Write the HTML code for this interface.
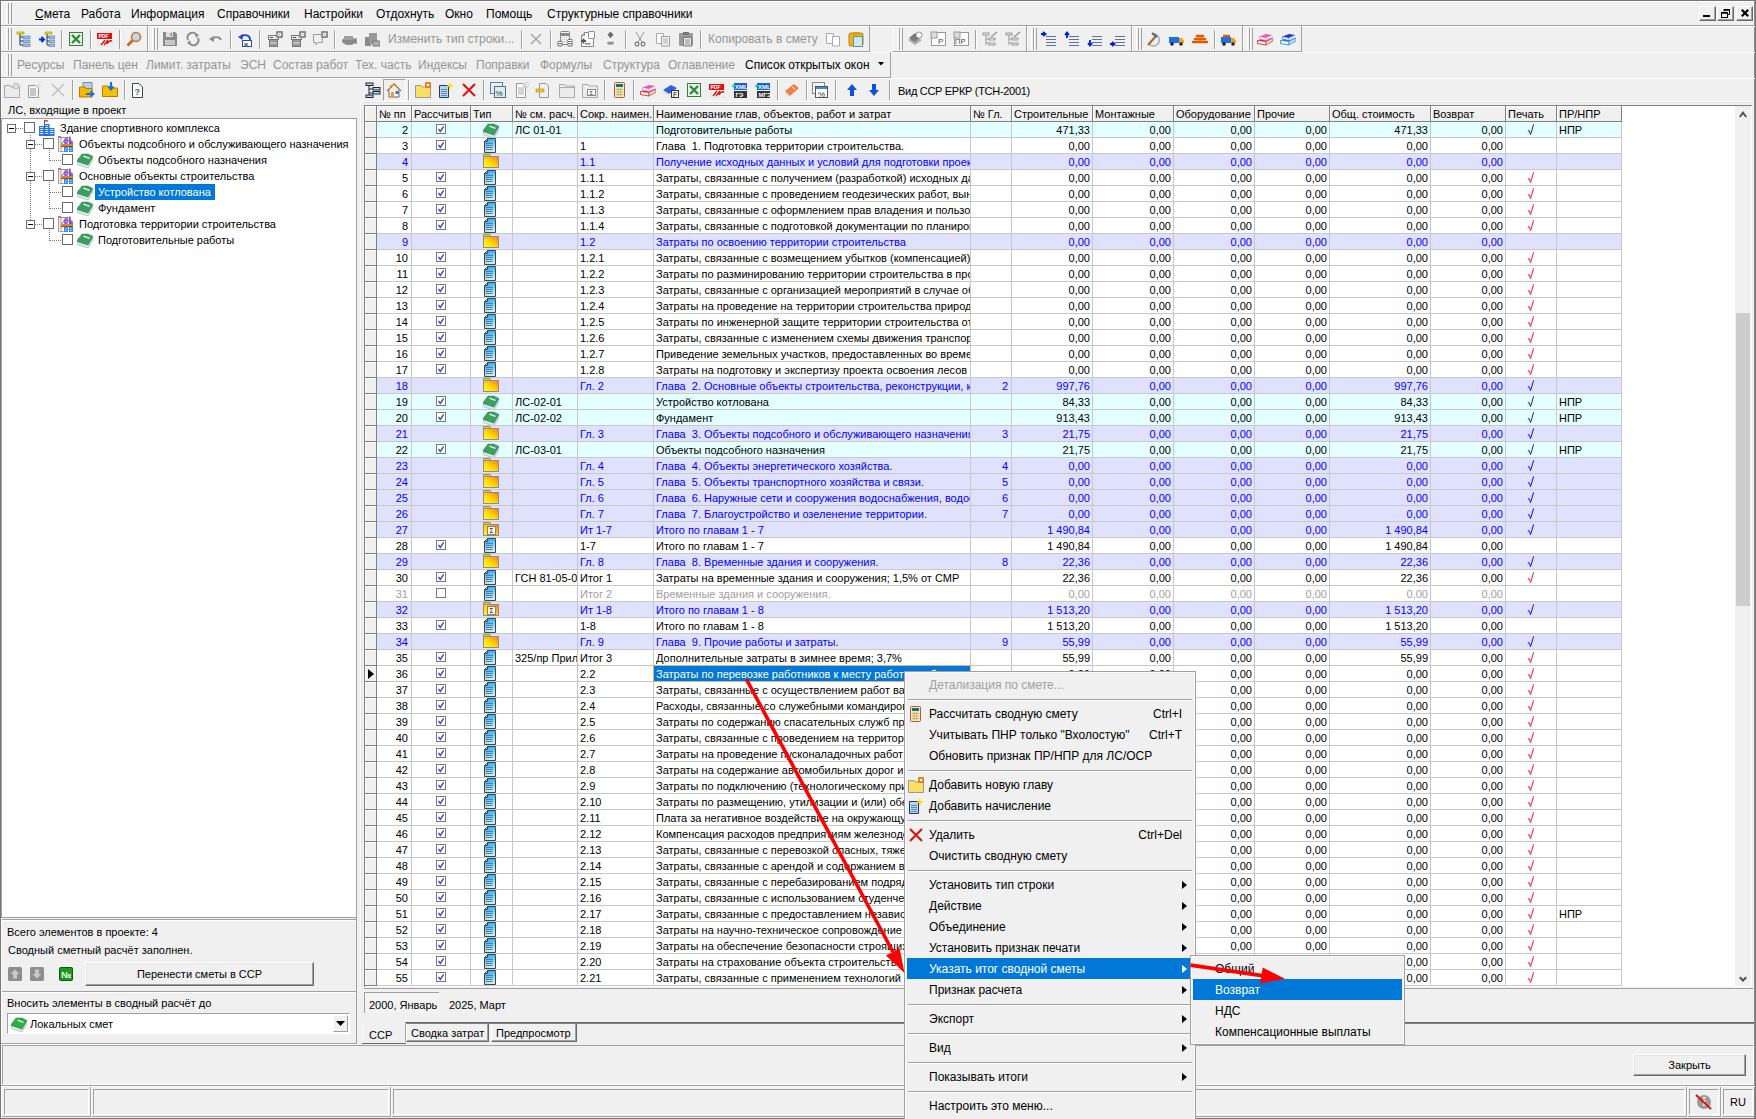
<!DOCTYPE html><html><head><meta charset="utf-8"><style>*{margin:0;padding:0}html,body{width:1756px;height:1119px;overflow:hidden;background:#f0f0f0}
body>div,body>svg{position:absolute}
.t11{font-family:"Liberation Sans",sans-serif;font-size:11px;line-height:11px;white-space:pre}
.t12{font-family:"Liberation Sans",sans-serif;font-size:12px;line-height:12px;white-space:pre}
.clip{overflow:hidden}.r{text-align:right}</style></head><body><div style="left:0px;top:0px;width:1756px;height:1119px;background:#f0f0f0"></div>
<div style="left:0px;top:0px;width:1756px;height:1px;background:#767676"></div>
<div style="left:0px;top:0px;width:1px;height:1119px;background:#767676"></div>
<div style="left:1px;top:1px;width:1754px;height:1px;background:#fff"></div>
<div style="left:1px;top:1px;width:1px;height:1117px;background:#fff"></div>
<div style="left:1755px;top:0px;width:1px;height:1119px;background:#767676"></div>
<div style="left:1754px;top:1px;width:1px;height:1117px;background:#8c8c8c"></div>
<div style="left:0px;top:1118px;width:1756px;height:1px;background:#767676"></div>
<div style="left:6px;top:3px;width:1px;height:21px;background:#fff"></div>
<div style="left:8px;top:3px;width:1px;height:21px;background:#a0a0a0"></div>
<div style="left:9px;top:3px;width:1px;height:21px;background:#fff"></div>
<div style="left:11px;top:3px;width:1px;height:21px;background:#a0a0a0"></div>
<div class="t12" style="left:35px;top:8px;color:#000;">Смета</div>
<div class="t12" style="left:81px;top:8px;color:#000;">Работа</div>
<div class="t12" style="left:131px;top:8px;color:#000;">Информация</div>
<div class="t12" style="left:217px;top:8px;color:#000;">Справочники</div>
<div class="t12" style="left:304px;top:8px;color:#000;">Настройки</div>
<div class="t12" style="left:376px;top:8px;color:#000;">Отдохнуть</div>
<div class="t12" style="left:445px;top:8px;color:#000;">Окно</div>
<div class="t12" style="left:486px;top:8px;color:#000;">Помощь</div>
<div class="t12" style="left:547px;top:8px;color:#000;">Структурные справочники</div>
<div style="left:35px;top:19px;width:8px;height:1px;background:#000"></div>
<div style="left:1699px;top:6px;width:17px;height:15px;background:#f0f0f0;border-top:1px solid #fff;border-left:1px solid #fff;border-right:1px solid #696969;border-bottom:1px solid #696969;box-sizing:border-box;box-shadow:inset -1px -1px 0 #a0a0a0"></div>
<div style="left:1703px;top:15px;width:7px;height:2px;background:#000"></div>
<div style="left:1717px;top:6px;width:17px;height:15px;background:#f0f0f0;border-top:1px solid #fff;border-left:1px solid #fff;border-right:1px solid #696969;border-bottom:1px solid #696969;box-sizing:border-box;box-shadow:inset -1px -1px 0 #a0a0a0"></div>
<svg style="left:1721px;top:9px" width="10" height="9" viewBox="0 0 10 9"><path d="M3 0.5H8.5V5.5H7M3 0.5V2.5" fill="none" stroke="#000"/><path d="M3 1H8.5" stroke="#000" stroke-width="1.6"/><rect x="0.5" y="3.5" width="6" height="5" fill="none" stroke="#000"/><path d="M0.5 4H6.5" stroke="#000" stroke-width="1.6"/></svg>
<div style="left:1736px;top:6px;width:17px;height:15px;background:#f0f0f0;border-top:1px solid #fff;border-left:1px solid #fff;border-right:1px solid #696969;border-bottom:1px solid #696969;box-sizing:border-box;box-shadow:inset -1px -1px 0 #a0a0a0"></div>
<svg style="left:1741px;top:9px" width="8" height="8" viewBox="0 0 8 8"><path d="M0.8 0.8L7.2 7.2M7.2 0.8L0.8 7.2" stroke="#000" stroke-width="2.2"/></svg>
<div style="left:1px;top:25px;width:1754px;height:1px;background:#a0a0a0"></div>
<div style="left:1px;top:26px;width:1754px;height:1px;background:#fff"></div>
<div style="left:1px;top:51px;width:147px;height:1px;background:#a0a0a0"></div>
<div style="left:147px;top:26px;width:1px;height:25px;background:#a0a0a0"></div>
<div style="left:6px;top:28px;width:1px;height:22px;background:#fff"></div>
<div style="left:8px;top:28px;width:1px;height:22px;background:#a0a0a0"></div>
<div style="left:9px;top:28px;width:1px;height:22px;background:#fff"></div>
<div style="left:11px;top:28px;width:1px;height:22px;background:#a0a0a0"></div>
<svg style="left:15px;top:31px" width="16" height="16" viewBox="0 0 16 16"><rect x="2" y="1" width="7" height="2" fill="#f0e000" stroke="#a09000" stroke-width="0.6"/><path d="M5 3V14M5 6H8M5 10H8M5 14H8" stroke="#203060"/><rect x="8" y="5" width="7" height="2.4" fill="#9ec0e8" stroke="#5070a0" stroke-width="0.6"/><rect x="8" y="9" width="7" height="2.4" fill="#9ec0e8" stroke="#5070a0" stroke-width="0.6"/><rect x="8" y="13" width="7" height="2.4" fill="#9ec0e8" stroke="#5070a0" stroke-width="0.6"/></svg>
<svg style="left:39px;top:31px" width="16" height="16" viewBox="0 0 16 16"><rect x="6" y="1" width="7" height="2" fill="#f0e000" stroke="#a09000" stroke-width="0.6"/><path d="M8 3V14M8 6H10M8 10H10M8 14H10" stroke="#203060"/><rect x="10" y="5" width="6" height="2.4" fill="#9ec0e8" stroke="#5070a0" stroke-width="0.6"/><rect x="10" y="9" width="6" height="2.4" fill="#9ec0e8" stroke="#5070a0" stroke-width="0.6"/><rect x="10" y="13" width="6" height="2.4" fill="#9ec0e8" stroke="#5070a0" stroke-width="0.6"/><path d="M0 8.5H4M2.5 6L5 8.5L2.5 11" stroke="#0030e0" stroke-width="2" fill="none"/></svg>
<svg style="left:68px;top:31px" width="16" height="16" viewBox="0 0 16 16"><rect x="1.5" y="1.5" width="13" height="13" fill="#e8f4e8" stroke="#3a7a3a"/><path d="M4 4L12 12M12 4L4 12" stroke="#2e8b3a" stroke-width="2.4"/></svg>
<svg style="left:97px;top:31px" width="16" height="16" viewBox="0 0 16 16"><rect x="2" y="1" width="13" height="14" fill="#fff" stroke="#ddd"/><rect x="0" y="2" width="15" height="6" fill="#e01010"/><text x="1.5" y="7" font-size="5" font-family="Liberation Sans" font-weight="bold" fill="#fff">PDF</text><path d="M4 14L8 9M7 14L11 9M10 13Q12 9 15 10" stroke="#e01010" stroke-width="1.5" fill="none"/></svg>
<svg style="left:126px;top:31px" width="16" height="16" viewBox="0 0 16 16"><circle cx="10" cy="6" r="4.5" fill="#b8d8f8" stroke="#d07020" stroke-width="1.5"/><path d="M6.5 9.5L1.5 14.5" stroke="#d06010" stroke-width="2.5"/></svg>
<div style="left:61px;top:30px;width:1px;height:19px;background:#a0a0a0"></div>
<div style="left:62px;top:30px;width:1px;height:19px;background:#fff"></div>
<div style="left:90px;top:30px;width:1px;height:19px;background:#a0a0a0"></div>
<div style="left:91px;top:30px;width:1px;height:19px;background:#fff"></div>
<div style="left:119px;top:30px;width:1px;height:19px;background:#a0a0a0"></div>
<div style="left:120px;top:30px;width:1px;height:19px;background:#fff"></div>
<div style="left:148px;top:51px;width:722px;height:1px;background:#a0a0a0"></div>
<div style="left:869px;top:26px;width:1px;height:25px;background:#a0a0a0"></div>
<div style="left:148px;top:26px;width:1px;height:25px;background:#fff"></div>
<div style="left:152px;top:28px;width:1px;height:22px;background:#fff"></div>
<div style="left:154px;top:28px;width:1px;height:22px;background:#a0a0a0"></div>
<div style="left:155px;top:28px;width:1px;height:22px;background:#fff"></div>
<div style="left:157px;top:28px;width:1px;height:22px;background:#a0a0a0"></div>
<svg style="left:162px;top:31px" width="16" height="16" viewBox="0 0 16 16"><path d="M1 1H13L15 3V15H1Z" fill="#8a8a8a"/><rect x="4" y="1" width="7" height="5" fill="#e0e0e0"/><rect x="8.5" y="2" width="1.5" height="3" fill="#8a8a8a"/><rect x="3" y="9" width="10" height="5" fill="#c8c8c8"/></svg>
<svg style="left:185px;top:31px" width="16" height="16" viewBox="0 0 16 16"><path d="M3 9A5 5 0 0 1 12 4.5M13 7A5 5 0 0 1 4 11.5" stroke="#8a8a8a" stroke-width="2" fill="none"/><path d="M10 2L14 4L11 7Z M6 14L2 12L5 9Z" fill="#8a8a8a"/></svg>
<svg style="left:208px;top:31px" width="16" height="16" viewBox="0 0 16 16"><path d="M4 8A5 4 0 0 1 13 9" stroke="#8a8a8a" stroke-width="1.8" fill="none"/><path d="M1 8L6 5L6 11Z" fill="#8a8a8a"/></svg>
<svg style="left:237px;top:31px" width="16" height="16" viewBox="0 0 16 16"><path d="M4 6A5 4.5 0 0 1 13 9" stroke="#2040e0" stroke-width="1.8" fill="none"/><path d="M1 6L6 3L5.5 9Z" fill="#2040e0"/><rect x="5.5" y="9.5" width="9" height="6" fill="#fff" stroke="#2050a0"/><text x="7" y="15" font-size="6" font-family="Liberation Sans" fill="#000">ж</text></svg>
<svg style="left:267px;top:31px" width="16" height="16" viewBox="0 0 16 16"><rect x="1.5" y="4.5" width="10" height="4" fill="#e8e8e8" stroke="#7a7a7a"/><path d="M3 6.5H6" stroke="#555"/><rect x="2.5" y="8.5" width="8" height="7" fill="#9a9a9a" stroke="#777"/><path d="M3 12H10" stroke="#ddd"/><rect x="9" y="0" width="7" height="7" rx="1.2" fill="#8a8a8a"/><circle cx="12.5" cy="3.5" r="1.8" fill="#fff"/><circle cx="12.5" cy="3.5" r="0.7" fill="#8a8a8a"/></svg>
<svg style="left:290px;top:31px" width="16" height="16" viewBox="0 0 16 16"><rect x="1.5" y="4.5" width="10" height="4" fill="#e8e8e8" stroke="#7a7a7a"/><path d="M3 6.5H6" stroke="#555"/><rect x="2.5" y="8.5" width="8" height="7" fill="#9a9a9a" stroke="#777"/><path d="M3 12H10" stroke="#ddd"/><rect x="9" y="0" width="7" height="7" rx="1.2" fill="#8a8a8a"/><circle cx="12.5" cy="3.5" r="1.8" fill="#fff"/><circle cx="12.5" cy="3.5" r="0.7" fill="#8a8a8a"/></svg>
<svg style="left:312px;top:31px" width="16" height="16" viewBox="0 0 16 16"><path d="M1.5 3.5H10.5V11.5H6L4 14V11.5H1.5Z" fill="none" stroke="#9a9a9a"/><rect x="9" y="0" width="7" height="7" rx="1.2" fill="#8a8a8a"/><circle cx="12.5" cy="3.5" r="1.8" fill="#fff"/><circle cx="12.5" cy="3.5" r="0.7" fill="#8a8a8a"/></svg>
<svg style="left:341px;top:31px" width="16" height="16" viewBox="0 0 16 16"><ellipse cx="8" cy="10" rx="7" ry="4" fill="#8a8a8a"/><rect x="3" y="5" width="9" height="4" fill="#a0a0a0"/><path d="M15 7V13" stroke="#555"/></svg>
<svg style="left:364px;top:31px" width="16" height="16" viewBox="0 0 16 16"><rect x="1" y="6" width="6" height="9" fill="#8a8a8a"/><rect x="5" y="2" width="8" height="11" fill="#9a9a9a"/><rect x="9" y="10" width="7" height="5" fill="#b0b0b0" stroke="#777"/></svg>
<svg style="left:528px;top:31px" width="16" height="16" viewBox="0 0 16 16"><path d="M3 3L13 13M13 3L3 13" stroke="#9a9a9a" stroke-width="1.2"/></svg>
<svg style="left:557px;top:31px" width="16" height="16" viewBox="0 0 16 16"><rect x="3.5" y="0.5" width="9" height="13" rx="1" fill="#f4f4f4" stroke="#888"/><rect x="4" y="2" width="8" height="3" fill="#8a8a8a"/><path d="M5 6.5H11M5 8.5H11M5 10.5H11" stroke="#ccc" stroke-dasharray="1 1"/><ellipse cx="3" cy="11.5" rx="2.6" ry="1.3" fill="#fff" stroke="#6a6a6a"/><ellipse cx="3" cy="13.8" rx="2.6" ry="1.3" fill="#fff" stroke="#6a6a6a"/><ellipse cx="13" cy="9.5" rx="2.6" ry="1.3" fill="#fff" stroke="#6a6a6a"/><ellipse cx="13" cy="11.7" rx="2.6" ry="1.3" fill="#fff" stroke="#6a6a6a"/><ellipse cx="13" cy="13.8" rx="2.6" ry="1.3" fill="#fff" stroke="#6a6a6a"/></svg>
<svg style="left:580px;top:31px" width="16" height="16" viewBox="0 0 16 16"><path d="M4.5 1.5H13.5V15.5H1.5V4.5Z" fill="#fff" stroke="#888"/><path d="M1.5 4.5H4.5V1.5" fill="none" stroke="#888"/><rect x="8.5" y="0.5" width="6" height="7" rx="0.8" fill="#fff" stroke="#888"/><path d="M1 10H6M3.5 7.5V12.5" stroke="#555" stroke-width="1.8"/><rect x="5" y="12" width="5.5" height="1.6" fill="#8a8a8a"/></svg>
<svg style="left:602px;top:31px" width="16" height="16" viewBox="0 0 16 16"><path d="M8.5 1L11 3.8L8.5 6.8L6 3.8Z" fill="#6a6a6a" stroke="#6a6a6a" stroke-width="0.8" stroke-linejoin="round"/><rect x="5.5" y="11" width="6" height="2.2" rx="1" fill="#9a9a9a" stroke="#777" stroke-width="0.5"/></svg>
<svg style="left:632px;top:31px" width="16" height="16" viewBox="0 0 16 16"><path d="M4 1L10 11M12 1L6 11" stroke="#999" stroke-width="1"/><circle cx="5" cy="13" r="2" fill="none" stroke="#555"/><circle cx="11" cy="13" r="2" fill="none" stroke="#555"/></svg>
<svg style="left:655px;top:31px" width="16" height="16" viewBox="0 0 16 16"><path d="M1.5 2.5H8.5V12.5H1.5Z" fill="#fff" stroke="#aaa"/><path d="M6.5 5.5H14.5V15H6.5Z" fill="#f5f5f5" stroke="#999"/><path d="M8 8H13M8 10H13M8 12H13" stroke="#aaa"/></svg>
<svg style="left:678px;top:31px" width="16" height="16" viewBox="0 0 16 16"><rect x="1" y="2" width="14" height="13" rx="1" fill="#9a9a9a"/><rect x="5" y="1" width="6" height="3" fill="#777"/><path d="M5.5 6.5H13.5V15H5.5Z" fill="#eee" stroke="#777"/><path d="M7 9H12M7 11H12M7 13H12" stroke="#888"/></svg>
<svg style="left:825px;top:31px" width="16" height="16" viewBox="0 0 16 16"><path d="M1.5 2.5H8.5V12.5H1.5Z" fill="#fff" stroke="#aaa"/><path d="M7.5 5.5H14.5V15H7.5Z" fill="#fff" stroke="#aaa"/></svg>
<svg style="left:848px;top:31px" width="16" height="16" viewBox="0 0 16 16"><rect x="1" y="2" width="14" height="13" rx="2" fill="#f0b020" stroke="#c08000"/><rect x="5" y="1" width="6" height="3" fill="#e0a000"/><path d="M5.5 5.5H14.5V15.5H5.5Z" fill="#cfe8f0" stroke="#6090a0"/></svg>
<div style="left:230px;top:30px;width:1px;height:19px;background:#a0a0a0"></div>
<div style="left:231px;top:30px;width:1px;height:19px;background:#fff"></div>
<div style="left:259px;top:30px;width:1px;height:19px;background:#a0a0a0"></div>
<div style="left:260px;top:30px;width:1px;height:19px;background:#fff"></div>
<div style="left:334px;top:30px;width:1px;height:19px;background:#a0a0a0"></div>
<div style="left:335px;top:30px;width:1px;height:19px;background:#fff"></div>
<div style="left:521px;top:30px;width:1px;height:19px;background:#a0a0a0"></div>
<div style="left:522px;top:30px;width:1px;height:19px;background:#fff"></div>
<div style="left:550px;top:30px;width:1px;height:19px;background:#a0a0a0"></div>
<div style="left:551px;top:30px;width:1px;height:19px;background:#fff"></div>
<div style="left:625px;top:30px;width:1px;height:19px;background:#a0a0a0"></div>
<div style="left:626px;top:30px;width:1px;height:19px;background:#fff"></div>
<div style="left:700px;top:30px;width:1px;height:19px;background:#a0a0a0"></div>
<div style="left:701px;top:30px;width:1px;height:19px;background:#fff"></div>
<div class="t12" style="left:388px;top:33px;color:#959595;">Изменить тип строки...</div>
<div class="t12" style="left:708px;top:33px;color:#959595;">Копировать в смету</div>
<div style="left:893px;top:51px;width:134px;height:1px;background:#a0a0a0"></div>
<div style="left:1026px;top:26px;width:1px;height:25px;background:#a0a0a0"></div>
<div style="left:893px;top:26px;width:1px;height:25px;background:#fff"></div>
<div style="left:897px;top:28px;width:1px;height:22px;background:#fff"></div>
<div style="left:899px;top:28px;width:1px;height:22px;background:#a0a0a0"></div>
<div style="left:900px;top:28px;width:1px;height:22px;background:#fff"></div>
<div style="left:902px;top:28px;width:1px;height:22px;background:#a0a0a0"></div>
<svg style="left:907px;top:31px" width="16" height="16" viewBox="0 0 16 16"><path d="M1 9L8 14L15 9L8 5Z" fill="#aaa"/><path d="M2 7L8 2L13 6L8 11Z" fill="#7a7a7a"/><circle cx="12" cy="4" r="3" fill="#fff" stroke="#999"/></svg>
<svg style="left:930px;top:31px" width="16" height="16" viewBox="0 0 16 16"><rect x="1.5" y="1.5" width="14" height="13" fill="#fff" stroke="#999"/><rect x="1" y="1" width="6" height="6" fill="#ddd" stroke="#999"/><text x="8" y="13" font-size="8" font-family="Liberation Sans" fill="#444">Р</text></svg>
<svg style="left:953px;top:31px" width="16" height="16" viewBox="0 0 16 16"><rect x="1.5" y="1.5" width="14" height="13" fill="#fff" stroke="#999"/><rect x="1" y="1" width="6" height="6" fill="#ddd" stroke="#999"/><text x="2" y="13" font-size="7.5" font-family="Liberation Sans" fill="#444">ПР</text></svg>
<svg style="left:982px;top:31px" width="16" height="16" viewBox="0 0 16 16"><rect x="1" y="2" width="6" height="2" fill="none" stroke="#999"/><path d="M4 4V14M4 8H7M4 12H7" stroke="#999"/><rect x="7" y="7" width="6" height="2" fill="none" stroke="#999"/><rect x="7" y="12" width="6" height="2" fill="none" stroke="#999"/><path d="M9 6L15 1" stroke="#999" stroke-width="1.5"/></svg>
<svg style="left:1005px;top:31px" width="16" height="16" viewBox="0 0 16 16"><rect x="1" y="2" width="6" height="2" fill="none" stroke="#999"/><path d="M4 4V14M4 8H7M4 12H7" stroke="#999"/><rect x="7" y="7" width="6" height="2" fill="none" stroke="#999"/><rect x="7" y="12" width="6" height="2" fill="none" stroke="#999"/><path d="M9 6L15 1" stroke="#999" stroke-width="1.5"/></svg>
<div style="left:975px;top:30px;width:1px;height:19px;background:#a0a0a0"></div>
<div style="left:976px;top:30px;width:1px;height:19px;background:#fff"></div>
<div style="left:1027px;top:51px;width:105px;height:1px;background:#a0a0a0"></div>
<div style="left:1131px;top:26px;width:1px;height:25px;background:#a0a0a0"></div>
<div style="left:1027px;top:26px;width:1px;height:25px;background:#fff"></div>
<div style="left:1031px;top:28px;width:1px;height:22px;background:#fff"></div>
<div style="left:1033px;top:28px;width:1px;height:22px;background:#a0a0a0"></div>
<div style="left:1034px;top:28px;width:1px;height:22px;background:#fff"></div>
<div style="left:1036px;top:28px;width:1px;height:22px;background:#a0a0a0"></div>
<svg style="left:1041px;top:31px" width="16" height="16" viewBox="0 0 16 16"><path d="M5 5.5H15M5 8.5H15M5 11.5H15M5 14.5H15" stroke="#6070a0" stroke-width="1.2"/><path d="M0 3H4M2 1L4.5 3L2 5" stroke="#0020d0" stroke-width="1.8" fill="none"/></svg>
<svg style="left:1064px;top:31px" width="16" height="16" viewBox="0 0 16 16"><path d="M5 5.5H15M5 8.5H15M5 11.5H15M5 14.5H15" stroke="#6070a0" stroke-width="1.2"/><path d="M3 7V2M1 4L3 1.5L5 4" stroke="#0020d0" stroke-width="1.8" fill="none"/></svg>
<svg style="left:1087px;top:31px" width="16" height="16" viewBox="0 0 16 16"><path d="M5 5.5H15M5 8.5H15M5 11.5H15M5 14.5H15" stroke="#6070a0" stroke-width="1.2"/><path d="M3 9V14M1 12L3 14.5L5 12" stroke="#0020d0" stroke-width="1.8" fill="none"/></svg>
<svg style="left:1110px;top:31px" width="16" height="16" viewBox="0 0 16 16"><path d="M5 5.5H15M5 8.5H15M5 11.5H15M5 14.5H15" stroke="#6070a0" stroke-width="1.2"/><path d="M0 13H4M2 11L4.5 13L2 15" stroke="#0020d0" stroke-width="1.8" fill="none"/></svg>
<div style="left:1132px;top:51px;width:111px;height:1px;background:#a0a0a0"></div>
<div style="left:1242px;top:26px;width:1px;height:25px;background:#a0a0a0"></div>
<div style="left:1132px;top:26px;width:1px;height:25px;background:#fff"></div>
<div style="left:1136px;top:28px;width:1px;height:22px;background:#fff"></div>
<div style="left:1138px;top:28px;width:1px;height:22px;background:#a0a0a0"></div>
<div style="left:1139px;top:28px;width:1px;height:22px;background:#fff"></div>
<div style="left:1141px;top:28px;width:1px;height:22px;background:#a0a0a0"></div>
<svg style="left:1146px;top:31px" width="16" height="16" viewBox="0 0 16 16"><path d="M3 13A6 6 0 1 0 6 3" stroke="#9ab0b8" stroke-width="1.5" fill="none"/><path d="M2 14L10 5" stroke="#b06020" stroke-width="2"/><path d="M6 2L11 6" stroke="#506070" stroke-width="2"/></svg>
<svg style="left:1169px;top:31px" width="16" height="16" viewBox="0 0 16 16"><rect x="0" y="6" width="10" height="6" fill="#1e70e0"/><path d="M10 7H13L15 10V12H10Z" fill="#f0a020"/><circle cx="3" cy="13" r="1.8" fill="#222"/><circle cx="12" cy="13" r="1.8" fill="#222"/></svg>
<svg style="left:1192px;top:31px" width="16" height="16" viewBox="0 0 16 16"><path d="M1 11H15M3 8H13M5 5H11" stroke="#e05a00" stroke-width="2.6" stroke-linecap="round"/></svg>
<svg style="left:1221px;top:31px" width="16" height="16" viewBox="0 0 16 16"><rect x="0" y="6" width="10" height="6" fill="#1e70e0"/><path d="M2 5H9" stroke="#e05a00" stroke-width="2.4"/><path d="M10 7H13L15 10V12H10Z" fill="#f0a020"/><circle cx="3" cy="13" r="1.8" fill="#222"/><circle cx="12" cy="13" r="1.8" fill="#222"/></svg>
<div style="left:1214px;top:30px;width:1px;height:19px;background:#a0a0a0"></div>
<div style="left:1215px;top:30px;width:1px;height:19px;background:#fff"></div>
<div style="left:1243px;top:51px;width:59px;height:1px;background:#a0a0a0"></div>
<div style="left:1301px;top:26px;width:1px;height:25px;background:#a0a0a0"></div>
<div style="left:1243px;top:26px;width:1px;height:25px;background:#fff"></div>
<div style="left:1247px;top:28px;width:1px;height:22px;background:#fff"></div>
<div style="left:1249px;top:28px;width:1px;height:22px;background:#a0a0a0"></div>
<div style="left:1250px;top:28px;width:1px;height:22px;background:#fff"></div>
<div style="left:1252px;top:28px;width:1px;height:22px;background:#a0a0a0"></div>
<svg style="left:1257px;top:31px" width="16" height="16" viewBox="0 0 16 16"><path d="M0.5 9.5 L7 7 L16 7 L9 10.5 Z" fill="#e02828"/><path d="M0.5 9.5 L9 10.5 L9 14 L0.5 12.5 Z" fill="#fff" stroke="#e02828" stroke-width="0.9"/><path d="M9 10.5 L16 7 L16 10 L9 14 Z" fill="#d4dbe8" stroke="#e02828" stroke-width="0.7"/><path d="M2.5 5.5 L9 3 L15.5 4 L9 7 Z" fill="#e060b0"/><path d="M2.5 5.5 L9 7 L9 9.5 L2.5 8 Z" fill="#fff" stroke="#e060b0" stroke-width="0.6"/><path d="M9 7 L15.5 4 L15.5 6.5 L9 9.5 Z" fill="#dde2ee"/></svg>
<svg style="left:1280px;top:31px" width="16" height="16" viewBox="0 0 16 16"><path d="M0.5 9.5 L7 7 L16 7 L9 10.5 Z" fill="#1890e0"/><path d="M0.5 9.5 L9 10.5 L9 14 L0.5 12.5 Z" fill="#fff" stroke="#1890e0" stroke-width="0.9"/><path d="M9 10.5 L16 7 L16 10 L9 14 Z" fill="#d4dbe8" stroke="#1890e0" stroke-width="0.7"/><path d="M2.5 5.5 L9 3 L15.5 4 L9 7 Z" fill="#1a3ad0"/><path d="M2.5 5.5 L9 7 L9 9.5 L2.5 8 Z" fill="#fff" stroke="#1a3ad0" stroke-width="0.6"/><path d="M9 7 L15.5 4 L15.5 6.5 L9 9.5 Z" fill="#dde2ee"/></svg>
<div style="left:1px;top:52px;width:1754px;height:1px;background:#fff"></div>
<div style="left:1px;top:77px;width:890px;height:1px;background:#a0a0a0"></div>
<div style="left:890px;top:52px;width:1px;height:25px;background:#a0a0a0"></div>
<div style="left:6px;top:54px;width:1px;height:22px;background:#fff"></div>
<div style="left:8px;top:54px;width:1px;height:22px;background:#a0a0a0"></div>
<div style="left:9px;top:54px;width:1px;height:22px;background:#fff"></div>
<div style="left:11px;top:54px;width:1px;height:22px;background:#a0a0a0"></div>
<div class="t12" style="left:17px;top:59px;color:#959595;">Ресурсы</div>
<div class="t12" style="left:73px;top:59px;color:#959595;">Панель цен</div>
<div class="t12" style="left:146px;top:59px;color:#959595;">Лимит. затраты</div>
<div class="t12" style="left:240px;top:59px;color:#959595;">ЭСН</div>
<div class="t12" style="left:273px;top:59px;color:#959595;">Состав работ</div>
<div class="t12" style="left:355px;top:59px;color:#959595;">Тех. часть</div>
<div class="t12" style="left:418px;top:59px;color:#959595;">Индексы</div>
<div class="t12" style="left:476px;top:59px;color:#959595;">Поправки</div>
<div class="t12" style="left:540px;top:59px;color:#959595;">Формулы</div>
<div class="t12" style="left:603px;top:59px;color:#959595;">Структура</div>
<div class="t12" style="left:668px;top:59px;color:#959595;">Оглавление</div>
<div class="t12" style="left:745px;top:59px;color:#000;">Список открытых окон</div>
<svg style="left:878px;top:62px" width="6" height="4" viewBox="0 0 6 4"><path d="M0 0H6L3 3.5Z" fill="#000"/></svg>
<div style="left:1px;top:78px;width:1754px;height:1px;background:#fff"></div>
<svg style="left:4px;top:82px" width="16" height="16" viewBox="0 0 16 16"><path d="M0.5 3.5H6L7 5H15.5V15.5H0.5Z" fill="#ececec" stroke="#aaa"/><circle cx="12" cy="4" r="3" fill="#ddd" stroke="#bbb"/></svg>
<svg style="left:27px;top:82px" width="16" height="16" viewBox="0 0 16 16"><path d="M1.5 3.5H9L11.5 6V15.5H1.5Z" fill="#f4f4f4" stroke="#999"/><path d="M3 7H9M3 9H9M3 11H9M3 13H9" stroke="#999"/><path d="M12 0L13 3L16 4L13 5L12 8L11 5L8 4L11 3Z" fill="#ddd"/></svg>
<svg style="left:50px;top:82px" width="16" height="16" viewBox="0 0 16 16"><path d="M2 2L14 14M14 2L2 14" stroke="#c0c0c0" stroke-width="1.5"/></svg>
<svg style="left:79px;top:82px" width="16" height="16" viewBox="0 0 16 16"><rect x="4" y="0.5" width="9" height="10" fill="#b8d0f0" stroke="#7090b0"/><path d="M0.5 5H6L7 6.5H13V15H0.5Z" fill="#f5b800" stroke="#b08000"/><path d="M7 12H14M11.5 9.5L14.5 12L11.5 14.5" stroke="#1e70e0" stroke-width="2" fill="none"/></svg>
<svg style="left:102px;top:82px" width="16" height="16" viewBox="0 0 16 16"><path d="M0.5 4H6L7 6H15.5V14.5H0.5Z" fill="#f5c000" stroke="#b08000"/><path d="M9 0V7M6.5 4.5L9 7.5L11.5 4.5" stroke="#1e70e0" stroke-width="2" fill="none"/></svg>
<svg style="left:130px;top:82px" width="16" height="16" viewBox="0 0 16 16"><path d="M2.5 1.5H9L12.5 5V15.5H2.5Z" fill="#fff" stroke="#444"/><text x="4.5" y="12.5" font-size="9" font-weight="bold" font-family="Liberation Sans" fill="#1a8a30">?</text></svg>
<div style="left:72px;top:80px;width:1px;height:20px;background:#a0a0a0"></div>
<div style="left:73px;top:80px;width:1px;height:20px;background:#fff"></div>
<div style="left:124px;top:80px;width:1px;height:20px;background:#a0a0a0"></div>
<div style="left:125px;top:80px;width:1px;height:20px;background:#fff"></div>
<div class="t11" style="left:8px;top:105px;color:#000;">ЛС, входящие в проект</div>
<div style="left:2px;top:119px;width:354px;height:798px;background:#fff"></div>
<div style="left:1px;top:118px;width:356px;height:1px;background:#a0a0a0"></div>
<div style="left:1px;top:118px;width:1px;height:800px;background:#a0a0a0"></div>
<div style="left:356px;top:118px;width:1px;height:800px;background:#a0a0a0"></div>
<div style="left:1px;top:917px;width:356px;height:1px;background:#a0a0a0"></div>
<div style="left:30px;top:135px;width:0;height:85px;border-left:1px dotted #7a7a7a"></div>
<div style="left:49px;top:148px;width:0;height:13px;border-left:1px dotted #7a7a7a"></div>
<div style="left:49px;top:180px;width:0;height:29px;border-left:1px dotted #7a7a7a"></div>
<div style="left:49px;top:228px;width:0;height:13px;border-left:1px dotted #7a7a7a"></div>
<div style="left:16px;top:128px;width:7px;height:0;border-top:1px dotted #7a7a7a"></div>
<svg style="left:7px;top:124px" width="9" height="9" viewBox="0 0 9 9"><rect x="0.5" y="0.5" width="8" height="8" fill="#fff" stroke="#6f6f6f"/><path d="M2 4.5H7" stroke="#000"/></svg>
<svg style="left:24px;top:122px" width="11" height="11" viewBox="0 0 11 11"><rect x="0.5" y="0.5" width="10" height="10" fill="#fff" stroke="#6a6a6a"/></svg>
<svg style="left:39px;top:120px" width="16" height="16" viewBox="0 0 16 16"><rect x="0" y="6" width="5.5" height="10" fill="#2f7ad8"/><rect x="5" y="4" width="5.5" height="12" fill="#1a6ad8"/><rect x="10" y="8" width="5.5" height="8" fill="#2f7ad8"/><path d="M1.2 7.5H4.3M1.2 9.5H4.3M1.2 11.5H4.3M1.2 13.5H4.3M6.2 5.5H9.3M6.2 7.5H9.3M6.2 9.5H9.3M6.2 11.5H9.3M6.2 13.5H9.3M11.2 9.5H14.3M11.2 11.5H14.3M11.2 13.5H14.3" stroke="#d8e8ff" stroke-width="1"/><path d="M5.5 0V4" stroke="#333" stroke-width="0.8"/><path d="M6 0.3H8.5L9.5 1.6H6Z" fill="#e80000"/></svg>
<div class="t11" style="left:60px;top:123px;color:#000;">Здание спортивного комплекса</div>
<div style="left:35px;top:144px;width:7px;height:0;border-top:1px dotted #7a7a7a"></div>
<svg style="left:26px;top:140px" width="9" height="9" viewBox="0 0 9 9"><rect x="0.5" y="0.5" width="8" height="8" fill="#fff" stroke="#6f6f6f"/><path d="M2 4.5H7" stroke="#000"/></svg>
<svg style="left:43px;top:138px" width="11" height="11" viewBox="0 0 11 11"><rect x="0.5" y="0.5" width="10" height="10" fill="#fff" stroke="#6a6a6a"/></svg>
<svg style="left:58px;top:136px" width="16" height="16" viewBox="0 0 16 16"><rect x="0.5" y="1" width="2.5" height="15" fill="#fff" stroke="#888" stroke-width="0.8"/><path d="M1.7 3V4M1.7 6V7M1.7 9V10M1.7 12V13" stroke="#888" stroke-width="0.6"/><path d="M0 1.5H11.5M3 15.5H5.5" stroke="#888" stroke-width="0.9"/><rect x="0" y="0" width="3" height="2" fill="#a070f0"/><path d="M6 8V3.5L8 2.5L10 3.5V8Z" fill="#9a70f0"/><path d="M11 8V0L13 1.5V4L15 5.5V16H11Z" fill="#9060f0"/><path d="M3.5 8L8.6 1.5L13 8" fill="none" stroke="#702020" stroke-width="0.7"/><rect x="3" y="8" width="11.5" height="2.6" fill="#f08010"/><path d="M3 10.6H14.5" stroke="#702818" stroke-width="0.8"/><rect x="6" y="11" width="4" height="5" fill="#2a8ff5"/><rect x="11" y="11" width="4" height="5" fill="#2a8ff5"/><path d="M7 12.5H9M7 14.5H9M12 12.5H14M12 14.5H14" stroke="#e8f4ff" stroke-width="0.8" stroke-dasharray="0.8 0.6"/></svg>
<div class="t11" style="left:79px;top:139px;color:#000;">Объекты подсобного и обслуживающего назначения</div>
<div style="left:49px;top:160px;width:12px;height:0;border-top:1px dotted #7a7a7a"></div>
<svg style="left:62px;top:154px" width="11" height="11" viewBox="0 0 11 11"><rect x="0.5" y="0.5" width="10" height="10" fill="#fff" stroke="#6a6a6a"/></svg>
<svg style="left:77px;top:152px" width="16" height="16" viewBox="0 0 16 16"><path d="M0 9 L11 13 L16 4.5 L16 7.5 L11 16 L0 12.5 Z" fill="#e2e6ee" stroke="#a8b0c0" stroke-width="0.7"/><path d="M0 8.5 L5 2 L11 2 L16 4.5 L11 13 L0 9.5 Z" fill="#3aa060" stroke="#2a8048" stroke-width="0.5"/><path d="M6.5 4.2 L12.5 6.3" stroke="#f4fff6" stroke-width="1.4"/></svg>
<div class="t11" style="left:98px;top:155px;color:#000;">Объекты подсобного назначения</div>
<div style="left:35px;top:176px;width:7px;height:0;border-top:1px dotted #7a7a7a"></div>
<svg style="left:26px;top:172px" width="9" height="9" viewBox="0 0 9 9"><rect x="0.5" y="0.5" width="8" height="8" fill="#fff" stroke="#6f6f6f"/><path d="M2 4.5H7" stroke="#000"/></svg>
<svg style="left:43px;top:170px" width="11" height="11" viewBox="0 0 11 11"><rect x="0.5" y="0.5" width="10" height="10" fill="#fff" stroke="#6a6a6a"/></svg>
<svg style="left:58px;top:168px" width="16" height="16" viewBox="0 0 16 16"><rect x="0.5" y="1" width="2.5" height="15" fill="#fff" stroke="#888" stroke-width="0.8"/><path d="M1.7 3V4M1.7 6V7M1.7 9V10M1.7 12V13" stroke="#888" stroke-width="0.6"/><path d="M0 1.5H11.5M3 15.5H5.5" stroke="#888" stroke-width="0.9"/><rect x="0" y="0" width="3" height="2" fill="#a070f0"/><path d="M6 8V3.5L8 2.5L10 3.5V8Z" fill="#9a70f0"/><path d="M11 8V0L13 1.5V4L15 5.5V16H11Z" fill="#9060f0"/><path d="M3.5 8L8.6 1.5L13 8" fill="none" stroke="#702020" stroke-width="0.7"/><rect x="3" y="8" width="11.5" height="2.6" fill="#f08010"/><path d="M3 10.6H14.5" stroke="#702818" stroke-width="0.8"/><rect x="6" y="11" width="4" height="5" fill="#2a8ff5"/><rect x="11" y="11" width="4" height="5" fill="#2a8ff5"/><path d="M7 12.5H9M7 14.5H9M12 12.5H14M12 14.5H14" stroke="#e8f4ff" stroke-width="0.8" stroke-dasharray="0.8 0.6"/></svg>
<div class="t11" style="left:79px;top:171px;color:#000;">Основные объекты строительства</div>
<div style="left:49px;top:192px;width:12px;height:0;border-top:1px dotted #7a7a7a"></div>
<svg style="left:62px;top:186px" width="11" height="11" viewBox="0 0 11 11"><rect x="0.5" y="0.5" width="10" height="10" fill="#fff" stroke="#6a6a6a"/></svg>
<svg style="left:77px;top:184px" width="16" height="16" viewBox="0 0 16 16"><path d="M0 9 L11 13 L16 4.5 L16 7.5 L11 16 L0 12.5 Z" fill="#e2e6ee" stroke="#a8b0c0" stroke-width="0.7"/><path d="M0 8.5 L5 2 L11 2 L16 4.5 L11 13 L0 9.5 Z" fill="#3aa060" stroke="#2a8048" stroke-width="0.5"/><path d="M6.5 4.2 L12.5 6.3" stroke="#f4fff6" stroke-width="1.4"/></svg>
<div style="left:95px;top:184px;width:120px;height:16px;background:#0078d7"></div>
<div class="t11" style="left:98px;top:187px;color:#fff;">Устройство котлована</div>
<div style="left:49px;top:208px;width:12px;height:0;border-top:1px dotted #7a7a7a"></div>
<svg style="left:62px;top:202px" width="11" height="11" viewBox="0 0 11 11"><rect x="0.5" y="0.5" width="10" height="10" fill="#fff" stroke="#6a6a6a"/></svg>
<svg style="left:77px;top:200px" width="16" height="16" viewBox="0 0 16 16"><path d="M0 9 L11 13 L16 4.5 L16 7.5 L11 16 L0 12.5 Z" fill="#e2e6ee" stroke="#a8b0c0" stroke-width="0.7"/><path d="M0 8.5 L5 2 L11 2 L16 4.5 L11 13 L0 9.5 Z" fill="#3aa060" stroke="#2a8048" stroke-width="0.5"/><path d="M6.5 4.2 L12.5 6.3" stroke="#f4fff6" stroke-width="1.4"/></svg>
<div class="t11" style="left:98px;top:203px;color:#000;">Фундамент</div>
<div style="left:35px;top:224px;width:7px;height:0;border-top:1px dotted #7a7a7a"></div>
<svg style="left:26px;top:220px" width="9" height="9" viewBox="0 0 9 9"><rect x="0.5" y="0.5" width="8" height="8" fill="#fff" stroke="#6f6f6f"/><path d="M2 4.5H7" stroke="#000"/></svg>
<svg style="left:43px;top:218px" width="11" height="11" viewBox="0 0 11 11"><rect x="0.5" y="0.5" width="10" height="10" fill="#fff" stroke="#6a6a6a"/></svg>
<svg style="left:58px;top:216px" width="16" height="16" viewBox="0 0 16 16"><rect x="0.5" y="1" width="2.5" height="15" fill="#fff" stroke="#888" stroke-width="0.8"/><path d="M1.7 3V4M1.7 6V7M1.7 9V10M1.7 12V13" stroke="#888" stroke-width="0.6"/><path d="M0 1.5H11.5M3 15.5H5.5" stroke="#888" stroke-width="0.9"/><rect x="0" y="0" width="3" height="2" fill="#a070f0"/><path d="M6 8V3.5L8 2.5L10 3.5V8Z" fill="#9a70f0"/><path d="M11 8V0L13 1.5V4L15 5.5V16H11Z" fill="#9060f0"/><path d="M3.5 8L8.6 1.5L13 8" fill="none" stroke="#702020" stroke-width="0.7"/><rect x="3" y="8" width="11.5" height="2.6" fill="#f08010"/><path d="M3 10.6H14.5" stroke="#702818" stroke-width="0.8"/><rect x="6" y="11" width="4" height="5" fill="#2a8ff5"/><rect x="11" y="11" width="4" height="5" fill="#2a8ff5"/><path d="M7 12.5H9M7 14.5H9M12 12.5H14M12 14.5H14" stroke="#e8f4ff" stroke-width="0.8" stroke-dasharray="0.8 0.6"/></svg>
<div class="t11" style="left:79px;top:219px;color:#000;">Подготовка территории строительства</div>
<div style="left:49px;top:240px;width:12px;height:0;border-top:1px dotted #7a7a7a"></div>
<svg style="left:62px;top:234px" width="11" height="11" viewBox="0 0 11 11"><rect x="0.5" y="0.5" width="10" height="10" fill="#fff" stroke="#6a6a6a"/></svg>
<svg style="left:77px;top:232px" width="16" height="16" viewBox="0 0 16 16"><path d="M0 9 L11 13 L16 4.5 L16 7.5 L11 16 L0 12.5 Z" fill="#e2e6ee" stroke="#a8b0c0" stroke-width="0.7"/><path d="M0 8.5 L5 2 L11 2 L16 4.5 L11 13 L0 9.5 Z" fill="#3aa060" stroke="#2a8048" stroke-width="0.5"/><path d="M6.5 4.2 L12.5 6.3" stroke="#f4fff6" stroke-width="1.4"/></svg>
<div class="t11" style="left:98px;top:235px;color:#000;">Подготовительные работы</div>
<div style="left:2px;top:919px;width:355px;height:1px;background:#a0a0a0"></div>
<div style="left:2px;top:920px;width:355px;height:1px;background:#fff"></div>
<div class="t11" style="left:7px;top:927px;color:#000;">Всего элементов в проекте: 4</div>
<div class="t11" style="left:8px;top:945px;color:#000;">Сводный сметный расчёт заполнен.</div>
<svg style="left:8px;top:967px" width="14" height="14" viewBox="0 0 14 14"><rect x="0" y="0" width="14" height="14" rx="1.5" fill="#8e8e8e"/><path d="M7 2.5L11.5 7H9V11.5H5V7H2.5Z" fill="#c8c8c8"/></svg>
<svg style="left:30px;top:967px" width="14" height="14" viewBox="0 0 14 14"><rect x="0" y="0" width="14" height="14" rx="1.5" fill="#8e8e8e"/><path d="M7 11.5L11.5 7H9V2.5H5V7H2.5Z" fill="#c8c8c8"/></svg>
<svg style="left:59px;top:967px" width="14" height="14" viewBox="0 0 14 14"><rect x="0.5" y="0.5" width="13" height="13" rx="1" fill="#1a9a1a" stroke="#0a5a0a"/><text x="2" y="11" font-size="9" font-weight="bold" font-family="Liberation Sans" fill="#fff">№</text></svg>
<div style="left:85px;top:962px;width:229px;height:24px;background:#f0f0f0;border-top:1px solid #fff;border-left:1px solid #fff;border-right:1px solid #6a6a6a;border-bottom:1px solid #6a6a6a;box-sizing:border-box;box-shadow:inset -1px -1px 0 #a0a0a0, inset 1px 1px 0 #e3e3e3"></div>
<div class="t11" style="left:85px;top:969px;width:229px;text-align:center">Перенести сметы в ССР</div>
<div style="left:2px;top:991px;width:355px;height:1px;background:#a0a0a0"></div>
<div style="left:2px;top:992px;width:355px;height:1px;background:#fff"></div>
<div class="t11" style="left:7px;top:998px;color:#000;">Вносить элементы в сводный расчёт до</div>
<div style="left:7px;top:1013px;width:343px;height:21px;background:#fff;border-top:1px solid #a0a0a0;border-left:1px solid #a0a0a0;border-right:1px solid #fff;border-bottom:1px solid #fff;box-sizing:border-box"></div>
<div style="left:333px;top:1015px;width:15px;height:17px;background:#f0f0f0;border-top:1px solid #fff;border-left:1px solid #fff;border-right:1px solid #a0a0a0;border-bottom:1px solid #a0a0a0;box-sizing:border-box"></div>
<svg style="left:336px;top:1021px" width="9" height="5" viewBox="0 0 9 5"><path d="M0 0H9L4.5 5Z" fill="#000"/></svg>
<svg style="left:11px;top:1016px" width="16" height="16" viewBox="0 0 16 16"><path d="M0 9 L11 13 L16 4.5 L16 7.5 L11 16 L0 12.5 Z" fill="#e2e6ee" stroke="#a8b0c0" stroke-width="0.7"/><path d="M0 8.5 L5 2 L11 2 L16 4.5 L11 13 L0 9.5 Z" fill="#28b040" stroke="#2a8048" stroke-width="0.5"/><path d="M6.5 4.2 L12.5 6.3" stroke="#f4fff6" stroke-width="1.4"/></svg>
<div class="t11" style="left:30px;top:1019px;color:#000;">Локальных смет</div>
<div style="left:356px;top:118px;width:1px;height:926px;background:#a0a0a0"></div>
<svg style="left:365px;top:82px" width="16" height="16" viewBox="0 0 16 16"><rect x="1" y="1" width="7" height="2.5" fill="#bcd6f0" stroke="#223"/><path d="M4 3.5V14M4 7H8M4 11H8" stroke="#222"/><rect x="8" y="5.5" width="7" height="2.5" fill="#bcd6f0" stroke="#223"/><rect x="8" y="9.5" width="7" height="2.5" fill="#bcd6f0" stroke="#223"/><rect x="1" y="13" width="7" height="2.5" fill="#bcd6f0" stroke="#223"/></svg>
<div style="left:383px;top:79px;width:23px;height:22px;background-color:#fafafa;background-image:linear-gradient(45deg,#e6e6e6 25%,transparent 25%,transparent 75%,#e6e6e6 75%),linear-gradient(45deg,#e6e6e6 25%,transparent 25%,transparent 75%,#e6e6e6 75%);background-size:2px 2px;background-position:0 0,1px 1px;border-top:1px solid #a0a0a0;border-left:1px solid #a0a0a0;border-right:1px solid #fff;border-bottom:1px solid #fff;box-sizing:border-box"></div>
<svg style="left:386px;top:82px" width="16" height="16" viewBox="0 0 16 16"><path d="M3 8V15H13V8" fill="#fff" stroke="#666"/><path d="M1 9L8 2L15 9" stroke="#c07020" stroke-width="1.3" fill="none"/><rect x="4" y="3" width="2" height="3" fill="#d09030"/><rect x="5" y="10" width="3" height="5" fill="#f0a030"/><rect x="9.5" y="9" width="3" height="3" fill="#3070e0"/></svg>
<svg style="left:415px;top:82px" width="16" height="16" viewBox="0 0 16 16"><path d="M0.5 3.5H6L7 5H15.5V15.5H0.5Z" fill="#f8e060" stroke="#999"/><rect x="10" y="0" width="6" height="6" rx="1" fill="#f07820"/><circle cx="13" cy="3" r="1.3" fill="#fff"/></svg>
<svg style="left:438px;top:82px" width="16" height="16" viewBox="0 0 16 16"><path d="M1.5 3.5H10.5V15.5H1.5Z" fill="#b0d8f8" stroke="#335"/><path d="M3 7.5H9M3 9.5H9M3 11.5H9M3 13.5H9" stroke="#5a7090" stroke-width="0.8"/><path d="M12 0L13 3L16 4L13 5L12 8L11 5L8 4L11 3Z" fill="#f8e000"/></svg>
<svg style="left:461px;top:82px" width="16" height="16" viewBox="0 0 16 16"><path d="M2 2L14 14M14 2L2 14" stroke="#e01010" stroke-width="2"/></svg>
<svg style="left:490px;top:82px" width="16" height="16" viewBox="0 0 16 16"><rect x="0.5" y="0.5" width="12" height="11" fill="#e8f0ff" stroke="#5080c0"/><rect x="4.5" y="4.5" width="11" height="11" fill="#d8f0f0" stroke="#667"/><text x="5.5" y="13.5" font-size="8" font-family="Liberation Sans" fill="#333">%</text></svg>
<svg style="left:513px;top:82px" width="16" height="16" viewBox="0 0 16 16"><path d="M3.5 1.5H10L12.5 4V15.5H3.5Z" fill="#fff" stroke="#999"/><path d="M5 6H11M5 8H11M5 10H11M5 12H11" stroke="#aaa"/><circle cx="13" cy="3" r="2.5" fill="none" stroke="#ccc"/></svg>
<svg style="left:535px;top:82px" width="16" height="16" viewBox="0 0 16 16"><path d="M4.5 1.5H11L13.5 4V15.5H4.5Z" fill="#f0f0f4" stroke="#999"/><rect x="1" y="7" width="8" height="3" fill="#f0c020" stroke="#c09000" stroke-width="0.6"/></svg>
<svg style="left:559px;top:82px" width="16" height="16" viewBox="0 0 16 16"><path d="M0.5 2.5H6L7 4H15.5V15.5H0.5Z" fill="#ececec" stroke="#aaa"/><path d="M0.5 5.5H15.5" stroke="#aaa"/></svg>
<svg style="left:582px;top:82px" width="16" height="16" viewBox="0 0 16 16"><path d="M0.5 2.5H6L7 4H15.5V15.5H0.5Z" fill="#ececec" stroke="#aaa"/><rect x="5.5" y="7.5" width="8" height="6" fill="#fff" stroke="#888"/><text x="7.5" y="13" font-size="6" font-family="Liberation Sans" fill="#333">Σ</text></svg>
<svg style="left:612px;top:82px" width="16" height="16" viewBox="0 0 16 16"><rect x="2.5" y="0.5" width="10" height="15" rx="1" fill="#f5e8b8" stroke="#a06050"/><rect x="4" y="2" width="7" height="3" fill="#207070"/><path d="M4 7.5H11M4 10H11M4 12.5H11M6 6V14M8.5 6V14" stroke="#c8a870" stroke-width="0.8"/></svg>
<svg style="left:640px;top:82px" width="16" height="16" viewBox="0 0 16 16"><path d="M0.5 9.5 L7 7 L16 7 L9 10.5 Z" fill="#e02828"/><path d="M0.5 9.5 L9 10.5 L9 14 L0.5 12.5 Z" fill="#fff" stroke="#e02828" stroke-width="0.9"/><path d="M9 10.5 L16 7 L16 10 L9 14 Z" fill="#d4dbe8" stroke="#e02828" stroke-width="0.7"/><path d="M2.5 5.5 L9 3 L15.5 4 L9 7 Z" fill="#e060b0"/><path d="M2.5 5.5 L9 7 L9 9.5 L2.5 8 Z" fill="#fff" stroke="#e060b0" stroke-width="0.6"/><path d="M9 7 L15.5 4 L15.5 6.5 L9 9.5 Z" fill="#dde2ee"/></svg>
<svg style="left:663px;top:82px" width="16" height="16" viewBox="0 0 16 16"><path d="M0 8L8 3L14 6L6 12Z" fill="#3060e0"/><path d="M0 8L6 12V14L0 10Z" fill="#ddd"/><rect x="8.5" y="8.5" width="7" height="7" fill="#fff" stroke="#333"/><text x="10" y="15" font-size="7" font-family="Liberation Sans" fill="#000">F</text></svg>
<svg style="left:686px;top:82px" width="16" height="16" viewBox="0 0 16 16"><rect x="1.5" y="1.5" width="13" height="13" fill="#e8f4e8" stroke="#3a7a3a"/><path d="M4 4L12 12M12 4L4 12" stroke="#2e8b3a" stroke-width="2.4"/></svg>
<svg style="left:709px;top:82px" width="16" height="16" viewBox="0 0 16 16"><rect x="2" y="1" width="13" height="14" fill="#fff" stroke="#ddd"/><rect x="0" y="2" width="15" height="6" fill="#e01010"/><text x="1.5" y="7" font-size="5" font-family="Liberation Sans" font-weight="bold" fill="#fff">PDF</text><path d="M4 14L8 9M7 14L11 9M10 13Q12 9 15 10" stroke="#e01010" stroke-width="1.5" fill="none"/></svg>
<svg style="left:732px;top:82px" width="16" height="16" viewBox="0 0 16 16"><rect x="2" y="1" width="13" height="7" fill="#1060e0"/><text x="3" y="7" font-size="6" font-family="Liberation Sans" font-weight="bold" fill="#fff">XML</text><circle cx="1.5" cy="4" r="1.5" fill="#20e080"/><rect x="2" y="9" width="13" height="7" fill="#333"/><text x="3.5" y="15" font-size="6" font-family="Liberation Sans" font-weight="bold" fill="#fff">ГЭ</text></svg>
<svg style="left:755px;top:82px" width="16" height="16" viewBox="0 0 16 16"><rect x="2" y="1" width="13" height="7" fill="#1060e0"/><text x="3" y="7" font-size="6" font-family="Liberation Sans" font-weight="bold" fill="#fff">XML</text><circle cx="1.5" cy="4" r="1.5" fill="#20e080"/><rect x="2" y="9" width="13" height="7" fill="#333"/><text x="3.5" y="15" font-size="6" font-family="Liberation Sans" font-weight="bold" fill="#fff">МГЭ</text></svg>
<svg style="left:784px;top:82px" width="16" height="16" viewBox="0 0 16 16"><path d="M1 9L10 2L15 6L6 14Z" fill="#f08040"/><path d="M1 9L6 14V15L1 11Z" fill="#ccc"/><path d="M8 5L11 7" stroke="#fff"/></svg>
<svg style="left:812px;top:82px" width="16" height="16" viewBox="0 0 16 16"><rect x="0.5" y="0.5" width="12" height="11" fill="#f4f4f4" stroke="#888"/><rect x="3.5" y="4.5" width="12" height="11" fill="#fff" stroke="#555"/><rect x="4" y="5" width="11" height="2" fill="#3090e0"/><text x="6" y="14.5" font-size="8" font-family="Liberation Sans" fill="#333">%</text></svg>
<svg style="left:844px;top:82px" width="16" height="16" viewBox="0 0 16 16"><path d="M8 2L13 8H10V14H6V8H3Z" fill="#1050e0"/></svg>
<svg style="left:866px;top:82px" width="16" height="16" viewBox="0 0 16 16"><path d="M8 14L13 8H10V2H6V8H3Z" fill="#1050e0"/></svg>
<div style="left:408px;top:80px;width:1px;height:20px;background:#a0a0a0"></div>
<div style="left:409px;top:80px;width:1px;height:20px;background:#fff"></div>
<div style="left:483px;top:80px;width:1px;height:20px;background:#a0a0a0"></div>
<div style="left:484px;top:80px;width:1px;height:20px;background:#fff"></div>
<div style="left:604px;top:80px;width:1px;height:20px;background:#a0a0a0"></div>
<div style="left:605px;top:80px;width:1px;height:20px;background:#fff"></div>
<div style="left:633px;top:80px;width:1px;height:20px;background:#a0a0a0"></div>
<div style="left:634px;top:80px;width:1px;height:20px;background:#fff"></div>
<div style="left:777px;top:80px;width:1px;height:20px;background:#a0a0a0"></div>
<div style="left:778px;top:80px;width:1px;height:20px;background:#fff"></div>
<div style="left:806px;top:80px;width:1px;height:20px;background:#a0a0a0"></div>
<div style="left:807px;top:80px;width:1px;height:20px;background:#fff"></div>
<div style="left:835px;top:80px;width:1px;height:20px;background:#a0a0a0"></div>
<div style="left:836px;top:80px;width:1px;height:20px;background:#fff"></div>
<div style="left:889px;top:80px;width:1px;height:20px;background:#a0a0a0"></div>
<div style="left:890px;top:80px;width:1px;height:20px;background:#fff"></div>
<div class="t11" style="left:898px;top:86px;color:#000;letter-spacing:-0.3px">Вид ССР ЕРКР (ТСН-2001)</div>
<div style="left:360px;top:101px;width:1393px;height:1px;background:#fff"></div>
<div style="left:360px;top:101px;width:1px;height:888px;background:#fff"></div>
<div style="left:361px;top:102px;width:1392px;height:1px;background:#e3e3e3"></div>
<div style="left:361px;top:102px;width:1px;height:886px;background:#e3e3e3"></div>
<div style="left:364px;top:105px;width:1388px;height:882px;background:#fff"></div>
<div style="left:364px;top:105px;width:1388px;height:1px;background:#808080"></div>
<div style="left:364px;top:105px;width:1px;height:882px;background:#808080"></div>
<div style="left:365px;top:106px;width:1256px;height:15px;background:#f0f0f0"></div>
<div style="left:365px;top:106px;width:11px;height:1px;background:#fff"></div>
<div style="left:365px;top:106px;width:1px;height:15px;background:#fff"></div>
<div style="left:376px;top:105px;width:1px;height:17px;background:#808080"></div>
<div style="left:377px;top:106px;width:34px;height:1px;background:#fff"></div>
<div style="left:377px;top:106px;width:1px;height:15px;background:#fff"></div>
<div style="left:411px;top:105px;width:1px;height:17px;background:#808080"></div>
<div class="t11 clip" style="left:379px;top:109px;width:32px">№ пп</div>
<div style="left:412px;top:106px;width:58px;height:1px;background:#fff"></div>
<div style="left:412px;top:106px;width:1px;height:15px;background:#fff"></div>
<div style="left:470px;top:105px;width:1px;height:17px;background:#808080"></div>
<div class="t11 clip" style="left:414px;top:109px;width:56px">Рассчитыв</div>
<div style="left:471px;top:106px;width:41px;height:1px;background:#fff"></div>
<div style="left:471px;top:106px;width:1px;height:15px;background:#fff"></div>
<div style="left:512px;top:105px;width:1px;height:17px;background:#808080"></div>
<div class="t11 clip" style="left:473px;top:109px;width:39px">Тип</div>
<div style="left:513px;top:106px;width:64px;height:1px;background:#fff"></div>
<div style="left:513px;top:106px;width:1px;height:15px;background:#fff"></div>
<div style="left:577px;top:105px;width:1px;height:17px;background:#808080"></div>
<div class="t11 clip" style="left:515px;top:109px;width:62px">№ см. расч.</div>
<div style="left:578px;top:106px;width:75px;height:1px;background:#fff"></div>
<div style="left:578px;top:106px;width:1px;height:15px;background:#fff"></div>
<div style="left:653px;top:105px;width:1px;height:17px;background:#808080"></div>
<div class="t11 clip" style="left:580px;top:109px;width:73px">Сокр. наимен.</div>
<div style="left:654px;top:106px;width:316px;height:1px;background:#fff"></div>
<div style="left:654px;top:106px;width:1px;height:15px;background:#fff"></div>
<div style="left:970px;top:105px;width:1px;height:17px;background:#808080"></div>
<div class="t11 clip" style="left:656px;top:109px;width:314px">Наименование глав, объектов, работ и затрат</div>
<div style="left:971px;top:106px;width:40px;height:1px;background:#fff"></div>
<div style="left:971px;top:106px;width:1px;height:15px;background:#fff"></div>
<div style="left:1011px;top:105px;width:1px;height:17px;background:#808080"></div>
<div class="t11 clip" style="left:973px;top:109px;width:38px">№ Гл.</div>
<div style="left:1012px;top:106px;width:80px;height:1px;background:#fff"></div>
<div style="left:1012px;top:106px;width:1px;height:15px;background:#fff"></div>
<div style="left:1092px;top:105px;width:1px;height:17px;background:#808080"></div>
<div class="t11 clip" style="left:1014px;top:109px;width:78px">Строительные</div>
<div style="left:1093px;top:106px;width:80px;height:1px;background:#fff"></div>
<div style="left:1093px;top:106px;width:1px;height:15px;background:#fff"></div>
<div style="left:1173px;top:105px;width:1px;height:17px;background:#808080"></div>
<div class="t11 clip" style="left:1095px;top:109px;width:78px">Монтажные</div>
<div style="left:1174px;top:106px;width:80px;height:1px;background:#fff"></div>
<div style="left:1174px;top:106px;width:1px;height:15px;background:#fff"></div>
<div style="left:1254px;top:105px;width:1px;height:17px;background:#808080"></div>
<div class="t11 clip" style="left:1176px;top:109px;width:78px">Оборудование</div>
<div style="left:1255px;top:106px;width:74px;height:1px;background:#fff"></div>
<div style="left:1255px;top:106px;width:1px;height:15px;background:#fff"></div>
<div style="left:1329px;top:105px;width:1px;height:17px;background:#808080"></div>
<div class="t11 clip" style="left:1257px;top:109px;width:72px">Прочие</div>
<div style="left:1330px;top:106px;width:100px;height:1px;background:#fff"></div>
<div style="left:1330px;top:106px;width:1px;height:15px;background:#fff"></div>
<div style="left:1430px;top:105px;width:1px;height:17px;background:#808080"></div>
<div class="t11 clip" style="left:1332px;top:109px;width:98px">Общ. стоимость</div>
<div style="left:1431px;top:106px;width:74px;height:1px;background:#fff"></div>
<div style="left:1431px;top:106px;width:1px;height:15px;background:#fff"></div>
<div style="left:1505px;top:105px;width:1px;height:17px;background:#808080"></div>
<div class="t11 clip" style="left:1433px;top:109px;width:72px">Возврат</div>
<div style="left:1506px;top:106px;width:50px;height:1px;background:#fff"></div>
<div style="left:1506px;top:106px;width:1px;height:15px;background:#fff"></div>
<div style="left:1556px;top:105px;width:1px;height:17px;background:#808080"></div>
<div class="t11 clip" style="left:1508px;top:109px;width:48px">Печать</div>
<div style="left:1557px;top:106px;width:64px;height:1px;background:#fff"></div>
<div style="left:1557px;top:106px;width:1px;height:15px;background:#fff"></div>
<div style="left:1621px;top:105px;width:1px;height:17px;background:#808080"></div>
<div class="t11 clip" style="left:1559px;top:109px;width:62px">ПР/НПР</div>
<div style="left:364px;top:121px;width:1258px;height:1px;background:#808080"></div>
<div style="left:377px;top:122px;width:1244px;height:15px;background:#e3ffff"></div>
<div style="left:365px;top:122px;width:11px;height:15px;background:#f0f0f0"></div>
<div style="left:365px;top:122px;width:11px;height:1px;background:#fff"></div>
<div style="left:365px;top:122px;width:1px;height:15px;background:#fff"></div>
<div style="left:364px;top:137px;width:13px;height:1px;background:#808080"></div>
<div class="t11 r" style="left:377px;top:125px;width:31px;color:#000">2</div>
<svg style="left:436px;top:124px" width="10" height="10" viewBox="0 0 10 10"><rect x="0.5" y="0.5" width="9" height="9" fill="#fff" stroke="#7a7a7a"/><path d="M2.5 5 L4.3 7.5 L7.6 2.5" fill="none" stroke="#3a55a8" stroke-width="1.4"/></svg>
<svg style="left:483px;top:122px" width="16" height="16" viewBox="0 0 16 16"><path d="M0 9 L11 13 L16 4.5 L16 7.5 L11 16 L0 12.5 Z" fill="#e2e6ee" stroke="#a8b0c0" stroke-width="0.7"/><path d="M0 8.5 L5 2 L11 2 L16 4.5 L11 13 L0 9.5 Z" fill="#3aa060" stroke="#2a8048" stroke-width="0.5"/><path d="M6.5 4.2 L12.5 6.3" stroke="#f4fff6" stroke-width="1.4"/></svg>
<div class="t11 clip" style="left:515px;top:125px;width:62px;color:#000">ЛС 01-01</div>
<div class="t11 clip" style="left:656px;top:125px;width:314px;color:#000">Подготовительные работы</div>
<div class="t11 r" style="left:1012px;top:125px;width:78px;color:#000">471,33</div>
<div class="t11 r" style="left:1093px;top:125px;width:78px;color:#000">0,00</div>
<div class="t11 r" style="left:1174px;top:125px;width:78px;color:#000">0,00</div>
<div class="t11 r" style="left:1255px;top:125px;width:72px;color:#000">0,00</div>
<div class="t11 r" style="left:1330px;top:125px;width:98px;color:#000">471,33</div>
<div class="t11 r" style="left:1431px;top:125px;width:72px;color:#000">0,00</div>
<svg style="left:1527px;top:124px" width="8" height="12" viewBox="0 0 8 12"><path d="M0.8 7.2L2 6.6L3.6 10.5L6.6 0.3" fill="none" stroke="#102060" stroke-width="0.95"/></svg>
<div class="t11" style="left:1559px;top:125px;color:#000">НПР</div>
<div style="left:377px;top:137px;width:1245px;height:1px;background:#c8c8c8"></div>
<div style="left:377px;top:138px;width:1244px;height:15px;background:#fff"></div>
<div style="left:365px;top:138px;width:11px;height:15px;background:#f0f0f0"></div>
<div style="left:365px;top:138px;width:11px;height:1px;background:#fff"></div>
<div style="left:365px;top:138px;width:1px;height:15px;background:#fff"></div>
<div style="left:364px;top:153px;width:13px;height:1px;background:#808080"></div>
<div class="t11 r" style="left:377px;top:141px;width:31px;color:#000">3</div>
<svg style="left:436px;top:140px" width="10" height="10" viewBox="0 0 10 10"><rect x="0.5" y="0.5" width="9" height="9" fill="#fff" stroke="#7a7a7a"/><path d="M2.5 5 L4.3 7.5 L7.6 2.5" fill="none" stroke="#3a55a8" stroke-width="1.4"/></svg>
<svg style="left:484px;top:138px" width="13" height="16" viewBox="0 0 13 16"><defs><linearGradient id="gd" x1="0" y1="0" x2="0.3" y2="1"><stop offset="0" stop-color="#10a8ff"/><stop offset="0.5" stop-color="#60ccff"/><stop offset="1" stop-color="#c8f4ff"/></linearGradient></defs><path d="M3.5 0.5 H11.5 V14.5 H0.5 V3.5 Z" fill="url(#gd)" stroke="#444"/><path d="M0.8 3.5 L3.5 0.8 L3.5 3.5 Z" fill="#c8faff" stroke="#333" stroke-width="0.8"/><path d="M2 5.5H8.8M2 7.5H8.8M2 9.5H8.8M2 11.5H8.8" stroke="#6a6a78" stroke-width="0.9"/></svg>
<div class="t11" style="left:580px;top:141px;color:#000">1</div>
<div class="t11 clip" style="left:656px;top:141px;width:314px;color:#000">Глава  1. Подготовка территории строительства.</div>
<div class="t11 r" style="left:1012px;top:141px;width:78px;color:#000">0,00</div>
<div class="t11 r" style="left:1093px;top:141px;width:78px;color:#000">0,00</div>
<div class="t11 r" style="left:1174px;top:141px;width:78px;color:#000">0,00</div>
<div class="t11 r" style="left:1255px;top:141px;width:72px;color:#000">0,00</div>
<div class="t11 r" style="left:1330px;top:141px;width:98px;color:#000">0,00</div>
<div class="t11 r" style="left:1431px;top:141px;width:72px;color:#000">0,00</div>
<div style="left:377px;top:153px;width:1245px;height:1px;background:#c8c8c8"></div>
<div style="left:377px;top:154px;width:1244px;height:15px;background:#e0e0ff"></div>
<div style="left:365px;top:154px;width:11px;height:15px;background:#f0f0f0"></div>
<div style="left:365px;top:154px;width:11px;height:1px;background:#fff"></div>
<div style="left:365px;top:154px;width:1px;height:15px;background:#fff"></div>
<div style="left:364px;top:169px;width:13px;height:1px;background:#808080"></div>
<div class="t11 r" style="left:377px;top:157px;width:31px;color:#0000ff">4</div>
<svg style="left:483px;top:153px" width="16" height="16" viewBox="0 0 16 16"><defs><linearGradient id="gf" x1="0" y1="1" x2="1" y2="0"><stop offset="0" stop-color="#ffff20"/><stop offset="0.45" stop-color="#ffd800"/><stop offset="1" stop-color="#ff8000"/></linearGradient></defs><path d="M0.5 3.5V1.5H7L8 3.5" fill="#ffc820" stroke="#8a8aa0"/><rect x="0.5" y="3.5" width="15" height="11" fill="url(#gf)" stroke="#8a8aa0"/></svg>
<div class="t11" style="left:580px;top:157px;color:#0000ff">1.1</div>
<div class="t11 clip" style="left:656px;top:157px;width:314px;color:#0000ff">Получение исходных данных и условий для подготовки проектной документации</div>
<div class="t11 r" style="left:1012px;top:157px;width:78px;color:#0000ff">0,00</div>
<div class="t11 r" style="left:1093px;top:157px;width:78px;color:#0000ff">0,00</div>
<div class="t11 r" style="left:1174px;top:157px;width:78px;color:#0000ff">0,00</div>
<div class="t11 r" style="left:1255px;top:157px;width:72px;color:#0000ff">0,00</div>
<div class="t11 r" style="left:1330px;top:157px;width:98px;color:#0000ff">0,00</div>
<div class="t11 r" style="left:1431px;top:157px;width:72px;color:#0000ff">0,00</div>
<div style="left:377px;top:169px;width:1245px;height:1px;background:#c8c8c8"></div>
<div style="left:377px;top:170px;width:1244px;height:15px;background:#fff"></div>
<div style="left:365px;top:170px;width:11px;height:15px;background:#f0f0f0"></div>
<div style="left:365px;top:170px;width:11px;height:1px;background:#fff"></div>
<div style="left:365px;top:170px;width:1px;height:15px;background:#fff"></div>
<div style="left:364px;top:185px;width:13px;height:1px;background:#808080"></div>
<div class="t11 r" style="left:377px;top:173px;width:31px;color:#000">5</div>
<svg style="left:436px;top:172px" width="10" height="10" viewBox="0 0 10 10"><rect x="0.5" y="0.5" width="9" height="9" fill="#fff" stroke="#7a7a7a"/><path d="M2.5 5 L4.3 7.5 L7.6 2.5" fill="none" stroke="#3a55a8" stroke-width="1.4"/></svg>
<svg style="left:484px;top:170px" width="13" height="16" viewBox="0 0 13 16"><defs><linearGradient id="gd" x1="0" y1="0" x2="0.3" y2="1"><stop offset="0" stop-color="#10a8ff"/><stop offset="0.5" stop-color="#60ccff"/><stop offset="1" stop-color="#c8f4ff"/></linearGradient></defs><path d="M3.5 0.5 H11.5 V14.5 H0.5 V3.5 Z" fill="url(#gd)" stroke="#444"/><path d="M0.8 3.5 L3.5 0.8 L3.5 3.5 Z" fill="#c8faff" stroke="#333" stroke-width="0.8"/><path d="M2 5.5H8.8M2 7.5H8.8M2 9.5H8.8M2 11.5H8.8" stroke="#6a6a78" stroke-width="0.9"/></svg>
<div class="t11" style="left:580px;top:173px;color:#000">1.1.1</div>
<div class="t11 clip" style="left:656px;top:173px;width:314px;color:#000">Затраты, связанные с получением (разработкой) исходных данных</div>
<div class="t11 r" style="left:1012px;top:173px;width:78px;color:#000">0,00</div>
<div class="t11 r" style="left:1093px;top:173px;width:78px;color:#000">0,00</div>
<div class="t11 r" style="left:1174px;top:173px;width:78px;color:#000">0,00</div>
<div class="t11 r" style="left:1255px;top:173px;width:72px;color:#000">0,00</div>
<div class="t11 r" style="left:1330px;top:173px;width:98px;color:#000">0,00</div>
<div class="t11 r" style="left:1431px;top:173px;width:72px;color:#000">0,00</div>
<svg style="left:1527px;top:172px" width="8" height="12" viewBox="0 0 8 12"><path d="M0.8 7.2L2 6.6L3.6 10.5L6.6 0.3" fill="none" stroke="#ff0030" stroke-width="0.95"/></svg>
<div style="left:377px;top:185px;width:1245px;height:1px;background:#c8c8c8"></div>
<div style="left:377px;top:186px;width:1244px;height:15px;background:#fff"></div>
<div style="left:365px;top:186px;width:11px;height:15px;background:#f0f0f0"></div>
<div style="left:365px;top:186px;width:11px;height:1px;background:#fff"></div>
<div style="left:365px;top:186px;width:1px;height:15px;background:#fff"></div>
<div style="left:364px;top:201px;width:13px;height:1px;background:#808080"></div>
<div class="t11 r" style="left:377px;top:189px;width:31px;color:#000">6</div>
<svg style="left:436px;top:188px" width="10" height="10" viewBox="0 0 10 10"><rect x="0.5" y="0.5" width="9" height="9" fill="#fff" stroke="#7a7a7a"/><path d="M2.5 5 L4.3 7.5 L7.6 2.5" fill="none" stroke="#3a55a8" stroke-width="1.4"/></svg>
<svg style="left:484px;top:186px" width="13" height="16" viewBox="0 0 13 16"><defs><linearGradient id="gd" x1="0" y1="0" x2="0.3" y2="1"><stop offset="0" stop-color="#10a8ff"/><stop offset="0.5" stop-color="#60ccff"/><stop offset="1" stop-color="#c8f4ff"/></linearGradient></defs><path d="M3.5 0.5 H11.5 V14.5 H0.5 V3.5 Z" fill="url(#gd)" stroke="#444"/><path d="M0.8 3.5 L3.5 0.8 L3.5 3.5 Z" fill="#c8faff" stroke="#333" stroke-width="0.8"/><path d="M2 5.5H8.8M2 7.5H8.8M2 9.5H8.8M2 11.5H8.8" stroke="#6a6a78" stroke-width="0.9"/></svg>
<div class="t11" style="left:580px;top:189px;color:#000">1.1.2</div>
<div class="t11 clip" style="left:656px;top:189px;width:314px;color:#000">Затраты, связанные с проведением геодезических работ, выноса</div>
<div class="t11 r" style="left:1012px;top:189px;width:78px;color:#000">0,00</div>
<div class="t11 r" style="left:1093px;top:189px;width:78px;color:#000">0,00</div>
<div class="t11 r" style="left:1174px;top:189px;width:78px;color:#000">0,00</div>
<div class="t11 r" style="left:1255px;top:189px;width:72px;color:#000">0,00</div>
<div class="t11 r" style="left:1330px;top:189px;width:98px;color:#000">0,00</div>
<div class="t11 r" style="left:1431px;top:189px;width:72px;color:#000">0,00</div>
<svg style="left:1527px;top:188px" width="8" height="12" viewBox="0 0 8 12"><path d="M0.8 7.2L2 6.6L3.6 10.5L6.6 0.3" fill="none" stroke="#ff0030" stroke-width="0.95"/></svg>
<div style="left:377px;top:201px;width:1245px;height:1px;background:#c8c8c8"></div>
<div style="left:377px;top:202px;width:1244px;height:15px;background:#fff"></div>
<div style="left:365px;top:202px;width:11px;height:15px;background:#f0f0f0"></div>
<div style="left:365px;top:202px;width:11px;height:1px;background:#fff"></div>
<div style="left:365px;top:202px;width:1px;height:15px;background:#fff"></div>
<div style="left:364px;top:217px;width:13px;height:1px;background:#808080"></div>
<div class="t11 r" style="left:377px;top:205px;width:31px;color:#000">7</div>
<svg style="left:436px;top:204px" width="10" height="10" viewBox="0 0 10 10"><rect x="0.5" y="0.5" width="9" height="9" fill="#fff" stroke="#7a7a7a"/><path d="M2.5 5 L4.3 7.5 L7.6 2.5" fill="none" stroke="#3a55a8" stroke-width="1.4"/></svg>
<svg style="left:484px;top:202px" width="13" height="16" viewBox="0 0 13 16"><defs><linearGradient id="gd" x1="0" y1="0" x2="0.3" y2="1"><stop offset="0" stop-color="#10a8ff"/><stop offset="0.5" stop-color="#60ccff"/><stop offset="1" stop-color="#c8f4ff"/></linearGradient></defs><path d="M3.5 0.5 H11.5 V14.5 H0.5 V3.5 Z" fill="url(#gd)" stroke="#444"/><path d="M0.8 3.5 L3.5 0.8 L3.5 3.5 Z" fill="#c8faff" stroke="#333" stroke-width="0.8"/><path d="M2 5.5H8.8M2 7.5H8.8M2 9.5H8.8M2 11.5H8.8" stroke="#6a6a78" stroke-width="0.9"/></svg>
<div class="t11" style="left:580px;top:205px;color:#000">1.1.3</div>
<div class="t11 clip" style="left:656px;top:205px;width:314px;color:#000">Затраты, связанные с оформлением прав владения и пользования</div>
<div class="t11 r" style="left:1012px;top:205px;width:78px;color:#000">0,00</div>
<div class="t11 r" style="left:1093px;top:205px;width:78px;color:#000">0,00</div>
<div class="t11 r" style="left:1174px;top:205px;width:78px;color:#000">0,00</div>
<div class="t11 r" style="left:1255px;top:205px;width:72px;color:#000">0,00</div>
<div class="t11 r" style="left:1330px;top:205px;width:98px;color:#000">0,00</div>
<div class="t11 r" style="left:1431px;top:205px;width:72px;color:#000">0,00</div>
<svg style="left:1527px;top:204px" width="8" height="12" viewBox="0 0 8 12"><path d="M0.8 7.2L2 6.6L3.6 10.5L6.6 0.3" fill="none" stroke="#ff0030" stroke-width="0.95"/></svg>
<div style="left:377px;top:217px;width:1245px;height:1px;background:#c8c8c8"></div>
<div style="left:377px;top:218px;width:1244px;height:15px;background:#fff"></div>
<div style="left:365px;top:218px;width:11px;height:15px;background:#f0f0f0"></div>
<div style="left:365px;top:218px;width:11px;height:1px;background:#fff"></div>
<div style="left:365px;top:218px;width:1px;height:15px;background:#fff"></div>
<div style="left:364px;top:233px;width:13px;height:1px;background:#808080"></div>
<div class="t11 r" style="left:377px;top:221px;width:31px;color:#000">8</div>
<svg style="left:436px;top:220px" width="10" height="10" viewBox="0 0 10 10"><rect x="0.5" y="0.5" width="9" height="9" fill="#fff" stroke="#7a7a7a"/><path d="M2.5 5 L4.3 7.5 L7.6 2.5" fill="none" stroke="#3a55a8" stroke-width="1.4"/></svg>
<svg style="left:484px;top:218px" width="13" height="16" viewBox="0 0 13 16"><defs><linearGradient id="gd" x1="0" y1="0" x2="0.3" y2="1"><stop offset="0" stop-color="#10a8ff"/><stop offset="0.5" stop-color="#60ccff"/><stop offset="1" stop-color="#c8f4ff"/></linearGradient></defs><path d="M3.5 0.5 H11.5 V14.5 H0.5 V3.5 Z" fill="url(#gd)" stroke="#444"/><path d="M0.8 3.5 L3.5 0.8 L3.5 3.5 Z" fill="#c8faff" stroke="#333" stroke-width="0.8"/><path d="M2 5.5H8.8M2 7.5H8.8M2 9.5H8.8M2 11.5H8.8" stroke="#6a6a78" stroke-width="0.9"/></svg>
<div class="t11" style="left:580px;top:221px;color:#000">1.1.4</div>
<div class="t11 clip" style="left:656px;top:221px;width:314px;color:#000">Затраты, связанные с подготовкой документации по планировке</div>
<div class="t11 r" style="left:1012px;top:221px;width:78px;color:#000">0,00</div>
<div class="t11 r" style="left:1093px;top:221px;width:78px;color:#000">0,00</div>
<div class="t11 r" style="left:1174px;top:221px;width:78px;color:#000">0,00</div>
<div class="t11 r" style="left:1255px;top:221px;width:72px;color:#000">0,00</div>
<div class="t11 r" style="left:1330px;top:221px;width:98px;color:#000">0,00</div>
<div class="t11 r" style="left:1431px;top:221px;width:72px;color:#000">0,00</div>
<svg style="left:1527px;top:220px" width="8" height="12" viewBox="0 0 8 12"><path d="M0.8 7.2L2 6.6L3.6 10.5L6.6 0.3" fill="none" stroke="#ff0030" stroke-width="0.95"/></svg>
<div style="left:377px;top:233px;width:1245px;height:1px;background:#c8c8c8"></div>
<div style="left:377px;top:234px;width:1244px;height:15px;background:#e0e0ff"></div>
<div style="left:365px;top:234px;width:11px;height:15px;background:#f0f0f0"></div>
<div style="left:365px;top:234px;width:11px;height:1px;background:#fff"></div>
<div style="left:365px;top:234px;width:1px;height:15px;background:#fff"></div>
<div style="left:364px;top:249px;width:13px;height:1px;background:#808080"></div>
<div class="t11 r" style="left:377px;top:237px;width:31px;color:#0000ff">9</div>
<svg style="left:483px;top:233px" width="16" height="16" viewBox="0 0 16 16"><defs><linearGradient id="gf" x1="0" y1="1" x2="1" y2="0"><stop offset="0" stop-color="#ffff20"/><stop offset="0.45" stop-color="#ffd800"/><stop offset="1" stop-color="#ff8000"/></linearGradient></defs><path d="M0.5 3.5V1.5H7L8 3.5" fill="#ffc820" stroke="#8a8aa0"/><rect x="0.5" y="3.5" width="15" height="11" fill="url(#gf)" stroke="#8a8aa0"/></svg>
<div class="t11" style="left:580px;top:237px;color:#0000ff">1.2</div>
<div class="t11 clip" style="left:656px;top:237px;width:314px;color:#0000ff">Затраты по освоению территории строительства</div>
<div class="t11 r" style="left:1012px;top:237px;width:78px;color:#0000ff">0,00</div>
<div class="t11 r" style="left:1093px;top:237px;width:78px;color:#0000ff">0,00</div>
<div class="t11 r" style="left:1174px;top:237px;width:78px;color:#0000ff">0,00</div>
<div class="t11 r" style="left:1255px;top:237px;width:72px;color:#0000ff">0,00</div>
<div class="t11 r" style="left:1330px;top:237px;width:98px;color:#0000ff">0,00</div>
<div class="t11 r" style="left:1431px;top:237px;width:72px;color:#0000ff">0,00</div>
<div style="left:377px;top:249px;width:1245px;height:1px;background:#c8c8c8"></div>
<div style="left:377px;top:250px;width:1244px;height:15px;background:#fff"></div>
<div style="left:365px;top:250px;width:11px;height:15px;background:#f0f0f0"></div>
<div style="left:365px;top:250px;width:11px;height:1px;background:#fff"></div>
<div style="left:365px;top:250px;width:1px;height:15px;background:#fff"></div>
<div style="left:364px;top:265px;width:13px;height:1px;background:#808080"></div>
<div class="t11 r" style="left:377px;top:253px;width:31px;color:#000">10</div>
<svg style="left:436px;top:252px" width="10" height="10" viewBox="0 0 10 10"><rect x="0.5" y="0.5" width="9" height="9" fill="#fff" stroke="#7a7a7a"/><path d="M2.5 5 L4.3 7.5 L7.6 2.5" fill="none" stroke="#3a55a8" stroke-width="1.4"/></svg>
<svg style="left:484px;top:250px" width="13" height="16" viewBox="0 0 13 16"><defs><linearGradient id="gd" x1="0" y1="0" x2="0.3" y2="1"><stop offset="0" stop-color="#10a8ff"/><stop offset="0.5" stop-color="#60ccff"/><stop offset="1" stop-color="#c8f4ff"/></linearGradient></defs><path d="M3.5 0.5 H11.5 V14.5 H0.5 V3.5 Z" fill="url(#gd)" stroke="#444"/><path d="M0.8 3.5 L3.5 0.8 L3.5 3.5 Z" fill="#c8faff" stroke="#333" stroke-width="0.8"/><path d="M2 5.5H8.8M2 7.5H8.8M2 9.5H8.8M2 11.5H8.8" stroke="#6a6a78" stroke-width="0.9"/></svg>
<div class="t11" style="left:580px;top:253px;color:#000">1.2.1</div>
<div class="t11 clip" style="left:656px;top:253px;width:314px;color:#000">Затраты, связанные с возмещением убытков (компенсацией) правообладателям</div>
<div class="t11 r" style="left:1012px;top:253px;width:78px;color:#000">0,00</div>
<div class="t11 r" style="left:1093px;top:253px;width:78px;color:#000">0,00</div>
<div class="t11 r" style="left:1174px;top:253px;width:78px;color:#000">0,00</div>
<div class="t11 r" style="left:1255px;top:253px;width:72px;color:#000">0,00</div>
<div class="t11 r" style="left:1330px;top:253px;width:98px;color:#000">0,00</div>
<div class="t11 r" style="left:1431px;top:253px;width:72px;color:#000">0,00</div>
<svg style="left:1527px;top:252px" width="8" height="12" viewBox="0 0 8 12"><path d="M0.8 7.2L2 6.6L3.6 10.5L6.6 0.3" fill="none" stroke="#ff0030" stroke-width="0.95"/></svg>
<div style="left:377px;top:265px;width:1245px;height:1px;background:#c8c8c8"></div>
<div style="left:377px;top:266px;width:1244px;height:15px;background:#fff"></div>
<div style="left:365px;top:266px;width:11px;height:15px;background:#f0f0f0"></div>
<div style="left:365px;top:266px;width:11px;height:1px;background:#fff"></div>
<div style="left:365px;top:266px;width:1px;height:15px;background:#fff"></div>
<div style="left:364px;top:281px;width:13px;height:1px;background:#808080"></div>
<div class="t11 r" style="left:377px;top:269px;width:31px;color:#000">11</div>
<svg style="left:436px;top:268px" width="10" height="10" viewBox="0 0 10 10"><rect x="0.5" y="0.5" width="9" height="9" fill="#fff" stroke="#7a7a7a"/><path d="M2.5 5 L4.3 7.5 L7.6 2.5" fill="none" stroke="#3a55a8" stroke-width="1.4"/></svg>
<svg style="left:484px;top:266px" width="13" height="16" viewBox="0 0 13 16"><defs><linearGradient id="gd" x1="0" y1="0" x2="0.3" y2="1"><stop offset="0" stop-color="#10a8ff"/><stop offset="0.5" stop-color="#60ccff"/><stop offset="1" stop-color="#c8f4ff"/></linearGradient></defs><path d="M3.5 0.5 H11.5 V14.5 H0.5 V3.5 Z" fill="url(#gd)" stroke="#444"/><path d="M0.8 3.5 L3.5 0.8 L3.5 3.5 Z" fill="#c8faff" stroke="#333" stroke-width="0.8"/><path d="M2 5.5H8.8M2 7.5H8.8M2 9.5H8.8M2 11.5H8.8" stroke="#6a6a78" stroke-width="0.9"/></svg>
<div class="t11" style="left:580px;top:269px;color:#000">1.2.2</div>
<div class="t11 clip" style="left:656px;top:269px;width:314px;color:#000">Затраты по разминированию территории строительства в процессе</div>
<div class="t11 r" style="left:1012px;top:269px;width:78px;color:#000">0,00</div>
<div class="t11 r" style="left:1093px;top:269px;width:78px;color:#000">0,00</div>
<div class="t11 r" style="left:1174px;top:269px;width:78px;color:#000">0,00</div>
<div class="t11 r" style="left:1255px;top:269px;width:72px;color:#000">0,00</div>
<div class="t11 r" style="left:1330px;top:269px;width:98px;color:#000">0,00</div>
<div class="t11 r" style="left:1431px;top:269px;width:72px;color:#000">0,00</div>
<svg style="left:1527px;top:268px" width="8" height="12" viewBox="0 0 8 12"><path d="M0.8 7.2L2 6.6L3.6 10.5L6.6 0.3" fill="none" stroke="#ff0030" stroke-width="0.95"/></svg>
<div style="left:377px;top:281px;width:1245px;height:1px;background:#c8c8c8"></div>
<div style="left:377px;top:282px;width:1244px;height:15px;background:#fff"></div>
<div style="left:365px;top:282px;width:11px;height:15px;background:#f0f0f0"></div>
<div style="left:365px;top:282px;width:11px;height:1px;background:#fff"></div>
<div style="left:365px;top:282px;width:1px;height:15px;background:#fff"></div>
<div style="left:364px;top:297px;width:13px;height:1px;background:#808080"></div>
<div class="t11 r" style="left:377px;top:285px;width:31px;color:#000">12</div>
<svg style="left:436px;top:284px" width="10" height="10" viewBox="0 0 10 10"><rect x="0.5" y="0.5" width="9" height="9" fill="#fff" stroke="#7a7a7a"/><path d="M2.5 5 L4.3 7.5 L7.6 2.5" fill="none" stroke="#3a55a8" stroke-width="1.4"/></svg>
<svg style="left:484px;top:282px" width="13" height="16" viewBox="0 0 13 16"><defs><linearGradient id="gd" x1="0" y1="0" x2="0.3" y2="1"><stop offset="0" stop-color="#10a8ff"/><stop offset="0.5" stop-color="#60ccff"/><stop offset="1" stop-color="#c8f4ff"/></linearGradient></defs><path d="M3.5 0.5 H11.5 V14.5 H0.5 V3.5 Z" fill="url(#gd)" stroke="#444"/><path d="M0.8 3.5 L3.5 0.8 L3.5 3.5 Z" fill="#c8faff" stroke="#333" stroke-width="0.8"/><path d="M2 5.5H8.8M2 7.5H8.8M2 9.5H8.8M2 11.5H8.8" stroke="#6a6a78" stroke-width="0.9"/></svg>
<div class="t11" style="left:580px;top:285px;color:#000">1.2.3</div>
<div class="t11 clip" style="left:656px;top:285px;width:314px;color:#000">Затраты, связанные с организацией мероприятий в случае обнаружения</div>
<div class="t11 r" style="left:1012px;top:285px;width:78px;color:#000">0,00</div>
<div class="t11 r" style="left:1093px;top:285px;width:78px;color:#000">0,00</div>
<div class="t11 r" style="left:1174px;top:285px;width:78px;color:#000">0,00</div>
<div class="t11 r" style="left:1255px;top:285px;width:72px;color:#000">0,00</div>
<div class="t11 r" style="left:1330px;top:285px;width:98px;color:#000">0,00</div>
<div class="t11 r" style="left:1431px;top:285px;width:72px;color:#000">0,00</div>
<svg style="left:1527px;top:284px" width="8" height="12" viewBox="0 0 8 12"><path d="M0.8 7.2L2 6.6L3.6 10.5L6.6 0.3" fill="none" stroke="#ff0030" stroke-width="0.95"/></svg>
<div style="left:377px;top:297px;width:1245px;height:1px;background:#c8c8c8"></div>
<div style="left:377px;top:298px;width:1244px;height:15px;background:#fff"></div>
<div style="left:365px;top:298px;width:11px;height:15px;background:#f0f0f0"></div>
<div style="left:365px;top:298px;width:11px;height:1px;background:#fff"></div>
<div style="left:365px;top:298px;width:1px;height:15px;background:#fff"></div>
<div style="left:364px;top:313px;width:13px;height:1px;background:#808080"></div>
<div class="t11 r" style="left:377px;top:301px;width:31px;color:#000">13</div>
<svg style="left:436px;top:300px" width="10" height="10" viewBox="0 0 10 10"><rect x="0.5" y="0.5" width="9" height="9" fill="#fff" stroke="#7a7a7a"/><path d="M2.5 5 L4.3 7.5 L7.6 2.5" fill="none" stroke="#3a55a8" stroke-width="1.4"/></svg>
<svg style="left:484px;top:298px" width="13" height="16" viewBox="0 0 13 16"><defs><linearGradient id="gd" x1="0" y1="0" x2="0.3" y2="1"><stop offset="0" stop-color="#10a8ff"/><stop offset="0.5" stop-color="#60ccff"/><stop offset="1" stop-color="#c8f4ff"/></linearGradient></defs><path d="M3.5 0.5 H11.5 V14.5 H0.5 V3.5 Z" fill="url(#gd)" stroke="#444"/><path d="M0.8 3.5 L3.5 0.8 L3.5 3.5 Z" fill="#c8faff" stroke="#333" stroke-width="0.8"/><path d="M2 5.5H8.8M2 7.5H8.8M2 9.5H8.8M2 11.5H8.8" stroke="#6a6a78" stroke-width="0.9"/></svg>
<div class="t11" style="left:580px;top:301px;color:#000">1.2.4</div>
<div class="t11 clip" style="left:656px;top:301px;width:314px;color:#000">Затраты на проведение на территории строительства природоохранных</div>
<div class="t11 r" style="left:1012px;top:301px;width:78px;color:#000">0,00</div>
<div class="t11 r" style="left:1093px;top:301px;width:78px;color:#000">0,00</div>
<div class="t11 r" style="left:1174px;top:301px;width:78px;color:#000">0,00</div>
<div class="t11 r" style="left:1255px;top:301px;width:72px;color:#000">0,00</div>
<div class="t11 r" style="left:1330px;top:301px;width:98px;color:#000">0,00</div>
<div class="t11 r" style="left:1431px;top:301px;width:72px;color:#000">0,00</div>
<svg style="left:1527px;top:300px" width="8" height="12" viewBox="0 0 8 12"><path d="M0.8 7.2L2 6.6L3.6 10.5L6.6 0.3" fill="none" stroke="#ff0030" stroke-width="0.95"/></svg>
<div style="left:377px;top:313px;width:1245px;height:1px;background:#c8c8c8"></div>
<div style="left:377px;top:314px;width:1244px;height:15px;background:#fff"></div>
<div style="left:365px;top:314px;width:11px;height:15px;background:#f0f0f0"></div>
<div style="left:365px;top:314px;width:11px;height:1px;background:#fff"></div>
<div style="left:365px;top:314px;width:1px;height:15px;background:#fff"></div>
<div style="left:364px;top:329px;width:13px;height:1px;background:#808080"></div>
<div class="t11 r" style="left:377px;top:317px;width:31px;color:#000">14</div>
<svg style="left:436px;top:316px" width="10" height="10" viewBox="0 0 10 10"><rect x="0.5" y="0.5" width="9" height="9" fill="#fff" stroke="#7a7a7a"/><path d="M2.5 5 L4.3 7.5 L7.6 2.5" fill="none" stroke="#3a55a8" stroke-width="1.4"/></svg>
<svg style="left:484px;top:314px" width="13" height="16" viewBox="0 0 13 16"><defs><linearGradient id="gd" x1="0" y1="0" x2="0.3" y2="1"><stop offset="0" stop-color="#10a8ff"/><stop offset="0.5" stop-color="#60ccff"/><stop offset="1" stop-color="#c8f4ff"/></linearGradient></defs><path d="M3.5 0.5 H11.5 V14.5 H0.5 V3.5 Z" fill="url(#gd)" stroke="#444"/><path d="M0.8 3.5 L3.5 0.8 L3.5 3.5 Z" fill="#c8faff" stroke="#333" stroke-width="0.8"/><path d="M2 5.5H8.8M2 7.5H8.8M2 9.5H8.8M2 11.5H8.8" stroke="#6a6a78" stroke-width="0.9"/></svg>
<div class="t11" style="left:580px;top:317px;color:#000">1.2.5</div>
<div class="t11 clip" style="left:656px;top:317px;width:314px;color:#000">Затраты по инженерной защите территории строительства от опасных</div>
<div class="t11 r" style="left:1012px;top:317px;width:78px;color:#000">0,00</div>
<div class="t11 r" style="left:1093px;top:317px;width:78px;color:#000">0,00</div>
<div class="t11 r" style="left:1174px;top:317px;width:78px;color:#000">0,00</div>
<div class="t11 r" style="left:1255px;top:317px;width:72px;color:#000">0,00</div>
<div class="t11 r" style="left:1330px;top:317px;width:98px;color:#000">0,00</div>
<div class="t11 r" style="left:1431px;top:317px;width:72px;color:#000">0,00</div>
<svg style="left:1527px;top:316px" width="8" height="12" viewBox="0 0 8 12"><path d="M0.8 7.2L2 6.6L3.6 10.5L6.6 0.3" fill="none" stroke="#ff0030" stroke-width="0.95"/></svg>
<div style="left:377px;top:329px;width:1245px;height:1px;background:#c8c8c8"></div>
<div style="left:377px;top:330px;width:1244px;height:15px;background:#fff"></div>
<div style="left:365px;top:330px;width:11px;height:15px;background:#f0f0f0"></div>
<div style="left:365px;top:330px;width:11px;height:1px;background:#fff"></div>
<div style="left:365px;top:330px;width:1px;height:15px;background:#fff"></div>
<div style="left:364px;top:345px;width:13px;height:1px;background:#808080"></div>
<div class="t11 r" style="left:377px;top:333px;width:31px;color:#000">15</div>
<svg style="left:436px;top:332px" width="10" height="10" viewBox="0 0 10 10"><rect x="0.5" y="0.5" width="9" height="9" fill="#fff" stroke="#7a7a7a"/><path d="M2.5 5 L4.3 7.5 L7.6 2.5" fill="none" stroke="#3a55a8" stroke-width="1.4"/></svg>
<svg style="left:484px;top:330px" width="13" height="16" viewBox="0 0 13 16"><defs><linearGradient id="gd" x1="0" y1="0" x2="0.3" y2="1"><stop offset="0" stop-color="#10a8ff"/><stop offset="0.5" stop-color="#60ccff"/><stop offset="1" stop-color="#c8f4ff"/></linearGradient></defs><path d="M3.5 0.5 H11.5 V14.5 H0.5 V3.5 Z" fill="url(#gd)" stroke="#444"/><path d="M0.8 3.5 L3.5 0.8 L3.5 3.5 Z" fill="#c8faff" stroke="#333" stroke-width="0.8"/><path d="M2 5.5H8.8M2 7.5H8.8M2 9.5H8.8M2 11.5H8.8" stroke="#6a6a78" stroke-width="0.9"/></svg>
<div class="t11" style="left:580px;top:333px;color:#000">1.2.6</div>
<div class="t11 clip" style="left:656px;top:333px;width:314px;color:#000">Затраты, связанные с изменением схемы движения транспорта</div>
<div class="t11 r" style="left:1012px;top:333px;width:78px;color:#000">0,00</div>
<div class="t11 r" style="left:1093px;top:333px;width:78px;color:#000">0,00</div>
<div class="t11 r" style="left:1174px;top:333px;width:78px;color:#000">0,00</div>
<div class="t11 r" style="left:1255px;top:333px;width:72px;color:#000">0,00</div>
<div class="t11 r" style="left:1330px;top:333px;width:98px;color:#000">0,00</div>
<div class="t11 r" style="left:1431px;top:333px;width:72px;color:#000">0,00</div>
<svg style="left:1527px;top:332px" width="8" height="12" viewBox="0 0 8 12"><path d="M0.8 7.2L2 6.6L3.6 10.5L6.6 0.3" fill="none" stroke="#ff0030" stroke-width="0.95"/></svg>
<div style="left:377px;top:345px;width:1245px;height:1px;background:#c8c8c8"></div>
<div style="left:377px;top:346px;width:1244px;height:15px;background:#fff"></div>
<div style="left:365px;top:346px;width:11px;height:15px;background:#f0f0f0"></div>
<div style="left:365px;top:346px;width:11px;height:1px;background:#fff"></div>
<div style="left:365px;top:346px;width:1px;height:15px;background:#fff"></div>
<div style="left:364px;top:361px;width:13px;height:1px;background:#808080"></div>
<div class="t11 r" style="left:377px;top:349px;width:31px;color:#000">16</div>
<svg style="left:436px;top:348px" width="10" height="10" viewBox="0 0 10 10"><rect x="0.5" y="0.5" width="9" height="9" fill="#fff" stroke="#7a7a7a"/><path d="M2.5 5 L4.3 7.5 L7.6 2.5" fill="none" stroke="#3a55a8" stroke-width="1.4"/></svg>
<svg style="left:484px;top:346px" width="13" height="16" viewBox="0 0 13 16"><defs><linearGradient id="gd" x1="0" y1="0" x2="0.3" y2="1"><stop offset="0" stop-color="#10a8ff"/><stop offset="0.5" stop-color="#60ccff"/><stop offset="1" stop-color="#c8f4ff"/></linearGradient></defs><path d="M3.5 0.5 H11.5 V14.5 H0.5 V3.5 Z" fill="url(#gd)" stroke="#444"/><path d="M0.8 3.5 L3.5 0.8 L3.5 3.5 Z" fill="#c8faff" stroke="#333" stroke-width="0.8"/><path d="M2 5.5H8.8M2 7.5H8.8M2 9.5H8.8M2 11.5H8.8" stroke="#6a6a78" stroke-width="0.9"/></svg>
<div class="t11" style="left:580px;top:349px;color:#000">1.2.7</div>
<div class="t11 clip" style="left:656px;top:349px;width:314px;color:#000">Приведение земельных участков, предоставленных во временное пользование</div>
<div class="t11 r" style="left:1012px;top:349px;width:78px;color:#000">0,00</div>
<div class="t11 r" style="left:1093px;top:349px;width:78px;color:#000">0,00</div>
<div class="t11 r" style="left:1174px;top:349px;width:78px;color:#000">0,00</div>
<div class="t11 r" style="left:1255px;top:349px;width:72px;color:#000">0,00</div>
<div class="t11 r" style="left:1330px;top:349px;width:98px;color:#000">0,00</div>
<div class="t11 r" style="left:1431px;top:349px;width:72px;color:#000">0,00</div>
<svg style="left:1527px;top:348px" width="8" height="12" viewBox="0 0 8 12"><path d="M0.8 7.2L2 6.6L3.6 10.5L6.6 0.3" fill="none" stroke="#ff0030" stroke-width="0.95"/></svg>
<div style="left:377px;top:361px;width:1245px;height:1px;background:#c8c8c8"></div>
<div style="left:377px;top:362px;width:1244px;height:15px;background:#fff"></div>
<div style="left:365px;top:362px;width:11px;height:15px;background:#f0f0f0"></div>
<div style="left:365px;top:362px;width:11px;height:1px;background:#fff"></div>
<div style="left:365px;top:362px;width:1px;height:15px;background:#fff"></div>
<div style="left:364px;top:377px;width:13px;height:1px;background:#808080"></div>
<div class="t11 r" style="left:377px;top:365px;width:31px;color:#000">17</div>
<svg style="left:436px;top:364px" width="10" height="10" viewBox="0 0 10 10"><rect x="0.5" y="0.5" width="9" height="9" fill="#fff" stroke="#7a7a7a"/><path d="M2.5 5 L4.3 7.5 L7.6 2.5" fill="none" stroke="#3a55a8" stroke-width="1.4"/></svg>
<svg style="left:484px;top:362px" width="13" height="16" viewBox="0 0 13 16"><defs><linearGradient id="gd" x1="0" y1="0" x2="0.3" y2="1"><stop offset="0" stop-color="#10a8ff"/><stop offset="0.5" stop-color="#60ccff"/><stop offset="1" stop-color="#c8f4ff"/></linearGradient></defs><path d="M3.5 0.5 H11.5 V14.5 H0.5 V3.5 Z" fill="url(#gd)" stroke="#444"/><path d="M0.8 3.5 L3.5 0.8 L3.5 3.5 Z" fill="#c8faff" stroke="#333" stroke-width="0.8"/><path d="M2 5.5H8.8M2 7.5H8.8M2 9.5H8.8M2 11.5H8.8" stroke="#6a6a78" stroke-width="0.9"/></svg>
<div class="t11" style="left:580px;top:365px;color:#000">1.2.8</div>
<div class="t11 clip" style="left:656px;top:365px;width:314px;color:#000">Затраты на подготовку и экспертизу проекта освоения лесов</div>
<div class="t11 r" style="left:1012px;top:365px;width:78px;color:#000">0,00</div>
<div class="t11 r" style="left:1093px;top:365px;width:78px;color:#000">0,00</div>
<div class="t11 r" style="left:1174px;top:365px;width:78px;color:#000">0,00</div>
<div class="t11 r" style="left:1255px;top:365px;width:72px;color:#000">0,00</div>
<div class="t11 r" style="left:1330px;top:365px;width:98px;color:#000">0,00</div>
<div class="t11 r" style="left:1431px;top:365px;width:72px;color:#000">0,00</div>
<svg style="left:1527px;top:364px" width="8" height="12" viewBox="0 0 8 12"><path d="M0.8 7.2L2 6.6L3.6 10.5L6.6 0.3" fill="none" stroke="#ff0030" stroke-width="0.95"/></svg>
<div style="left:377px;top:377px;width:1245px;height:1px;background:#c8c8c8"></div>
<div style="left:377px;top:378px;width:1244px;height:15px;background:#e0e0ff"></div>
<div style="left:365px;top:378px;width:11px;height:15px;background:#f0f0f0"></div>
<div style="left:365px;top:378px;width:11px;height:1px;background:#fff"></div>
<div style="left:365px;top:378px;width:1px;height:15px;background:#fff"></div>
<div style="left:364px;top:393px;width:13px;height:1px;background:#808080"></div>
<div class="t11 r" style="left:377px;top:381px;width:31px;color:#0000ff">18</div>
<svg style="left:483px;top:377px" width="16" height="16" viewBox="0 0 16 16"><defs><linearGradient id="gf" x1="0" y1="1" x2="1" y2="0"><stop offset="0" stop-color="#ffff20"/><stop offset="0.45" stop-color="#ffd800"/><stop offset="1" stop-color="#ff8000"/></linearGradient></defs><path d="M0.5 3.5V1.5H7L8 3.5" fill="#ffc820" stroke="#8a8aa0"/><rect x="0.5" y="3.5" width="15" height="11" fill="url(#gf)" stroke="#8a8aa0"/></svg>
<div class="t11" style="left:580px;top:381px;color:#0000ff">Гл. 2</div>
<div class="t11 clip" style="left:656px;top:381px;width:314px;color:#0000ff">Глава  2. Основные объекты строительства, реконструкции, капитального ремонта</div>
<div class="t11 r" style="left:971px;top:381px;width:37px;color:#0000ff">2</div>
<div class="t11 r" style="left:1012px;top:381px;width:78px;color:#0000ff">997,76</div>
<div class="t11 r" style="left:1093px;top:381px;width:78px;color:#0000ff">0,00</div>
<div class="t11 r" style="left:1174px;top:381px;width:78px;color:#0000ff">0,00</div>
<div class="t11 r" style="left:1255px;top:381px;width:72px;color:#0000ff">0,00</div>
<div class="t11 r" style="left:1330px;top:381px;width:98px;color:#0000ff">997,76</div>
<div class="t11 r" style="left:1431px;top:381px;width:72px;color:#0000ff">0,00</div>
<svg style="left:1527px;top:380px" width="8" height="12" viewBox="0 0 8 12"><path d="M0.8 7.2L2 6.6L3.6 10.5L6.6 0.3" fill="none" stroke="#0000ff" stroke-width="0.95"/></svg>
<div style="left:377px;top:393px;width:1245px;height:1px;background:#c8c8c8"></div>
<div style="left:377px;top:394px;width:1244px;height:15px;background:#e3ffff"></div>
<div style="left:365px;top:394px;width:11px;height:15px;background:#f0f0f0"></div>
<div style="left:365px;top:394px;width:11px;height:1px;background:#fff"></div>
<div style="left:365px;top:394px;width:1px;height:15px;background:#fff"></div>
<div style="left:364px;top:409px;width:13px;height:1px;background:#808080"></div>
<div class="t11 r" style="left:377px;top:397px;width:31px;color:#000">19</div>
<svg style="left:436px;top:396px" width="10" height="10" viewBox="0 0 10 10"><rect x="0.5" y="0.5" width="9" height="9" fill="#fff" stroke="#7a7a7a"/><path d="M2.5 5 L4.3 7.5 L7.6 2.5" fill="none" stroke="#3a55a8" stroke-width="1.4"/></svg>
<svg style="left:483px;top:394px" width="16" height="16" viewBox="0 0 16 16"><path d="M0 9 L11 13 L16 4.5 L16 7.5 L11 16 L0 12.5 Z" fill="#e2e6ee" stroke="#a8b0c0" stroke-width="0.7"/><path d="M0 8.5 L5 2 L11 2 L16 4.5 L11 13 L0 9.5 Z" fill="#3aa060" stroke="#2a8048" stroke-width="0.5"/><path d="M6.5 4.2 L12.5 6.3" stroke="#f4fff6" stroke-width="1.4"/></svg>
<div class="t11 clip" style="left:515px;top:397px;width:62px;color:#000">ЛС-02-01</div>
<div class="t11 clip" style="left:656px;top:397px;width:314px;color:#000">Устройство котлована</div>
<div class="t11 r" style="left:1012px;top:397px;width:78px;color:#000">84,33</div>
<div class="t11 r" style="left:1093px;top:397px;width:78px;color:#000">0,00</div>
<div class="t11 r" style="left:1174px;top:397px;width:78px;color:#000">0,00</div>
<div class="t11 r" style="left:1255px;top:397px;width:72px;color:#000">0,00</div>
<div class="t11 r" style="left:1330px;top:397px;width:98px;color:#000">84,33</div>
<div class="t11 r" style="left:1431px;top:397px;width:72px;color:#000">0,00</div>
<svg style="left:1527px;top:396px" width="8" height="12" viewBox="0 0 8 12"><path d="M0.8 7.2L2 6.6L3.6 10.5L6.6 0.3" fill="none" stroke="#102060" stroke-width="0.95"/></svg>
<div class="t11" style="left:1559px;top:397px;color:#000">НПР</div>
<div style="left:377px;top:409px;width:1245px;height:1px;background:#c8c8c8"></div>
<div style="left:377px;top:410px;width:1244px;height:15px;background:#e3ffff"></div>
<div style="left:365px;top:410px;width:11px;height:15px;background:#f0f0f0"></div>
<div style="left:365px;top:410px;width:11px;height:1px;background:#fff"></div>
<div style="left:365px;top:410px;width:1px;height:15px;background:#fff"></div>
<div style="left:364px;top:425px;width:13px;height:1px;background:#808080"></div>
<div class="t11 r" style="left:377px;top:413px;width:31px;color:#000">20</div>
<svg style="left:436px;top:412px" width="10" height="10" viewBox="0 0 10 10"><rect x="0.5" y="0.5" width="9" height="9" fill="#fff" stroke="#7a7a7a"/><path d="M2.5 5 L4.3 7.5 L7.6 2.5" fill="none" stroke="#3a55a8" stroke-width="1.4"/></svg>
<svg style="left:483px;top:410px" width="16" height="16" viewBox="0 0 16 16"><path d="M0 9 L11 13 L16 4.5 L16 7.5 L11 16 L0 12.5 Z" fill="#e2e6ee" stroke="#a8b0c0" stroke-width="0.7"/><path d="M0 8.5 L5 2 L11 2 L16 4.5 L11 13 L0 9.5 Z" fill="#3aa060" stroke="#2a8048" stroke-width="0.5"/><path d="M6.5 4.2 L12.5 6.3" stroke="#f4fff6" stroke-width="1.4"/></svg>
<div class="t11 clip" style="left:515px;top:413px;width:62px;color:#000">ЛС-02-02</div>
<div class="t11 clip" style="left:656px;top:413px;width:314px;color:#000">Фундамент</div>
<div class="t11 r" style="left:1012px;top:413px;width:78px;color:#000">913,43</div>
<div class="t11 r" style="left:1093px;top:413px;width:78px;color:#000">0,00</div>
<div class="t11 r" style="left:1174px;top:413px;width:78px;color:#000">0,00</div>
<div class="t11 r" style="left:1255px;top:413px;width:72px;color:#000">0,00</div>
<div class="t11 r" style="left:1330px;top:413px;width:98px;color:#000">913,43</div>
<div class="t11 r" style="left:1431px;top:413px;width:72px;color:#000">0,00</div>
<svg style="left:1527px;top:412px" width="8" height="12" viewBox="0 0 8 12"><path d="M0.8 7.2L2 6.6L3.6 10.5L6.6 0.3" fill="none" stroke="#102060" stroke-width="0.95"/></svg>
<div class="t11" style="left:1559px;top:413px;color:#000">НПР</div>
<div style="left:377px;top:425px;width:1245px;height:1px;background:#c8c8c8"></div>
<div style="left:377px;top:426px;width:1244px;height:15px;background:#e0e0ff"></div>
<div style="left:365px;top:426px;width:11px;height:15px;background:#f0f0f0"></div>
<div style="left:365px;top:426px;width:11px;height:1px;background:#fff"></div>
<div style="left:365px;top:426px;width:1px;height:15px;background:#fff"></div>
<div style="left:364px;top:441px;width:13px;height:1px;background:#808080"></div>
<div class="t11 r" style="left:377px;top:429px;width:31px;color:#0000ff">21</div>
<svg style="left:483px;top:425px" width="16" height="16" viewBox="0 0 16 16"><defs><linearGradient id="gf" x1="0" y1="1" x2="1" y2="0"><stop offset="0" stop-color="#ffff20"/><stop offset="0.45" stop-color="#ffd800"/><stop offset="1" stop-color="#ff8000"/></linearGradient></defs><path d="M0.5 3.5V1.5H7L8 3.5" fill="#ffc820" stroke="#8a8aa0"/><rect x="0.5" y="3.5" width="15" height="11" fill="url(#gf)" stroke="#8a8aa0"/></svg>
<div class="t11" style="left:580px;top:429px;color:#0000ff">Гл. 3</div>
<div class="t11 clip" style="left:656px;top:429px;width:314px;color:#0000ff">Глава  3. Объекты подсобного и обслуживающего назначения.</div>
<div class="t11 r" style="left:971px;top:429px;width:37px;color:#0000ff">3</div>
<div class="t11 r" style="left:1012px;top:429px;width:78px;color:#0000ff">21,75</div>
<div class="t11 r" style="left:1093px;top:429px;width:78px;color:#0000ff">0,00</div>
<div class="t11 r" style="left:1174px;top:429px;width:78px;color:#0000ff">0,00</div>
<div class="t11 r" style="left:1255px;top:429px;width:72px;color:#0000ff">0,00</div>
<div class="t11 r" style="left:1330px;top:429px;width:98px;color:#0000ff">21,75</div>
<div class="t11 r" style="left:1431px;top:429px;width:72px;color:#0000ff">0,00</div>
<svg style="left:1527px;top:428px" width="8" height="12" viewBox="0 0 8 12"><path d="M0.8 7.2L2 6.6L3.6 10.5L6.6 0.3" fill="none" stroke="#0000ff" stroke-width="0.95"/></svg>
<div style="left:377px;top:441px;width:1245px;height:1px;background:#c8c8c8"></div>
<div style="left:377px;top:442px;width:1244px;height:15px;background:#e3ffff"></div>
<div style="left:365px;top:442px;width:11px;height:15px;background:#f0f0f0"></div>
<div style="left:365px;top:442px;width:11px;height:1px;background:#fff"></div>
<div style="left:365px;top:442px;width:1px;height:15px;background:#fff"></div>
<div style="left:364px;top:457px;width:13px;height:1px;background:#808080"></div>
<div class="t11 r" style="left:377px;top:445px;width:31px;color:#000">22</div>
<svg style="left:436px;top:444px" width="10" height="10" viewBox="0 0 10 10"><rect x="0.5" y="0.5" width="9" height="9" fill="#fff" stroke="#7a7a7a"/><path d="M2.5 5 L4.3 7.5 L7.6 2.5" fill="none" stroke="#3a55a8" stroke-width="1.4"/></svg>
<svg style="left:483px;top:442px" width="16" height="16" viewBox="0 0 16 16"><path d="M0 9 L11 13 L16 4.5 L16 7.5 L11 16 L0 12.5 Z" fill="#e2e6ee" stroke="#a8b0c0" stroke-width="0.7"/><path d="M0 8.5 L5 2 L11 2 L16 4.5 L11 13 L0 9.5 Z" fill="#3aa060" stroke="#2a8048" stroke-width="0.5"/><path d="M6.5 4.2 L12.5 6.3" stroke="#f4fff6" stroke-width="1.4"/></svg>
<div class="t11 clip" style="left:515px;top:445px;width:62px;color:#000">ЛС-03-01</div>
<div class="t11 clip" style="left:656px;top:445px;width:314px;color:#000">Объекты подсобного назначения</div>
<div class="t11 r" style="left:1012px;top:445px;width:78px;color:#000">21,75</div>
<div class="t11 r" style="left:1093px;top:445px;width:78px;color:#000">0,00</div>
<div class="t11 r" style="left:1174px;top:445px;width:78px;color:#000">0,00</div>
<div class="t11 r" style="left:1255px;top:445px;width:72px;color:#000">0,00</div>
<div class="t11 r" style="left:1330px;top:445px;width:98px;color:#000">21,75</div>
<div class="t11 r" style="left:1431px;top:445px;width:72px;color:#000">0,00</div>
<svg style="left:1527px;top:444px" width="8" height="12" viewBox="0 0 8 12"><path d="M0.8 7.2L2 6.6L3.6 10.5L6.6 0.3" fill="none" stroke="#102060" stroke-width="0.95"/></svg>
<div class="t11" style="left:1559px;top:445px;color:#000">НПР</div>
<div style="left:377px;top:457px;width:1245px;height:1px;background:#c8c8c8"></div>
<div style="left:377px;top:458px;width:1244px;height:15px;background:#e0e0ff"></div>
<div style="left:365px;top:458px;width:11px;height:15px;background:#f0f0f0"></div>
<div style="left:365px;top:458px;width:11px;height:1px;background:#fff"></div>
<div style="left:365px;top:458px;width:1px;height:15px;background:#fff"></div>
<div style="left:364px;top:473px;width:13px;height:1px;background:#808080"></div>
<div class="t11 r" style="left:377px;top:461px;width:31px;color:#0000ff">23</div>
<svg style="left:483px;top:457px" width="16" height="16" viewBox="0 0 16 16"><defs><linearGradient id="gf" x1="0" y1="1" x2="1" y2="0"><stop offset="0" stop-color="#ffff20"/><stop offset="0.45" stop-color="#ffd800"/><stop offset="1" stop-color="#ff8000"/></linearGradient></defs><path d="M0.5 3.5V1.5H7L8 3.5" fill="#ffc820" stroke="#8a8aa0"/><rect x="0.5" y="3.5" width="15" height="11" fill="url(#gf)" stroke="#8a8aa0"/></svg>
<div class="t11" style="left:580px;top:461px;color:#0000ff">Гл. 4</div>
<div class="t11 clip" style="left:656px;top:461px;width:314px;color:#0000ff">Глава  4. Объекты энергетического хозяйства.</div>
<div class="t11 r" style="left:971px;top:461px;width:37px;color:#0000ff">4</div>
<div class="t11 r" style="left:1012px;top:461px;width:78px;color:#0000ff">0,00</div>
<div class="t11 r" style="left:1093px;top:461px;width:78px;color:#0000ff">0,00</div>
<div class="t11 r" style="left:1174px;top:461px;width:78px;color:#0000ff">0,00</div>
<div class="t11 r" style="left:1255px;top:461px;width:72px;color:#0000ff">0,00</div>
<div class="t11 r" style="left:1330px;top:461px;width:98px;color:#0000ff">0,00</div>
<div class="t11 r" style="left:1431px;top:461px;width:72px;color:#0000ff">0,00</div>
<svg style="left:1527px;top:460px" width="8" height="12" viewBox="0 0 8 12"><path d="M0.8 7.2L2 6.6L3.6 10.5L6.6 0.3" fill="none" stroke="#0000ff" stroke-width="0.95"/></svg>
<div style="left:377px;top:473px;width:1245px;height:1px;background:#c8c8c8"></div>
<div style="left:377px;top:474px;width:1244px;height:15px;background:#e0e0ff"></div>
<div style="left:365px;top:474px;width:11px;height:15px;background:#f0f0f0"></div>
<div style="left:365px;top:474px;width:11px;height:1px;background:#fff"></div>
<div style="left:365px;top:474px;width:1px;height:15px;background:#fff"></div>
<div style="left:364px;top:489px;width:13px;height:1px;background:#808080"></div>
<div class="t11 r" style="left:377px;top:477px;width:31px;color:#0000ff">24</div>
<svg style="left:483px;top:473px" width="16" height="16" viewBox="0 0 16 16"><defs><linearGradient id="gf" x1="0" y1="1" x2="1" y2="0"><stop offset="0" stop-color="#ffff20"/><stop offset="0.45" stop-color="#ffd800"/><stop offset="1" stop-color="#ff8000"/></linearGradient></defs><path d="M0.5 3.5V1.5H7L8 3.5" fill="#ffc820" stroke="#8a8aa0"/><rect x="0.5" y="3.5" width="15" height="11" fill="url(#gf)" stroke="#8a8aa0"/></svg>
<div class="t11" style="left:580px;top:477px;color:#0000ff">Гл. 5</div>
<div class="t11 clip" style="left:656px;top:477px;width:314px;color:#0000ff">Глава  5. Объекты транспортного хозяйства и связи.</div>
<div class="t11 r" style="left:971px;top:477px;width:37px;color:#0000ff">5</div>
<div class="t11 r" style="left:1012px;top:477px;width:78px;color:#0000ff">0,00</div>
<div class="t11 r" style="left:1093px;top:477px;width:78px;color:#0000ff">0,00</div>
<div class="t11 r" style="left:1174px;top:477px;width:78px;color:#0000ff">0,00</div>
<div class="t11 r" style="left:1255px;top:477px;width:72px;color:#0000ff">0,00</div>
<div class="t11 r" style="left:1330px;top:477px;width:98px;color:#0000ff">0,00</div>
<div class="t11 r" style="left:1431px;top:477px;width:72px;color:#0000ff">0,00</div>
<svg style="left:1527px;top:476px" width="8" height="12" viewBox="0 0 8 12"><path d="M0.8 7.2L2 6.6L3.6 10.5L6.6 0.3" fill="none" stroke="#0000ff" stroke-width="0.95"/></svg>
<div style="left:377px;top:489px;width:1245px;height:1px;background:#c8c8c8"></div>
<div style="left:377px;top:490px;width:1244px;height:15px;background:#e0e0ff"></div>
<div style="left:365px;top:490px;width:11px;height:15px;background:#f0f0f0"></div>
<div style="left:365px;top:490px;width:11px;height:1px;background:#fff"></div>
<div style="left:365px;top:490px;width:1px;height:15px;background:#fff"></div>
<div style="left:364px;top:505px;width:13px;height:1px;background:#808080"></div>
<div class="t11 r" style="left:377px;top:493px;width:31px;color:#0000ff">25</div>
<svg style="left:483px;top:489px" width="16" height="16" viewBox="0 0 16 16"><defs><linearGradient id="gf" x1="0" y1="1" x2="1" y2="0"><stop offset="0" stop-color="#ffff20"/><stop offset="0.45" stop-color="#ffd800"/><stop offset="1" stop-color="#ff8000"/></linearGradient></defs><path d="M0.5 3.5V1.5H7L8 3.5" fill="#ffc820" stroke="#8a8aa0"/><rect x="0.5" y="3.5" width="15" height="11" fill="url(#gf)" stroke="#8a8aa0"/></svg>
<div class="t11" style="left:580px;top:493px;color:#0000ff">Гл. 6</div>
<div class="t11 clip" style="left:656px;top:493px;width:314px;color:#0000ff">Глава  6. Наружные сети и сооружения водоснабжения, водоотведения</div>
<div class="t11 r" style="left:971px;top:493px;width:37px;color:#0000ff">6</div>
<div class="t11 r" style="left:1012px;top:493px;width:78px;color:#0000ff">0,00</div>
<div class="t11 r" style="left:1093px;top:493px;width:78px;color:#0000ff">0,00</div>
<div class="t11 r" style="left:1174px;top:493px;width:78px;color:#0000ff">0,00</div>
<div class="t11 r" style="left:1255px;top:493px;width:72px;color:#0000ff">0,00</div>
<div class="t11 r" style="left:1330px;top:493px;width:98px;color:#0000ff">0,00</div>
<div class="t11 r" style="left:1431px;top:493px;width:72px;color:#0000ff">0,00</div>
<svg style="left:1527px;top:492px" width="8" height="12" viewBox="0 0 8 12"><path d="M0.8 7.2L2 6.6L3.6 10.5L6.6 0.3" fill="none" stroke="#0000ff" stroke-width="0.95"/></svg>
<div style="left:377px;top:505px;width:1245px;height:1px;background:#c8c8c8"></div>
<div style="left:377px;top:506px;width:1244px;height:15px;background:#e0e0ff"></div>
<div style="left:365px;top:506px;width:11px;height:15px;background:#f0f0f0"></div>
<div style="left:365px;top:506px;width:11px;height:1px;background:#fff"></div>
<div style="left:365px;top:506px;width:1px;height:15px;background:#fff"></div>
<div style="left:364px;top:521px;width:13px;height:1px;background:#808080"></div>
<div class="t11 r" style="left:377px;top:509px;width:31px;color:#0000ff">26</div>
<svg style="left:483px;top:505px" width="16" height="16" viewBox="0 0 16 16"><defs><linearGradient id="gf" x1="0" y1="1" x2="1" y2="0"><stop offset="0" stop-color="#ffff20"/><stop offset="0.45" stop-color="#ffd800"/><stop offset="1" stop-color="#ff8000"/></linearGradient></defs><path d="M0.5 3.5V1.5H7L8 3.5" fill="#ffc820" stroke="#8a8aa0"/><rect x="0.5" y="3.5" width="15" height="11" fill="url(#gf)" stroke="#8a8aa0"/></svg>
<div class="t11" style="left:580px;top:509px;color:#0000ff">Гл. 7</div>
<div class="t11 clip" style="left:656px;top:509px;width:314px;color:#0000ff">Глава  7. Благоустройство и озеленение территории.</div>
<div class="t11 r" style="left:971px;top:509px;width:37px;color:#0000ff">7</div>
<div class="t11 r" style="left:1012px;top:509px;width:78px;color:#0000ff">0,00</div>
<div class="t11 r" style="left:1093px;top:509px;width:78px;color:#0000ff">0,00</div>
<div class="t11 r" style="left:1174px;top:509px;width:78px;color:#0000ff">0,00</div>
<div class="t11 r" style="left:1255px;top:509px;width:72px;color:#0000ff">0,00</div>
<div class="t11 r" style="left:1330px;top:509px;width:98px;color:#0000ff">0,00</div>
<div class="t11 r" style="left:1431px;top:509px;width:72px;color:#0000ff">0,00</div>
<svg style="left:1527px;top:508px" width="8" height="12" viewBox="0 0 8 12"><path d="M0.8 7.2L2 6.6L3.6 10.5L6.6 0.3" fill="none" stroke="#0000ff" stroke-width="0.95"/></svg>
<div style="left:377px;top:521px;width:1245px;height:1px;background:#c8c8c8"></div>
<div style="left:377px;top:522px;width:1244px;height:15px;background:#e0e0ff"></div>
<div style="left:365px;top:522px;width:11px;height:15px;background:#f0f0f0"></div>
<div style="left:365px;top:522px;width:11px;height:1px;background:#fff"></div>
<div style="left:365px;top:522px;width:1px;height:15px;background:#fff"></div>
<div style="left:364px;top:537px;width:13px;height:1px;background:#808080"></div>
<div class="t11 r" style="left:377px;top:525px;width:31px;color:#0000ff">27</div>
<svg style="left:483px;top:521px" width="16" height="16" viewBox="0 0 16 16"><defs><linearGradient id="gf" x1="0" y1="1" x2="1" y2="0"><stop offset="0" stop-color="#ffff20"/><stop offset="0.45" stop-color="#ffd800"/><stop offset="1" stop-color="#ff8000"/></linearGradient></defs><path d="M0.5 3.5V1.5H7L8 3.5" fill="#ffc820" stroke="#8a8aa0"/><rect x="0.5" y="3.5" width="15" height="11" fill="url(#gf)" stroke="#8a8aa0"/><rect x="4.5" y="5.5" width="8" height="8" fill="#fff" stroke="#b07830"/><path d="M10 7.5H7L8.8 9.5L7 11.5H10" fill="none" stroke="#555" stroke-width="1"/></svg>
<div class="t11" style="left:580px;top:525px;color:#0000ff">Ит 1-7</div>
<div class="t11 clip" style="left:656px;top:525px;width:314px;color:#0000ff">Итого по главам 1 - 7</div>
<div class="t11 r" style="left:1012px;top:525px;width:78px;color:#0000ff">1 490,84</div>
<div class="t11 r" style="left:1093px;top:525px;width:78px;color:#0000ff">0,00</div>
<div class="t11 r" style="left:1174px;top:525px;width:78px;color:#0000ff">0,00</div>
<div class="t11 r" style="left:1255px;top:525px;width:72px;color:#0000ff">0,00</div>
<div class="t11 r" style="left:1330px;top:525px;width:98px;color:#0000ff">1 490,84</div>
<div class="t11 r" style="left:1431px;top:525px;width:72px;color:#0000ff">0,00</div>
<svg style="left:1527px;top:524px" width="8" height="12" viewBox="0 0 8 12"><path d="M0.8 7.2L2 6.6L3.6 10.5L6.6 0.3" fill="none" stroke="#0000ff" stroke-width="0.95"/></svg>
<div style="left:377px;top:537px;width:1245px;height:1px;background:#c8c8c8"></div>
<div style="left:377px;top:538px;width:1244px;height:15px;background:#fff"></div>
<div style="left:365px;top:538px;width:11px;height:15px;background:#f0f0f0"></div>
<div style="left:365px;top:538px;width:11px;height:1px;background:#fff"></div>
<div style="left:365px;top:538px;width:1px;height:15px;background:#fff"></div>
<div style="left:364px;top:553px;width:13px;height:1px;background:#808080"></div>
<div class="t11 r" style="left:377px;top:541px;width:31px;color:#000">28</div>
<svg style="left:436px;top:540px" width="10" height="10" viewBox="0 0 10 10"><rect x="0.5" y="0.5" width="9" height="9" fill="#fff" stroke="#7a7a7a"/><path d="M2.5 5 L4.3 7.5 L7.6 2.5" fill="none" stroke="#3a55a8" stroke-width="1.4"/></svg>
<svg style="left:484px;top:538px" width="13" height="16" viewBox="0 0 13 16"><defs><linearGradient id="gd" x1="0" y1="0" x2="0.3" y2="1"><stop offset="0" stop-color="#10a8ff"/><stop offset="0.5" stop-color="#60ccff"/><stop offset="1" stop-color="#c8f4ff"/></linearGradient></defs><path d="M3.5 0.5 H11.5 V14.5 H0.5 V3.5 Z" fill="url(#gd)" stroke="#444"/><path d="M0.8 3.5 L3.5 0.8 L3.5 3.5 Z" fill="#c8faff" stroke="#333" stroke-width="0.8"/><path d="M2 5.5H8.8M2 7.5H8.8M2 9.5H8.8M2 11.5H8.8" stroke="#6a6a78" stroke-width="0.9"/></svg>
<div class="t11" style="left:580px;top:541px;color:#000">1-7</div>
<div class="t11 clip" style="left:656px;top:541px;width:314px;color:#000">Итого по главам 1 - 7</div>
<div class="t11 r" style="left:1012px;top:541px;width:78px;color:#000">1 490,84</div>
<div class="t11 r" style="left:1093px;top:541px;width:78px;color:#000">0,00</div>
<div class="t11 r" style="left:1174px;top:541px;width:78px;color:#000">0,00</div>
<div class="t11 r" style="left:1255px;top:541px;width:72px;color:#000">0,00</div>
<div class="t11 r" style="left:1330px;top:541px;width:98px;color:#000">1 490,84</div>
<div class="t11 r" style="left:1431px;top:541px;width:72px;color:#000">0,00</div>
<div style="left:377px;top:553px;width:1245px;height:1px;background:#c8c8c8"></div>
<div style="left:377px;top:554px;width:1244px;height:15px;background:#e0e0ff"></div>
<div style="left:365px;top:554px;width:11px;height:15px;background:#f0f0f0"></div>
<div style="left:365px;top:554px;width:11px;height:1px;background:#fff"></div>
<div style="left:365px;top:554px;width:1px;height:15px;background:#fff"></div>
<div style="left:364px;top:569px;width:13px;height:1px;background:#808080"></div>
<div class="t11 r" style="left:377px;top:557px;width:31px;color:#0000ff">29</div>
<svg style="left:483px;top:553px" width="16" height="16" viewBox="0 0 16 16"><defs><linearGradient id="gf" x1="0" y1="1" x2="1" y2="0"><stop offset="0" stop-color="#ffff20"/><stop offset="0.45" stop-color="#ffd800"/><stop offset="1" stop-color="#ff8000"/></linearGradient></defs><path d="M0.5 3.5V1.5H7L8 3.5" fill="#ffc820" stroke="#8a8aa0"/><rect x="0.5" y="3.5" width="15" height="11" fill="url(#gf)" stroke="#8a8aa0"/></svg>
<div class="t11" style="left:580px;top:557px;color:#0000ff">Гл. 8</div>
<div class="t11 clip" style="left:656px;top:557px;width:314px;color:#0000ff">Глава  8. Временные здания и сооружения.</div>
<div class="t11 r" style="left:971px;top:557px;width:37px;color:#0000ff">8</div>
<div class="t11 r" style="left:1012px;top:557px;width:78px;color:#0000ff">22,36</div>
<div class="t11 r" style="left:1093px;top:557px;width:78px;color:#0000ff">0,00</div>
<div class="t11 r" style="left:1174px;top:557px;width:78px;color:#0000ff">0,00</div>
<div class="t11 r" style="left:1255px;top:557px;width:72px;color:#0000ff">0,00</div>
<div class="t11 r" style="left:1330px;top:557px;width:98px;color:#0000ff">22,36</div>
<div class="t11 r" style="left:1431px;top:557px;width:72px;color:#0000ff">0,00</div>
<svg style="left:1527px;top:556px" width="8" height="12" viewBox="0 0 8 12"><path d="M0.8 7.2L2 6.6L3.6 10.5L6.6 0.3" fill="none" stroke="#0000ff" stroke-width="0.95"/></svg>
<div style="left:377px;top:569px;width:1245px;height:1px;background:#c8c8c8"></div>
<div style="left:377px;top:570px;width:1244px;height:15px;background:#fff"></div>
<div style="left:365px;top:570px;width:11px;height:15px;background:#f0f0f0"></div>
<div style="left:365px;top:570px;width:11px;height:1px;background:#fff"></div>
<div style="left:365px;top:570px;width:1px;height:15px;background:#fff"></div>
<div style="left:364px;top:585px;width:13px;height:1px;background:#808080"></div>
<div class="t11 r" style="left:377px;top:573px;width:31px;color:#000">30</div>
<svg style="left:436px;top:572px" width="10" height="10" viewBox="0 0 10 10"><rect x="0.5" y="0.5" width="9" height="9" fill="#fff" stroke="#7a7a7a"/><path d="M2.5 5 L4.3 7.5 L7.6 2.5" fill="none" stroke="#3a55a8" stroke-width="1.4"/></svg>
<svg style="left:484px;top:570px" width="13" height="16" viewBox="0 0 13 16"><defs><linearGradient id="gd" x1="0" y1="0" x2="0.3" y2="1"><stop offset="0" stop-color="#10a8ff"/><stop offset="0.5" stop-color="#60ccff"/><stop offset="1" stop-color="#c8f4ff"/></linearGradient></defs><path d="M3.5 0.5 H11.5 V14.5 H0.5 V3.5 Z" fill="url(#gd)" stroke="#444"/><path d="M0.8 3.5 L3.5 0.8 L3.5 3.5 Z" fill="#c8faff" stroke="#333" stroke-width="0.8"/><path d="M2 5.5H8.8M2 7.5H8.8M2 9.5H8.8M2 11.5H8.8" stroke="#6a6a78" stroke-width="0.9"/></svg>
<div class="t11 clip" style="left:515px;top:573px;width:62px;color:#000">ГСН 81-05-01</div>
<div class="t11" style="left:580px;top:573px;color:#000">Итог 1</div>
<div class="t11 clip" style="left:656px;top:573px;width:314px;color:#000">Затраты на временные здания и сооружения; 1,5% от СМР</div>
<div class="t11 r" style="left:1012px;top:573px;width:78px;color:#000">22,36</div>
<div class="t11 r" style="left:1093px;top:573px;width:78px;color:#000">0,00</div>
<div class="t11 r" style="left:1174px;top:573px;width:78px;color:#000">0,00</div>
<div class="t11 r" style="left:1255px;top:573px;width:72px;color:#000">0,00</div>
<div class="t11 r" style="left:1330px;top:573px;width:98px;color:#000">22,36</div>
<div class="t11 r" style="left:1431px;top:573px;width:72px;color:#000">0,00</div>
<svg style="left:1527px;top:572px" width="8" height="12" viewBox="0 0 8 12"><path d="M0.8 7.2L2 6.6L3.6 10.5L6.6 0.3" fill="none" stroke="#ff0030" stroke-width="0.95"/></svg>
<div style="left:377px;top:585px;width:1245px;height:1px;background:#c8c8c8"></div>
<div style="left:377px;top:586px;width:1244px;height:15px;background:#fff"></div>
<div style="left:365px;top:586px;width:11px;height:15px;background:#f0f0f0"></div>
<div style="left:365px;top:586px;width:11px;height:1px;background:#fff"></div>
<div style="left:365px;top:586px;width:1px;height:15px;background:#fff"></div>
<div style="left:364px;top:601px;width:13px;height:1px;background:#808080"></div>
<div class="t11 r" style="left:377px;top:589px;width:31px;color:#a0a0a0">31</div>
<svg style="left:436px;top:588px" width="10" height="10" viewBox="0 0 10 10"><rect x="0.5" y="0.5" width="9" height="9" fill="#fff" stroke="#7a7a7a"/></svg>
<svg style="left:484px;top:586px" width="13" height="16" viewBox="0 0 13 16"><defs><linearGradient id="gd" x1="0" y1="0" x2="0.3" y2="1"><stop offset="0" stop-color="#10a8ff"/><stop offset="0.5" stop-color="#60ccff"/><stop offset="1" stop-color="#c8f4ff"/></linearGradient></defs><path d="M3.5 0.5 H11.5 V14.5 H0.5 V3.5 Z" fill="url(#gd)" stroke="#444"/><path d="M0.8 3.5 L3.5 0.8 L3.5 3.5 Z" fill="#c8faff" stroke="#333" stroke-width="0.8"/><path d="M2 5.5H8.8M2 7.5H8.8M2 9.5H8.8M2 11.5H8.8" stroke="#6a6a78" stroke-width="0.9"/></svg>
<div class="t11" style="left:580px;top:589px;color:#a0a0a0">Итог 2</div>
<div class="t11 clip" style="left:656px;top:589px;width:314px;color:#a0a0a0">Временные здания и сооружения.</div>
<div class="t11 r" style="left:1012px;top:589px;width:78px;color:#a0a0a0">0,00</div>
<div class="t11 r" style="left:1093px;top:589px;width:78px;color:#a0a0a0">0,00</div>
<div class="t11 r" style="left:1174px;top:589px;width:78px;color:#a0a0a0">0,00</div>
<div class="t11 r" style="left:1255px;top:589px;width:72px;color:#a0a0a0">0,00</div>
<div class="t11 r" style="left:1330px;top:589px;width:98px;color:#a0a0a0">0,00</div>
<div class="t11 r" style="left:1431px;top:589px;width:72px;color:#a0a0a0">0,00</div>
<div style="left:377px;top:601px;width:1245px;height:1px;background:#c8c8c8"></div>
<div style="left:377px;top:602px;width:1244px;height:15px;background:#e0e0ff"></div>
<div style="left:365px;top:602px;width:11px;height:15px;background:#f0f0f0"></div>
<div style="left:365px;top:602px;width:11px;height:1px;background:#fff"></div>
<div style="left:365px;top:602px;width:1px;height:15px;background:#fff"></div>
<div style="left:364px;top:617px;width:13px;height:1px;background:#808080"></div>
<div class="t11 r" style="left:377px;top:605px;width:31px;color:#0000ff">32</div>
<svg style="left:483px;top:601px" width="16" height="16" viewBox="0 0 16 16"><defs><linearGradient id="gf" x1="0" y1="1" x2="1" y2="0"><stop offset="0" stop-color="#ffff20"/><stop offset="0.45" stop-color="#ffd800"/><stop offset="1" stop-color="#ff8000"/></linearGradient></defs><path d="M0.5 3.5V1.5H7L8 3.5" fill="#ffc820" stroke="#8a8aa0"/><rect x="0.5" y="3.5" width="15" height="11" fill="url(#gf)" stroke="#8a8aa0"/><rect x="4.5" y="5.5" width="8" height="8" fill="#fff" stroke="#b07830"/><path d="M10 7.5H7L8.8 9.5L7 11.5H10" fill="none" stroke="#555" stroke-width="1"/></svg>
<div class="t11" style="left:580px;top:605px;color:#0000ff">Ит 1-8</div>
<div class="t11 clip" style="left:656px;top:605px;width:314px;color:#0000ff">Итого по главам 1 - 8</div>
<div class="t11 r" style="left:1012px;top:605px;width:78px;color:#0000ff">1 513,20</div>
<div class="t11 r" style="left:1093px;top:605px;width:78px;color:#0000ff">0,00</div>
<div class="t11 r" style="left:1174px;top:605px;width:78px;color:#0000ff">0,00</div>
<div class="t11 r" style="left:1255px;top:605px;width:72px;color:#0000ff">0,00</div>
<div class="t11 r" style="left:1330px;top:605px;width:98px;color:#0000ff">1 513,20</div>
<div class="t11 r" style="left:1431px;top:605px;width:72px;color:#0000ff">0,00</div>
<svg style="left:1527px;top:604px" width="8" height="12" viewBox="0 0 8 12"><path d="M0.8 7.2L2 6.6L3.6 10.5L6.6 0.3" fill="none" stroke="#0000ff" stroke-width="0.95"/></svg>
<div style="left:377px;top:617px;width:1245px;height:1px;background:#c8c8c8"></div>
<div style="left:377px;top:618px;width:1244px;height:15px;background:#fff"></div>
<div style="left:365px;top:618px;width:11px;height:15px;background:#f0f0f0"></div>
<div style="left:365px;top:618px;width:11px;height:1px;background:#fff"></div>
<div style="left:365px;top:618px;width:1px;height:15px;background:#fff"></div>
<div style="left:364px;top:633px;width:13px;height:1px;background:#808080"></div>
<div class="t11 r" style="left:377px;top:621px;width:31px;color:#000">33</div>
<svg style="left:436px;top:620px" width="10" height="10" viewBox="0 0 10 10"><rect x="0.5" y="0.5" width="9" height="9" fill="#fff" stroke="#7a7a7a"/><path d="M2.5 5 L4.3 7.5 L7.6 2.5" fill="none" stroke="#3a55a8" stroke-width="1.4"/></svg>
<svg style="left:484px;top:618px" width="13" height="16" viewBox="0 0 13 16"><defs><linearGradient id="gd" x1="0" y1="0" x2="0.3" y2="1"><stop offset="0" stop-color="#10a8ff"/><stop offset="0.5" stop-color="#60ccff"/><stop offset="1" stop-color="#c8f4ff"/></linearGradient></defs><path d="M3.5 0.5 H11.5 V14.5 H0.5 V3.5 Z" fill="url(#gd)" stroke="#444"/><path d="M0.8 3.5 L3.5 0.8 L3.5 3.5 Z" fill="#c8faff" stroke="#333" stroke-width="0.8"/><path d="M2 5.5H8.8M2 7.5H8.8M2 9.5H8.8M2 11.5H8.8" stroke="#6a6a78" stroke-width="0.9"/></svg>
<div class="t11" style="left:580px;top:621px;color:#000">1-8</div>
<div class="t11 clip" style="left:656px;top:621px;width:314px;color:#000">Итого по главам 1 - 8</div>
<div class="t11 r" style="left:1012px;top:621px;width:78px;color:#000">1 513,20</div>
<div class="t11 r" style="left:1093px;top:621px;width:78px;color:#000">0,00</div>
<div class="t11 r" style="left:1174px;top:621px;width:78px;color:#000">0,00</div>
<div class="t11 r" style="left:1255px;top:621px;width:72px;color:#000">0,00</div>
<div class="t11 r" style="left:1330px;top:621px;width:98px;color:#000">1 513,20</div>
<div class="t11 r" style="left:1431px;top:621px;width:72px;color:#000">0,00</div>
<div style="left:377px;top:633px;width:1245px;height:1px;background:#c8c8c8"></div>
<div style="left:377px;top:634px;width:1244px;height:15px;background:#e0e0ff"></div>
<div style="left:365px;top:634px;width:11px;height:15px;background:#f0f0f0"></div>
<div style="left:365px;top:634px;width:11px;height:1px;background:#fff"></div>
<div style="left:365px;top:634px;width:1px;height:15px;background:#fff"></div>
<div style="left:364px;top:649px;width:13px;height:1px;background:#808080"></div>
<div class="t11 r" style="left:377px;top:637px;width:31px;color:#0000ff">34</div>
<svg style="left:483px;top:633px" width="16" height="16" viewBox="0 0 16 16"><defs><linearGradient id="gf" x1="0" y1="1" x2="1" y2="0"><stop offset="0" stop-color="#ffff20"/><stop offset="0.45" stop-color="#ffd800"/><stop offset="1" stop-color="#ff8000"/></linearGradient></defs><path d="M0.5 3.5V1.5H7L8 3.5" fill="#ffc820" stroke="#8a8aa0"/><rect x="0.5" y="3.5" width="15" height="11" fill="url(#gf)" stroke="#8a8aa0"/></svg>
<div class="t11" style="left:580px;top:637px;color:#0000ff">Гл. 9</div>
<div class="t11 clip" style="left:656px;top:637px;width:314px;color:#0000ff">Глава  9. Прочие работы и затраты.</div>
<div class="t11 r" style="left:971px;top:637px;width:37px;color:#0000ff">9</div>
<div class="t11 r" style="left:1012px;top:637px;width:78px;color:#0000ff">55,99</div>
<div class="t11 r" style="left:1093px;top:637px;width:78px;color:#0000ff">0,00</div>
<div class="t11 r" style="left:1174px;top:637px;width:78px;color:#0000ff">0,00</div>
<div class="t11 r" style="left:1255px;top:637px;width:72px;color:#0000ff">0,00</div>
<div class="t11 r" style="left:1330px;top:637px;width:98px;color:#0000ff">55,99</div>
<div class="t11 r" style="left:1431px;top:637px;width:72px;color:#0000ff">0,00</div>
<svg style="left:1527px;top:636px" width="8" height="12" viewBox="0 0 8 12"><path d="M0.8 7.2L2 6.6L3.6 10.5L6.6 0.3" fill="none" stroke="#0000ff" stroke-width="0.95"/></svg>
<div style="left:377px;top:649px;width:1245px;height:1px;background:#c8c8c8"></div>
<div style="left:377px;top:650px;width:1244px;height:15px;background:#fff"></div>
<div style="left:365px;top:650px;width:11px;height:15px;background:#f0f0f0"></div>
<div style="left:365px;top:650px;width:11px;height:1px;background:#fff"></div>
<div style="left:365px;top:650px;width:1px;height:15px;background:#fff"></div>
<div style="left:364px;top:665px;width:13px;height:1px;background:#808080"></div>
<div class="t11 r" style="left:377px;top:653px;width:31px;color:#000">35</div>
<svg style="left:436px;top:652px" width="10" height="10" viewBox="0 0 10 10"><rect x="0.5" y="0.5" width="9" height="9" fill="#fff" stroke="#7a7a7a"/><path d="M2.5 5 L4.3 7.5 L7.6 2.5" fill="none" stroke="#3a55a8" stroke-width="1.4"/></svg>
<svg style="left:484px;top:650px" width="13" height="16" viewBox="0 0 13 16"><defs><linearGradient id="gd" x1="0" y1="0" x2="0.3" y2="1"><stop offset="0" stop-color="#10a8ff"/><stop offset="0.5" stop-color="#60ccff"/><stop offset="1" stop-color="#c8f4ff"/></linearGradient></defs><path d="M3.5 0.5 H11.5 V14.5 H0.5 V3.5 Z" fill="url(#gd)" stroke="#444"/><path d="M0.8 3.5 L3.5 0.8 L3.5 3.5 Z" fill="#c8faff" stroke="#333" stroke-width="0.8"/><path d="M2 5.5H8.8M2 7.5H8.8M2 9.5H8.8M2 11.5H8.8" stroke="#6a6a78" stroke-width="0.9"/></svg>
<div class="t11 clip" style="left:515px;top:653px;width:62px;color:#000">325/пр Прил.</div>
<div class="t11" style="left:580px;top:653px;color:#000">Итог 3</div>
<div class="t11 clip" style="left:656px;top:653px;width:314px;color:#000">Дополнительные затраты в зимнее время; 3,7%</div>
<div class="t11 r" style="left:1012px;top:653px;width:78px;color:#000">55,99</div>
<div class="t11 r" style="left:1093px;top:653px;width:78px;color:#000">0,00</div>
<div class="t11 r" style="left:1174px;top:653px;width:78px;color:#000">0,00</div>
<div class="t11 r" style="left:1255px;top:653px;width:72px;color:#000">0,00</div>
<div class="t11 r" style="left:1330px;top:653px;width:98px;color:#000">55,99</div>
<div class="t11 r" style="left:1431px;top:653px;width:72px;color:#000">0,00</div>
<svg style="left:1527px;top:652px" width="8" height="12" viewBox="0 0 8 12"><path d="M0.8 7.2L2 6.6L3.6 10.5L6.6 0.3" fill="none" stroke="#ff0030" stroke-width="0.95"/></svg>
<div style="left:377px;top:665px;width:1245px;height:1px;background:#c8c8c8"></div>
<div style="left:377px;top:666px;width:1244px;height:15px;background:#fff"></div>
<div style="left:365px;top:666px;width:11px;height:15px;background:#f0f0f0"></div>
<div style="left:365px;top:666px;width:11px;height:1px;background:#fff"></div>
<div style="left:365px;top:666px;width:1px;height:15px;background:#fff"></div>
<div style="left:364px;top:681px;width:13px;height:1px;background:#808080"></div>
<svg style="left:368px;top:669px" width="6" height="10" viewBox="0 0 6 10"><path d="M0 0L6 5L0 10Z" fill="#000"/></svg>
<div class="t11 r" style="left:377px;top:669px;width:31px;color:#000">36</div>
<svg style="left:436px;top:668px" width="10" height="10" viewBox="0 0 10 10"><rect x="0.5" y="0.5" width="9" height="9" fill="#fff" stroke="#7a7a7a"/><path d="M2.5 5 L4.3 7.5 L7.6 2.5" fill="none" stroke="#3a55a8" stroke-width="1.4"/></svg>
<svg style="left:484px;top:666px" width="13" height="16" viewBox="0 0 13 16"><defs><linearGradient id="gd" x1="0" y1="0" x2="0.3" y2="1"><stop offset="0" stop-color="#10a8ff"/><stop offset="0.5" stop-color="#60ccff"/><stop offset="1" stop-color="#c8f4ff"/></linearGradient></defs><path d="M3.5 0.5 H11.5 V14.5 H0.5 V3.5 Z" fill="url(#gd)" stroke="#444"/><path d="M0.8 3.5 L3.5 0.8 L3.5 3.5 Z" fill="#c8faff" stroke="#333" stroke-width="0.8"/><path d="M2 5.5H8.8M2 7.5H8.8M2 9.5H8.8M2 11.5H8.8" stroke="#6a6a78" stroke-width="0.9"/></svg>
<div class="t11" style="left:580px;top:669px;color:#000">2.2</div>
<div style="left:653px;top:666px;width:318px;height:15px;background:#0078d7"></div>
<div class="t11 clip" style="left:656px;top:669px;width:313px;color:#fff">Затраты по перевозке работников к месту работы и обратно</div>
<div class="t11 r" style="left:1012px;top:669px;width:78px;color:#000">0,00</div>
<div class="t11 r" style="left:1093px;top:669px;width:78px;color:#000">0,00</div>
<div class="t11 r" style="left:1174px;top:669px;width:78px;color:#000">0,00</div>
<div class="t11 r" style="left:1255px;top:669px;width:72px;color:#000">0,00</div>
<div class="t11 r" style="left:1330px;top:669px;width:98px;color:#000">0,00</div>
<div class="t11 r" style="left:1431px;top:669px;width:72px;color:#000">0,00</div>
<svg style="left:1527px;top:668px" width="8" height="12" viewBox="0 0 8 12"><path d="M0.8 7.2L2 6.6L3.6 10.5L6.6 0.3" fill="none" stroke="#ff0030" stroke-width="0.95"/></svg>
<div style="left:377px;top:681px;width:1245px;height:1px;background:#c8c8c8"></div>
<div style="left:377px;top:682px;width:1244px;height:15px;background:#fff"></div>
<div style="left:365px;top:682px;width:11px;height:15px;background:#f0f0f0"></div>
<div style="left:365px;top:682px;width:11px;height:1px;background:#fff"></div>
<div style="left:365px;top:682px;width:1px;height:15px;background:#fff"></div>
<div style="left:364px;top:697px;width:13px;height:1px;background:#808080"></div>
<div class="t11 r" style="left:377px;top:685px;width:31px;color:#000">37</div>
<svg style="left:436px;top:684px" width="10" height="10" viewBox="0 0 10 10"><rect x="0.5" y="0.5" width="9" height="9" fill="#fff" stroke="#7a7a7a"/><path d="M2.5 5 L4.3 7.5 L7.6 2.5" fill="none" stroke="#3a55a8" stroke-width="1.4"/></svg>
<svg style="left:484px;top:682px" width="13" height="16" viewBox="0 0 13 16"><defs><linearGradient id="gd" x1="0" y1="0" x2="0.3" y2="1"><stop offset="0" stop-color="#10a8ff"/><stop offset="0.5" stop-color="#60ccff"/><stop offset="1" stop-color="#c8f4ff"/></linearGradient></defs><path d="M3.5 0.5 H11.5 V14.5 H0.5 V3.5 Z" fill="url(#gd)" stroke="#444"/><path d="M0.8 3.5 L3.5 0.8 L3.5 3.5 Z" fill="#c8faff" stroke="#333" stroke-width="0.8"/><path d="M2 5.5H8.8M2 7.5H8.8M2 9.5H8.8M2 11.5H8.8" stroke="#6a6a78" stroke-width="0.9"/></svg>
<div class="t11" style="left:580px;top:685px;color:#000">2.3</div>
<div class="t11 clip" style="left:656px;top:685px;width:314px;color:#000">Затраты, связанные с осуществлением работ вахтовым методом</div>
<div class="t11 r" style="left:1012px;top:685px;width:78px;color:#000">0,00</div>
<div class="t11 r" style="left:1093px;top:685px;width:78px;color:#000">0,00</div>
<div class="t11 r" style="left:1174px;top:685px;width:78px;color:#000">0,00</div>
<div class="t11 r" style="left:1255px;top:685px;width:72px;color:#000">0,00</div>
<div class="t11 r" style="left:1330px;top:685px;width:98px;color:#000">0,00</div>
<div class="t11 r" style="left:1431px;top:685px;width:72px;color:#000">0,00</div>
<svg style="left:1527px;top:684px" width="8" height="12" viewBox="0 0 8 12"><path d="M0.8 7.2L2 6.6L3.6 10.5L6.6 0.3" fill="none" stroke="#ff0030" stroke-width="0.95"/></svg>
<div style="left:377px;top:697px;width:1245px;height:1px;background:#c8c8c8"></div>
<div style="left:377px;top:698px;width:1244px;height:15px;background:#fff"></div>
<div style="left:365px;top:698px;width:11px;height:15px;background:#f0f0f0"></div>
<div style="left:365px;top:698px;width:11px;height:1px;background:#fff"></div>
<div style="left:365px;top:698px;width:1px;height:15px;background:#fff"></div>
<div style="left:364px;top:713px;width:13px;height:1px;background:#808080"></div>
<div class="t11 r" style="left:377px;top:701px;width:31px;color:#000">38</div>
<svg style="left:436px;top:700px" width="10" height="10" viewBox="0 0 10 10"><rect x="0.5" y="0.5" width="9" height="9" fill="#fff" stroke="#7a7a7a"/><path d="M2.5 5 L4.3 7.5 L7.6 2.5" fill="none" stroke="#3a55a8" stroke-width="1.4"/></svg>
<svg style="left:484px;top:698px" width="13" height="16" viewBox="0 0 13 16"><defs><linearGradient id="gd" x1="0" y1="0" x2="0.3" y2="1"><stop offset="0" stop-color="#10a8ff"/><stop offset="0.5" stop-color="#60ccff"/><stop offset="1" stop-color="#c8f4ff"/></linearGradient></defs><path d="M3.5 0.5 H11.5 V14.5 H0.5 V3.5 Z" fill="url(#gd)" stroke="#444"/><path d="M0.8 3.5 L3.5 0.8 L3.5 3.5 Z" fill="#c8faff" stroke="#333" stroke-width="0.8"/><path d="M2 5.5H8.8M2 7.5H8.8M2 9.5H8.8M2 11.5H8.8" stroke="#6a6a78" stroke-width="0.9"/></svg>
<div class="t11" style="left:580px;top:701px;color:#000">2.4</div>
<div class="t11 clip" style="left:656px;top:701px;width:314px;color:#000">Расходы, связанные со служебными командировками</div>
<div class="t11 r" style="left:1012px;top:701px;width:78px;color:#000">0,00</div>
<div class="t11 r" style="left:1093px;top:701px;width:78px;color:#000">0,00</div>
<div class="t11 r" style="left:1174px;top:701px;width:78px;color:#000">0,00</div>
<div class="t11 r" style="left:1255px;top:701px;width:72px;color:#000">0,00</div>
<div class="t11 r" style="left:1330px;top:701px;width:98px;color:#000">0,00</div>
<div class="t11 r" style="left:1431px;top:701px;width:72px;color:#000">0,00</div>
<svg style="left:1527px;top:700px" width="8" height="12" viewBox="0 0 8 12"><path d="M0.8 7.2L2 6.6L3.6 10.5L6.6 0.3" fill="none" stroke="#ff0030" stroke-width="0.95"/></svg>
<div style="left:377px;top:713px;width:1245px;height:1px;background:#c8c8c8"></div>
<div style="left:377px;top:714px;width:1244px;height:15px;background:#fff"></div>
<div style="left:365px;top:714px;width:11px;height:15px;background:#f0f0f0"></div>
<div style="left:365px;top:714px;width:11px;height:1px;background:#fff"></div>
<div style="left:365px;top:714px;width:1px;height:15px;background:#fff"></div>
<div style="left:364px;top:729px;width:13px;height:1px;background:#808080"></div>
<div class="t11 r" style="left:377px;top:717px;width:31px;color:#000">39</div>
<svg style="left:436px;top:716px" width="10" height="10" viewBox="0 0 10 10"><rect x="0.5" y="0.5" width="9" height="9" fill="#fff" stroke="#7a7a7a"/><path d="M2.5 5 L4.3 7.5 L7.6 2.5" fill="none" stroke="#3a55a8" stroke-width="1.4"/></svg>
<svg style="left:484px;top:714px" width="13" height="16" viewBox="0 0 13 16"><defs><linearGradient id="gd" x1="0" y1="0" x2="0.3" y2="1"><stop offset="0" stop-color="#10a8ff"/><stop offset="0.5" stop-color="#60ccff"/><stop offset="1" stop-color="#c8f4ff"/></linearGradient></defs><path d="M3.5 0.5 H11.5 V14.5 H0.5 V3.5 Z" fill="url(#gd)" stroke="#444"/><path d="M0.8 3.5 L3.5 0.8 L3.5 3.5 Z" fill="#c8faff" stroke="#333" stroke-width="0.8"/><path d="M2 5.5H8.8M2 7.5H8.8M2 9.5H8.8M2 11.5H8.8" stroke="#6a6a78" stroke-width="0.9"/></svg>
<div class="t11" style="left:580px;top:717px;color:#000">2.5</div>
<div class="t11 clip" style="left:656px;top:717px;width:314px;color:#000">Затраты по содержанию спасательных служб при</div>
<div class="t11 r" style="left:1012px;top:717px;width:78px;color:#000">0,00</div>
<div class="t11 r" style="left:1093px;top:717px;width:78px;color:#000">0,00</div>
<div class="t11 r" style="left:1174px;top:717px;width:78px;color:#000">0,00</div>
<div class="t11 r" style="left:1255px;top:717px;width:72px;color:#000">0,00</div>
<div class="t11 r" style="left:1330px;top:717px;width:98px;color:#000">0,00</div>
<div class="t11 r" style="left:1431px;top:717px;width:72px;color:#000">0,00</div>
<svg style="left:1527px;top:716px" width="8" height="12" viewBox="0 0 8 12"><path d="M0.8 7.2L2 6.6L3.6 10.5L6.6 0.3" fill="none" stroke="#ff0030" stroke-width="0.95"/></svg>
<div style="left:377px;top:729px;width:1245px;height:1px;background:#c8c8c8"></div>
<div style="left:377px;top:730px;width:1244px;height:15px;background:#fff"></div>
<div style="left:365px;top:730px;width:11px;height:15px;background:#f0f0f0"></div>
<div style="left:365px;top:730px;width:11px;height:1px;background:#fff"></div>
<div style="left:365px;top:730px;width:1px;height:15px;background:#fff"></div>
<div style="left:364px;top:745px;width:13px;height:1px;background:#808080"></div>
<div class="t11 r" style="left:377px;top:733px;width:31px;color:#000">40</div>
<svg style="left:436px;top:732px" width="10" height="10" viewBox="0 0 10 10"><rect x="0.5" y="0.5" width="9" height="9" fill="#fff" stroke="#7a7a7a"/><path d="M2.5 5 L4.3 7.5 L7.6 2.5" fill="none" stroke="#3a55a8" stroke-width="1.4"/></svg>
<svg style="left:484px;top:730px" width="13" height="16" viewBox="0 0 13 16"><defs><linearGradient id="gd" x1="0" y1="0" x2="0.3" y2="1"><stop offset="0" stop-color="#10a8ff"/><stop offset="0.5" stop-color="#60ccff"/><stop offset="1" stop-color="#c8f4ff"/></linearGradient></defs><path d="M3.5 0.5 H11.5 V14.5 H0.5 V3.5 Z" fill="url(#gd)" stroke="#444"/><path d="M0.8 3.5 L3.5 0.8 L3.5 3.5 Z" fill="#c8faff" stroke="#333" stroke-width="0.8"/><path d="M2 5.5H8.8M2 7.5H8.8M2 9.5H8.8M2 11.5H8.8" stroke="#6a6a78" stroke-width="0.9"/></svg>
<div class="t11" style="left:580px;top:733px;color:#000">2.6</div>
<div class="t11 clip" style="left:656px;top:733px;width:314px;color:#000">Затраты, связанные с проведением на территории</div>
<div class="t11 r" style="left:1012px;top:733px;width:78px;color:#000">0,00</div>
<div class="t11 r" style="left:1093px;top:733px;width:78px;color:#000">0,00</div>
<div class="t11 r" style="left:1174px;top:733px;width:78px;color:#000">0,00</div>
<div class="t11 r" style="left:1255px;top:733px;width:72px;color:#000">0,00</div>
<div class="t11 r" style="left:1330px;top:733px;width:98px;color:#000">0,00</div>
<div class="t11 r" style="left:1431px;top:733px;width:72px;color:#000">0,00</div>
<svg style="left:1527px;top:732px" width="8" height="12" viewBox="0 0 8 12"><path d="M0.8 7.2L2 6.6L3.6 10.5L6.6 0.3" fill="none" stroke="#ff0030" stroke-width="0.95"/></svg>
<div style="left:377px;top:745px;width:1245px;height:1px;background:#c8c8c8"></div>
<div style="left:377px;top:746px;width:1244px;height:15px;background:#fff"></div>
<div style="left:365px;top:746px;width:11px;height:15px;background:#f0f0f0"></div>
<div style="left:365px;top:746px;width:11px;height:1px;background:#fff"></div>
<div style="left:365px;top:746px;width:1px;height:15px;background:#fff"></div>
<div style="left:364px;top:761px;width:13px;height:1px;background:#808080"></div>
<div class="t11 r" style="left:377px;top:749px;width:31px;color:#000">41</div>
<svg style="left:436px;top:748px" width="10" height="10" viewBox="0 0 10 10"><rect x="0.5" y="0.5" width="9" height="9" fill="#fff" stroke="#7a7a7a"/><path d="M2.5 5 L4.3 7.5 L7.6 2.5" fill="none" stroke="#3a55a8" stroke-width="1.4"/></svg>
<svg style="left:484px;top:746px" width="13" height="16" viewBox="0 0 13 16"><defs><linearGradient id="gd" x1="0" y1="0" x2="0.3" y2="1"><stop offset="0" stop-color="#10a8ff"/><stop offset="0.5" stop-color="#60ccff"/><stop offset="1" stop-color="#c8f4ff"/></linearGradient></defs><path d="M3.5 0.5 H11.5 V14.5 H0.5 V3.5 Z" fill="url(#gd)" stroke="#444"/><path d="M0.8 3.5 L3.5 0.8 L3.5 3.5 Z" fill="#c8faff" stroke="#333" stroke-width="0.8"/><path d="M2 5.5H8.8M2 7.5H8.8M2 9.5H8.8M2 11.5H8.8" stroke="#6a6a78" stroke-width="0.9"/></svg>
<div class="t11" style="left:580px;top:749px;color:#000">2.7</div>
<div class="t11 clip" style="left:656px;top:749px;width:314px;color:#000">Затраты на проведение пусконаладочных работ вхолостую</div>
<div class="t11 r" style="left:1012px;top:749px;width:78px;color:#000">0,00</div>
<div class="t11 r" style="left:1093px;top:749px;width:78px;color:#000">0,00</div>
<div class="t11 r" style="left:1174px;top:749px;width:78px;color:#000">0,00</div>
<div class="t11 r" style="left:1255px;top:749px;width:72px;color:#000">0,00</div>
<div class="t11 r" style="left:1330px;top:749px;width:98px;color:#000">0,00</div>
<div class="t11 r" style="left:1431px;top:749px;width:72px;color:#000">0,00</div>
<svg style="left:1527px;top:748px" width="8" height="12" viewBox="0 0 8 12"><path d="M0.8 7.2L2 6.6L3.6 10.5L6.6 0.3" fill="none" stroke="#ff0030" stroke-width="0.95"/></svg>
<div style="left:377px;top:761px;width:1245px;height:1px;background:#c8c8c8"></div>
<div style="left:377px;top:762px;width:1244px;height:15px;background:#fff"></div>
<div style="left:365px;top:762px;width:11px;height:15px;background:#f0f0f0"></div>
<div style="left:365px;top:762px;width:11px;height:1px;background:#fff"></div>
<div style="left:365px;top:762px;width:1px;height:15px;background:#fff"></div>
<div style="left:364px;top:777px;width:13px;height:1px;background:#808080"></div>
<div class="t11 r" style="left:377px;top:765px;width:31px;color:#000">42</div>
<svg style="left:436px;top:764px" width="10" height="10" viewBox="0 0 10 10"><rect x="0.5" y="0.5" width="9" height="9" fill="#fff" stroke="#7a7a7a"/><path d="M2.5 5 L4.3 7.5 L7.6 2.5" fill="none" stroke="#3a55a8" stroke-width="1.4"/></svg>
<svg style="left:484px;top:762px" width="13" height="16" viewBox="0 0 13 16"><defs><linearGradient id="gd" x1="0" y1="0" x2="0.3" y2="1"><stop offset="0" stop-color="#10a8ff"/><stop offset="0.5" stop-color="#60ccff"/><stop offset="1" stop-color="#c8f4ff"/></linearGradient></defs><path d="M3.5 0.5 H11.5 V14.5 H0.5 V3.5 Z" fill="url(#gd)" stroke="#444"/><path d="M0.8 3.5 L3.5 0.8 L3.5 3.5 Z" fill="#c8faff" stroke="#333" stroke-width="0.8"/><path d="M2 5.5H8.8M2 7.5H8.8M2 9.5H8.8M2 11.5H8.8" stroke="#6a6a78" stroke-width="0.9"/></svg>
<div class="t11" style="left:580px;top:765px;color:#000">2.8</div>
<div class="t11 clip" style="left:656px;top:765px;width:314px;color:#000">Затраты на содержание автомобильных дорог и</div>
<div class="t11 r" style="left:1012px;top:765px;width:78px;color:#000">0,00</div>
<div class="t11 r" style="left:1093px;top:765px;width:78px;color:#000">0,00</div>
<div class="t11 r" style="left:1174px;top:765px;width:78px;color:#000">0,00</div>
<div class="t11 r" style="left:1255px;top:765px;width:72px;color:#000">0,00</div>
<div class="t11 r" style="left:1330px;top:765px;width:98px;color:#000">0,00</div>
<div class="t11 r" style="left:1431px;top:765px;width:72px;color:#000">0,00</div>
<svg style="left:1527px;top:764px" width="8" height="12" viewBox="0 0 8 12"><path d="M0.8 7.2L2 6.6L3.6 10.5L6.6 0.3" fill="none" stroke="#ff0030" stroke-width="0.95"/></svg>
<div style="left:377px;top:777px;width:1245px;height:1px;background:#c8c8c8"></div>
<div style="left:377px;top:778px;width:1244px;height:15px;background:#fff"></div>
<div style="left:365px;top:778px;width:11px;height:15px;background:#f0f0f0"></div>
<div style="left:365px;top:778px;width:11px;height:1px;background:#fff"></div>
<div style="left:365px;top:778px;width:1px;height:15px;background:#fff"></div>
<div style="left:364px;top:793px;width:13px;height:1px;background:#808080"></div>
<div class="t11 r" style="left:377px;top:781px;width:31px;color:#000">43</div>
<svg style="left:436px;top:780px" width="10" height="10" viewBox="0 0 10 10"><rect x="0.5" y="0.5" width="9" height="9" fill="#fff" stroke="#7a7a7a"/><path d="M2.5 5 L4.3 7.5 L7.6 2.5" fill="none" stroke="#3a55a8" stroke-width="1.4"/></svg>
<svg style="left:484px;top:778px" width="13" height="16" viewBox="0 0 13 16"><defs><linearGradient id="gd" x1="0" y1="0" x2="0.3" y2="1"><stop offset="0" stop-color="#10a8ff"/><stop offset="0.5" stop-color="#60ccff"/><stop offset="1" stop-color="#c8f4ff"/></linearGradient></defs><path d="M3.5 0.5 H11.5 V14.5 H0.5 V3.5 Z" fill="url(#gd)" stroke="#444"/><path d="M0.8 3.5 L3.5 0.8 L3.5 3.5 Z" fill="#c8faff" stroke="#333" stroke-width="0.8"/><path d="M2 5.5H8.8M2 7.5H8.8M2 9.5H8.8M2 11.5H8.8" stroke="#6a6a78" stroke-width="0.9"/></svg>
<div class="t11" style="left:580px;top:781px;color:#000">2.9</div>
<div class="t11 clip" style="left:656px;top:781px;width:314px;color:#000">Затраты по подключению (технологическому присоединению)</div>
<div class="t11 r" style="left:1012px;top:781px;width:78px;color:#000">0,00</div>
<div class="t11 r" style="left:1093px;top:781px;width:78px;color:#000">0,00</div>
<div class="t11 r" style="left:1174px;top:781px;width:78px;color:#000">0,00</div>
<div class="t11 r" style="left:1255px;top:781px;width:72px;color:#000">0,00</div>
<div class="t11 r" style="left:1330px;top:781px;width:98px;color:#000">0,00</div>
<div class="t11 r" style="left:1431px;top:781px;width:72px;color:#000">0,00</div>
<svg style="left:1527px;top:780px" width="8" height="12" viewBox="0 0 8 12"><path d="M0.8 7.2L2 6.6L3.6 10.5L6.6 0.3" fill="none" stroke="#ff0030" stroke-width="0.95"/></svg>
<div style="left:377px;top:793px;width:1245px;height:1px;background:#c8c8c8"></div>
<div style="left:377px;top:794px;width:1244px;height:15px;background:#fff"></div>
<div style="left:365px;top:794px;width:11px;height:15px;background:#f0f0f0"></div>
<div style="left:365px;top:794px;width:11px;height:1px;background:#fff"></div>
<div style="left:365px;top:794px;width:1px;height:15px;background:#fff"></div>
<div style="left:364px;top:809px;width:13px;height:1px;background:#808080"></div>
<div class="t11 r" style="left:377px;top:797px;width:31px;color:#000">44</div>
<svg style="left:436px;top:796px" width="10" height="10" viewBox="0 0 10 10"><rect x="0.5" y="0.5" width="9" height="9" fill="#fff" stroke="#7a7a7a"/><path d="M2.5 5 L4.3 7.5 L7.6 2.5" fill="none" stroke="#3a55a8" stroke-width="1.4"/></svg>
<svg style="left:484px;top:794px" width="13" height="16" viewBox="0 0 13 16"><defs><linearGradient id="gd" x1="0" y1="0" x2="0.3" y2="1"><stop offset="0" stop-color="#10a8ff"/><stop offset="0.5" stop-color="#60ccff"/><stop offset="1" stop-color="#c8f4ff"/></linearGradient></defs><path d="M3.5 0.5 H11.5 V14.5 H0.5 V3.5 Z" fill="url(#gd)" stroke="#444"/><path d="M0.8 3.5 L3.5 0.8 L3.5 3.5 Z" fill="#c8faff" stroke="#333" stroke-width="0.8"/><path d="M2 5.5H8.8M2 7.5H8.8M2 9.5H8.8M2 11.5H8.8" stroke="#6a6a78" stroke-width="0.9"/></svg>
<div class="t11" style="left:580px;top:797px;color:#000">2.10</div>
<div class="t11 clip" style="left:656px;top:797px;width:314px;color:#000">Затраты по размещению, утилизации и (или) обезвреживанию</div>
<div class="t11 r" style="left:1012px;top:797px;width:78px;color:#000">0,00</div>
<div class="t11 r" style="left:1093px;top:797px;width:78px;color:#000">0,00</div>
<div class="t11 r" style="left:1174px;top:797px;width:78px;color:#000">0,00</div>
<div class="t11 r" style="left:1255px;top:797px;width:72px;color:#000">0,00</div>
<div class="t11 r" style="left:1330px;top:797px;width:98px;color:#000">0,00</div>
<div class="t11 r" style="left:1431px;top:797px;width:72px;color:#000">0,00</div>
<svg style="left:1527px;top:796px" width="8" height="12" viewBox="0 0 8 12"><path d="M0.8 7.2L2 6.6L3.6 10.5L6.6 0.3" fill="none" stroke="#ff0030" stroke-width="0.95"/></svg>
<div style="left:377px;top:809px;width:1245px;height:1px;background:#c8c8c8"></div>
<div style="left:377px;top:810px;width:1244px;height:15px;background:#fff"></div>
<div style="left:365px;top:810px;width:11px;height:15px;background:#f0f0f0"></div>
<div style="left:365px;top:810px;width:11px;height:1px;background:#fff"></div>
<div style="left:365px;top:810px;width:1px;height:15px;background:#fff"></div>
<div style="left:364px;top:825px;width:13px;height:1px;background:#808080"></div>
<div class="t11 r" style="left:377px;top:813px;width:31px;color:#000">45</div>
<svg style="left:436px;top:812px" width="10" height="10" viewBox="0 0 10 10"><rect x="0.5" y="0.5" width="9" height="9" fill="#fff" stroke="#7a7a7a"/><path d="M2.5 5 L4.3 7.5 L7.6 2.5" fill="none" stroke="#3a55a8" stroke-width="1.4"/></svg>
<svg style="left:484px;top:810px" width="13" height="16" viewBox="0 0 13 16"><defs><linearGradient id="gd" x1="0" y1="0" x2="0.3" y2="1"><stop offset="0" stop-color="#10a8ff"/><stop offset="0.5" stop-color="#60ccff"/><stop offset="1" stop-color="#c8f4ff"/></linearGradient></defs><path d="M3.5 0.5 H11.5 V14.5 H0.5 V3.5 Z" fill="url(#gd)" stroke="#444"/><path d="M0.8 3.5 L3.5 0.8 L3.5 3.5 Z" fill="#c8faff" stroke="#333" stroke-width="0.8"/><path d="M2 5.5H8.8M2 7.5H8.8M2 9.5H8.8M2 11.5H8.8" stroke="#6a6a78" stroke-width="0.9"/></svg>
<div class="t11" style="left:580px;top:813px;color:#000">2.11</div>
<div class="t11 clip" style="left:656px;top:813px;width:314px;color:#000">Плата за негативное воздействие на окружающую среду</div>
<div class="t11 r" style="left:1012px;top:813px;width:78px;color:#000">0,00</div>
<div class="t11 r" style="left:1093px;top:813px;width:78px;color:#000">0,00</div>
<div class="t11 r" style="left:1174px;top:813px;width:78px;color:#000">0,00</div>
<div class="t11 r" style="left:1255px;top:813px;width:72px;color:#000">0,00</div>
<div class="t11 r" style="left:1330px;top:813px;width:98px;color:#000">0,00</div>
<div class="t11 r" style="left:1431px;top:813px;width:72px;color:#000">0,00</div>
<svg style="left:1527px;top:812px" width="8" height="12" viewBox="0 0 8 12"><path d="M0.8 7.2L2 6.6L3.6 10.5L6.6 0.3" fill="none" stroke="#ff0030" stroke-width="0.95"/></svg>
<div style="left:377px;top:825px;width:1245px;height:1px;background:#c8c8c8"></div>
<div style="left:377px;top:826px;width:1244px;height:15px;background:#fff"></div>
<div style="left:365px;top:826px;width:11px;height:15px;background:#f0f0f0"></div>
<div style="left:365px;top:826px;width:11px;height:1px;background:#fff"></div>
<div style="left:365px;top:826px;width:1px;height:15px;background:#fff"></div>
<div style="left:364px;top:841px;width:13px;height:1px;background:#808080"></div>
<div class="t11 r" style="left:377px;top:829px;width:31px;color:#000">46</div>
<svg style="left:436px;top:828px" width="10" height="10" viewBox="0 0 10 10"><rect x="0.5" y="0.5" width="9" height="9" fill="#fff" stroke="#7a7a7a"/><path d="M2.5 5 L4.3 7.5 L7.6 2.5" fill="none" stroke="#3a55a8" stroke-width="1.4"/></svg>
<svg style="left:484px;top:826px" width="13" height="16" viewBox="0 0 13 16"><defs><linearGradient id="gd" x1="0" y1="0" x2="0.3" y2="1"><stop offset="0" stop-color="#10a8ff"/><stop offset="0.5" stop-color="#60ccff"/><stop offset="1" stop-color="#c8f4ff"/></linearGradient></defs><path d="M3.5 0.5 H11.5 V14.5 H0.5 V3.5 Z" fill="url(#gd)" stroke="#444"/><path d="M0.8 3.5 L3.5 0.8 L3.5 3.5 Z" fill="#c8faff" stroke="#333" stroke-width="0.8"/><path d="M2 5.5H8.8M2 7.5H8.8M2 9.5H8.8M2 11.5H8.8" stroke="#6a6a78" stroke-width="0.9"/></svg>
<div class="t11" style="left:580px;top:829px;color:#000">2.12</div>
<div class="t11 clip" style="left:656px;top:829px;width:314px;color:#000">Компенсация расходов предприятиям железнодорожного</div>
<div class="t11 r" style="left:1012px;top:829px;width:78px;color:#000">0,00</div>
<div class="t11 r" style="left:1093px;top:829px;width:78px;color:#000">0,00</div>
<div class="t11 r" style="left:1174px;top:829px;width:78px;color:#000">0,00</div>
<div class="t11 r" style="left:1255px;top:829px;width:72px;color:#000">0,00</div>
<div class="t11 r" style="left:1330px;top:829px;width:98px;color:#000">0,00</div>
<div class="t11 r" style="left:1431px;top:829px;width:72px;color:#000">0,00</div>
<svg style="left:1527px;top:828px" width="8" height="12" viewBox="0 0 8 12"><path d="M0.8 7.2L2 6.6L3.6 10.5L6.6 0.3" fill="none" stroke="#ff0030" stroke-width="0.95"/></svg>
<div style="left:377px;top:841px;width:1245px;height:1px;background:#c8c8c8"></div>
<div style="left:377px;top:842px;width:1244px;height:15px;background:#fff"></div>
<div style="left:365px;top:842px;width:11px;height:15px;background:#f0f0f0"></div>
<div style="left:365px;top:842px;width:11px;height:1px;background:#fff"></div>
<div style="left:365px;top:842px;width:1px;height:15px;background:#fff"></div>
<div style="left:364px;top:857px;width:13px;height:1px;background:#808080"></div>
<div class="t11 r" style="left:377px;top:845px;width:31px;color:#000">47</div>
<svg style="left:436px;top:844px" width="10" height="10" viewBox="0 0 10 10"><rect x="0.5" y="0.5" width="9" height="9" fill="#fff" stroke="#7a7a7a"/><path d="M2.5 5 L4.3 7.5 L7.6 2.5" fill="none" stroke="#3a55a8" stroke-width="1.4"/></svg>
<svg style="left:484px;top:842px" width="13" height="16" viewBox="0 0 13 16"><defs><linearGradient id="gd" x1="0" y1="0" x2="0.3" y2="1"><stop offset="0" stop-color="#10a8ff"/><stop offset="0.5" stop-color="#60ccff"/><stop offset="1" stop-color="#c8f4ff"/></linearGradient></defs><path d="M3.5 0.5 H11.5 V14.5 H0.5 V3.5 Z" fill="url(#gd)" stroke="#444"/><path d="M0.8 3.5 L3.5 0.8 L3.5 3.5 Z" fill="#c8faff" stroke="#333" stroke-width="0.8"/><path d="M2 5.5H8.8M2 7.5H8.8M2 9.5H8.8M2 11.5H8.8" stroke="#6a6a78" stroke-width="0.9"/></svg>
<div class="t11" style="left:580px;top:845px;color:#000">2.13</div>
<div class="t11 clip" style="left:656px;top:845px;width:314px;color:#000">Затраты, связанные с перевозкой опасных, тяжеловесных</div>
<div class="t11 r" style="left:1012px;top:845px;width:78px;color:#000">0,00</div>
<div class="t11 r" style="left:1093px;top:845px;width:78px;color:#000">0,00</div>
<div class="t11 r" style="left:1174px;top:845px;width:78px;color:#000">0,00</div>
<div class="t11 r" style="left:1255px;top:845px;width:72px;color:#000">0,00</div>
<div class="t11 r" style="left:1330px;top:845px;width:98px;color:#000">0,00</div>
<div class="t11 r" style="left:1431px;top:845px;width:72px;color:#000">0,00</div>
<svg style="left:1527px;top:844px" width="8" height="12" viewBox="0 0 8 12"><path d="M0.8 7.2L2 6.6L3.6 10.5L6.6 0.3" fill="none" stroke="#ff0030" stroke-width="0.95"/></svg>
<div style="left:377px;top:857px;width:1245px;height:1px;background:#c8c8c8"></div>
<div style="left:377px;top:858px;width:1244px;height:15px;background:#fff"></div>
<div style="left:365px;top:858px;width:11px;height:15px;background:#f0f0f0"></div>
<div style="left:365px;top:858px;width:11px;height:1px;background:#fff"></div>
<div style="left:365px;top:858px;width:1px;height:15px;background:#fff"></div>
<div style="left:364px;top:873px;width:13px;height:1px;background:#808080"></div>
<div class="t11 r" style="left:377px;top:861px;width:31px;color:#000">48</div>
<svg style="left:436px;top:860px" width="10" height="10" viewBox="0 0 10 10"><rect x="0.5" y="0.5" width="9" height="9" fill="#fff" stroke="#7a7a7a"/><path d="M2.5 5 L4.3 7.5 L7.6 2.5" fill="none" stroke="#3a55a8" stroke-width="1.4"/></svg>
<svg style="left:484px;top:858px" width="13" height="16" viewBox="0 0 13 16"><defs><linearGradient id="gd" x1="0" y1="0" x2="0.3" y2="1"><stop offset="0" stop-color="#10a8ff"/><stop offset="0.5" stop-color="#60ccff"/><stop offset="1" stop-color="#c8f4ff"/></linearGradient></defs><path d="M3.5 0.5 H11.5 V14.5 H0.5 V3.5 Z" fill="url(#gd)" stroke="#444"/><path d="M0.8 3.5 L3.5 0.8 L3.5 3.5 Z" fill="#c8faff" stroke="#333" stroke-width="0.8"/><path d="M2 5.5H8.8M2 7.5H8.8M2 9.5H8.8M2 11.5H8.8" stroke="#6a6a78" stroke-width="0.9"/></svg>
<div class="t11" style="left:580px;top:861px;color:#000">2.14</div>
<div class="t11 clip" style="left:656px;top:861px;width:314px;color:#000">Затраты, связанные с арендой и содержанием временных</div>
<div class="t11 r" style="left:1012px;top:861px;width:78px;color:#000">0,00</div>
<div class="t11 r" style="left:1093px;top:861px;width:78px;color:#000">0,00</div>
<div class="t11 r" style="left:1174px;top:861px;width:78px;color:#000">0,00</div>
<div class="t11 r" style="left:1255px;top:861px;width:72px;color:#000">0,00</div>
<div class="t11 r" style="left:1330px;top:861px;width:98px;color:#000">0,00</div>
<div class="t11 r" style="left:1431px;top:861px;width:72px;color:#000">0,00</div>
<svg style="left:1527px;top:860px" width="8" height="12" viewBox="0 0 8 12"><path d="M0.8 7.2L2 6.6L3.6 10.5L6.6 0.3" fill="none" stroke="#ff0030" stroke-width="0.95"/></svg>
<div style="left:377px;top:873px;width:1245px;height:1px;background:#c8c8c8"></div>
<div style="left:377px;top:874px;width:1244px;height:15px;background:#fff"></div>
<div style="left:365px;top:874px;width:11px;height:15px;background:#f0f0f0"></div>
<div style="left:365px;top:874px;width:11px;height:1px;background:#fff"></div>
<div style="left:365px;top:874px;width:1px;height:15px;background:#fff"></div>
<div style="left:364px;top:889px;width:13px;height:1px;background:#808080"></div>
<div class="t11 r" style="left:377px;top:877px;width:31px;color:#000">49</div>
<svg style="left:436px;top:876px" width="10" height="10" viewBox="0 0 10 10"><rect x="0.5" y="0.5" width="9" height="9" fill="#fff" stroke="#7a7a7a"/><path d="M2.5 5 L4.3 7.5 L7.6 2.5" fill="none" stroke="#3a55a8" stroke-width="1.4"/></svg>
<svg style="left:484px;top:874px" width="13" height="16" viewBox="0 0 13 16"><defs><linearGradient id="gd" x1="0" y1="0" x2="0.3" y2="1"><stop offset="0" stop-color="#10a8ff"/><stop offset="0.5" stop-color="#60ccff"/><stop offset="1" stop-color="#c8f4ff"/></linearGradient></defs><path d="M3.5 0.5 H11.5 V14.5 H0.5 V3.5 Z" fill="url(#gd)" stroke="#444"/><path d="M0.8 3.5 L3.5 0.8 L3.5 3.5 Z" fill="#c8faff" stroke="#333" stroke-width="0.8"/><path d="M2 5.5H8.8M2 7.5H8.8M2 9.5H8.8M2 11.5H8.8" stroke="#6a6a78" stroke-width="0.9"/></svg>
<div class="t11" style="left:580px;top:877px;color:#000">2.15</div>
<div class="t11 clip" style="left:656px;top:877px;width:314px;color:#000">Затраты, связанные с перебазированием подрядных</div>
<div class="t11 r" style="left:1012px;top:877px;width:78px;color:#000">0,00</div>
<div class="t11 r" style="left:1093px;top:877px;width:78px;color:#000">0,00</div>
<div class="t11 r" style="left:1174px;top:877px;width:78px;color:#000">0,00</div>
<div class="t11 r" style="left:1255px;top:877px;width:72px;color:#000">0,00</div>
<div class="t11 r" style="left:1330px;top:877px;width:98px;color:#000">0,00</div>
<div class="t11 r" style="left:1431px;top:877px;width:72px;color:#000">0,00</div>
<svg style="left:1527px;top:876px" width="8" height="12" viewBox="0 0 8 12"><path d="M0.8 7.2L2 6.6L3.6 10.5L6.6 0.3" fill="none" stroke="#ff0030" stroke-width="0.95"/></svg>
<div style="left:377px;top:889px;width:1245px;height:1px;background:#c8c8c8"></div>
<div style="left:377px;top:890px;width:1244px;height:15px;background:#fff"></div>
<div style="left:365px;top:890px;width:11px;height:15px;background:#f0f0f0"></div>
<div style="left:365px;top:890px;width:11px;height:1px;background:#fff"></div>
<div style="left:365px;top:890px;width:1px;height:15px;background:#fff"></div>
<div style="left:364px;top:905px;width:13px;height:1px;background:#808080"></div>
<div class="t11 r" style="left:377px;top:893px;width:31px;color:#000">50</div>
<svg style="left:436px;top:892px" width="10" height="10" viewBox="0 0 10 10"><rect x="0.5" y="0.5" width="9" height="9" fill="#fff" stroke="#7a7a7a"/><path d="M2.5 5 L4.3 7.5 L7.6 2.5" fill="none" stroke="#3a55a8" stroke-width="1.4"/></svg>
<svg style="left:484px;top:890px" width="13" height="16" viewBox="0 0 13 16"><defs><linearGradient id="gd" x1="0" y1="0" x2="0.3" y2="1"><stop offset="0" stop-color="#10a8ff"/><stop offset="0.5" stop-color="#60ccff"/><stop offset="1" stop-color="#c8f4ff"/></linearGradient></defs><path d="M3.5 0.5 H11.5 V14.5 H0.5 V3.5 Z" fill="url(#gd)" stroke="#444"/><path d="M0.8 3.5 L3.5 0.8 L3.5 3.5 Z" fill="#c8faff" stroke="#333" stroke-width="0.8"/><path d="M2 5.5H8.8M2 7.5H8.8M2 9.5H8.8M2 11.5H8.8" stroke="#6a6a78" stroke-width="0.9"/></svg>
<div class="t11" style="left:580px;top:893px;color:#000">2.16</div>
<div class="t11 clip" style="left:656px;top:893px;width:314px;color:#000">Затраты, связанные с использованием студенческих</div>
<div class="t11 r" style="left:1012px;top:893px;width:78px;color:#000">0,00</div>
<div class="t11 r" style="left:1093px;top:893px;width:78px;color:#000">0,00</div>
<div class="t11 r" style="left:1174px;top:893px;width:78px;color:#000">0,00</div>
<div class="t11 r" style="left:1255px;top:893px;width:72px;color:#000">0,00</div>
<div class="t11 r" style="left:1330px;top:893px;width:98px;color:#000">0,00</div>
<div class="t11 r" style="left:1431px;top:893px;width:72px;color:#000">0,00</div>
<svg style="left:1527px;top:892px" width="8" height="12" viewBox="0 0 8 12"><path d="M0.8 7.2L2 6.6L3.6 10.5L6.6 0.3" fill="none" stroke="#ff0030" stroke-width="0.95"/></svg>
<div style="left:377px;top:905px;width:1245px;height:1px;background:#c8c8c8"></div>
<div style="left:377px;top:906px;width:1244px;height:15px;background:#fff"></div>
<div style="left:365px;top:906px;width:11px;height:15px;background:#f0f0f0"></div>
<div style="left:365px;top:906px;width:11px;height:1px;background:#fff"></div>
<div style="left:365px;top:906px;width:1px;height:15px;background:#fff"></div>
<div style="left:364px;top:921px;width:13px;height:1px;background:#808080"></div>
<div class="t11 r" style="left:377px;top:909px;width:31px;color:#000">51</div>
<svg style="left:436px;top:908px" width="10" height="10" viewBox="0 0 10 10"><rect x="0.5" y="0.5" width="9" height="9" fill="#fff" stroke="#7a7a7a"/><path d="M2.5 5 L4.3 7.5 L7.6 2.5" fill="none" stroke="#3a55a8" stroke-width="1.4"/></svg>
<svg style="left:484px;top:906px" width="13" height="16" viewBox="0 0 13 16"><defs><linearGradient id="gd" x1="0" y1="0" x2="0.3" y2="1"><stop offset="0" stop-color="#10a8ff"/><stop offset="0.5" stop-color="#60ccff"/><stop offset="1" stop-color="#c8f4ff"/></linearGradient></defs><path d="M3.5 0.5 H11.5 V14.5 H0.5 V3.5 Z" fill="url(#gd)" stroke="#444"/><path d="M0.8 3.5 L3.5 0.8 L3.5 3.5 Z" fill="#c8faff" stroke="#333" stroke-width="0.8"/><path d="M2 5.5H8.8M2 7.5H8.8M2 9.5H8.8M2 11.5H8.8" stroke="#6a6a78" stroke-width="0.9"/></svg>
<div class="t11" style="left:580px;top:909px;color:#000">2.17</div>
<div class="t11 clip" style="left:656px;top:909px;width:314px;color:#000">Затраты, связанные с предоставлением независимой</div>
<div class="t11 r" style="left:1012px;top:909px;width:78px;color:#000">0,00</div>
<div class="t11 r" style="left:1093px;top:909px;width:78px;color:#000">0,00</div>
<div class="t11 r" style="left:1174px;top:909px;width:78px;color:#000">0,00</div>
<div class="t11 r" style="left:1255px;top:909px;width:72px;color:#000">0,00</div>
<div class="t11 r" style="left:1330px;top:909px;width:98px;color:#000">0,00</div>
<div class="t11 r" style="left:1431px;top:909px;width:72px;color:#000">0,00</div>
<svg style="left:1527px;top:908px" width="8" height="12" viewBox="0 0 8 12"><path d="M0.8 7.2L2 6.6L3.6 10.5L6.6 0.3" fill="none" stroke="#ff0030" stroke-width="0.95"/></svg>
<div class="t11" style="left:1559px;top:909px;color:#000">НПР</div>
<div style="left:377px;top:921px;width:1245px;height:1px;background:#c8c8c8"></div>
<div style="left:377px;top:922px;width:1244px;height:15px;background:#fff"></div>
<div style="left:365px;top:922px;width:11px;height:15px;background:#f0f0f0"></div>
<div style="left:365px;top:922px;width:11px;height:1px;background:#fff"></div>
<div style="left:365px;top:922px;width:1px;height:15px;background:#fff"></div>
<div style="left:364px;top:937px;width:13px;height:1px;background:#808080"></div>
<div class="t11 r" style="left:377px;top:925px;width:31px;color:#000">52</div>
<svg style="left:436px;top:924px" width="10" height="10" viewBox="0 0 10 10"><rect x="0.5" y="0.5" width="9" height="9" fill="#fff" stroke="#7a7a7a"/><path d="M2.5 5 L4.3 7.5 L7.6 2.5" fill="none" stroke="#3a55a8" stroke-width="1.4"/></svg>
<svg style="left:484px;top:922px" width="13" height="16" viewBox="0 0 13 16"><defs><linearGradient id="gd" x1="0" y1="0" x2="0.3" y2="1"><stop offset="0" stop-color="#10a8ff"/><stop offset="0.5" stop-color="#60ccff"/><stop offset="1" stop-color="#c8f4ff"/></linearGradient></defs><path d="M3.5 0.5 H11.5 V14.5 H0.5 V3.5 Z" fill="url(#gd)" stroke="#444"/><path d="M0.8 3.5 L3.5 0.8 L3.5 3.5 Z" fill="#c8faff" stroke="#333" stroke-width="0.8"/><path d="M2 5.5H8.8M2 7.5H8.8M2 9.5H8.8M2 11.5H8.8" stroke="#6a6a78" stroke-width="0.9"/></svg>
<div class="t11" style="left:580px;top:925px;color:#000">2.18</div>
<div class="t11 clip" style="left:656px;top:925px;width:314px;color:#000">Затраты на научно-техническое сопровождение строительства</div>
<div class="t11 r" style="left:1012px;top:925px;width:78px;color:#000">0,00</div>
<div class="t11 r" style="left:1093px;top:925px;width:78px;color:#000">0,00</div>
<div class="t11 r" style="left:1174px;top:925px;width:78px;color:#000">0,00</div>
<div class="t11 r" style="left:1255px;top:925px;width:72px;color:#000">0,00</div>
<div class="t11 r" style="left:1330px;top:925px;width:98px;color:#000">0,00</div>
<div class="t11 r" style="left:1431px;top:925px;width:72px;color:#000">0,00</div>
<svg style="left:1527px;top:924px" width="8" height="12" viewBox="0 0 8 12"><path d="M0.8 7.2L2 6.6L3.6 10.5L6.6 0.3" fill="none" stroke="#ff0030" stroke-width="0.95"/></svg>
<div style="left:377px;top:937px;width:1245px;height:1px;background:#c8c8c8"></div>
<div style="left:377px;top:938px;width:1244px;height:15px;background:#fff"></div>
<div style="left:365px;top:938px;width:11px;height:15px;background:#f0f0f0"></div>
<div style="left:365px;top:938px;width:11px;height:1px;background:#fff"></div>
<div style="left:365px;top:938px;width:1px;height:15px;background:#fff"></div>
<div style="left:364px;top:953px;width:13px;height:1px;background:#808080"></div>
<div class="t11 r" style="left:377px;top:941px;width:31px;color:#000">53</div>
<svg style="left:436px;top:940px" width="10" height="10" viewBox="0 0 10 10"><rect x="0.5" y="0.5" width="9" height="9" fill="#fff" stroke="#7a7a7a"/><path d="M2.5 5 L4.3 7.5 L7.6 2.5" fill="none" stroke="#3a55a8" stroke-width="1.4"/></svg>
<svg style="left:484px;top:938px" width="13" height="16" viewBox="0 0 13 16"><defs><linearGradient id="gd" x1="0" y1="0" x2="0.3" y2="1"><stop offset="0" stop-color="#10a8ff"/><stop offset="0.5" stop-color="#60ccff"/><stop offset="1" stop-color="#c8f4ff"/></linearGradient></defs><path d="M3.5 0.5 H11.5 V14.5 H0.5 V3.5 Z" fill="url(#gd)" stroke="#444"/><path d="M0.8 3.5 L3.5 0.8 L3.5 3.5 Z" fill="#c8faff" stroke="#333" stroke-width="0.8"/><path d="M2 5.5H8.8M2 7.5H8.8M2 9.5H8.8M2 11.5H8.8" stroke="#6a6a78" stroke-width="0.9"/></svg>
<div class="t11" style="left:580px;top:941px;color:#000">2.19</div>
<div class="t11 clip" style="left:656px;top:941px;width:314px;color:#000">Затраты на обеспечение безопасности строящихся</div>
<div class="t11 r" style="left:1012px;top:941px;width:78px;color:#000">0,00</div>
<div class="t11 r" style="left:1093px;top:941px;width:78px;color:#000">0,00</div>
<div class="t11 r" style="left:1174px;top:941px;width:78px;color:#000">0,00</div>
<div class="t11 r" style="left:1255px;top:941px;width:72px;color:#000">0,00</div>
<div class="t11 r" style="left:1330px;top:941px;width:98px;color:#000">0,00</div>
<div class="t11 r" style="left:1431px;top:941px;width:72px;color:#000">0,00</div>
<svg style="left:1527px;top:940px" width="8" height="12" viewBox="0 0 8 12"><path d="M0.8 7.2L2 6.6L3.6 10.5L6.6 0.3" fill="none" stroke="#ff0030" stroke-width="0.95"/></svg>
<div style="left:377px;top:953px;width:1245px;height:1px;background:#c8c8c8"></div>
<div style="left:377px;top:954px;width:1244px;height:15px;background:#fff"></div>
<div style="left:365px;top:954px;width:11px;height:15px;background:#f0f0f0"></div>
<div style="left:365px;top:954px;width:11px;height:1px;background:#fff"></div>
<div style="left:365px;top:954px;width:1px;height:15px;background:#fff"></div>
<div style="left:364px;top:969px;width:13px;height:1px;background:#808080"></div>
<div class="t11 r" style="left:377px;top:957px;width:31px;color:#000">54</div>
<svg style="left:436px;top:956px" width="10" height="10" viewBox="0 0 10 10"><rect x="0.5" y="0.5" width="9" height="9" fill="#fff" stroke="#7a7a7a"/><path d="M2.5 5 L4.3 7.5 L7.6 2.5" fill="none" stroke="#3a55a8" stroke-width="1.4"/></svg>
<svg style="left:484px;top:954px" width="13" height="16" viewBox="0 0 13 16"><defs><linearGradient id="gd" x1="0" y1="0" x2="0.3" y2="1"><stop offset="0" stop-color="#10a8ff"/><stop offset="0.5" stop-color="#60ccff"/><stop offset="1" stop-color="#c8f4ff"/></linearGradient></defs><path d="M3.5 0.5 H11.5 V14.5 H0.5 V3.5 Z" fill="url(#gd)" stroke="#444"/><path d="M0.8 3.5 L3.5 0.8 L3.5 3.5 Z" fill="#c8faff" stroke="#333" stroke-width="0.8"/><path d="M2 5.5H8.8M2 7.5H8.8M2 9.5H8.8M2 11.5H8.8" stroke="#6a6a78" stroke-width="0.9"/></svg>
<div class="t11" style="left:580px;top:957px;color:#000">2.20</div>
<div class="t11 clip" style="left:656px;top:957px;width:314px;color:#000">Затраты на страхование объекта строительства</div>
<div class="t11 r" style="left:1012px;top:957px;width:78px;color:#000">0,00</div>
<div class="t11 r" style="left:1093px;top:957px;width:78px;color:#000">0,00</div>
<div class="t11 r" style="left:1174px;top:957px;width:78px;color:#000">0,00</div>
<div class="t11 r" style="left:1255px;top:957px;width:72px;color:#000">0,00</div>
<div class="t11 r" style="left:1330px;top:957px;width:98px;color:#000">0,00</div>
<div class="t11 r" style="left:1431px;top:957px;width:72px;color:#000">0,00</div>
<svg style="left:1527px;top:956px" width="8" height="12" viewBox="0 0 8 12"><path d="M0.8 7.2L2 6.6L3.6 10.5L6.6 0.3" fill="none" stroke="#ff0030" stroke-width="0.95"/></svg>
<div style="left:377px;top:969px;width:1245px;height:1px;background:#c8c8c8"></div>
<div style="left:377px;top:970px;width:1244px;height:15px;background:#fff"></div>
<div style="left:365px;top:970px;width:11px;height:15px;background:#f0f0f0"></div>
<div style="left:365px;top:970px;width:11px;height:1px;background:#fff"></div>
<div style="left:365px;top:970px;width:1px;height:15px;background:#fff"></div>
<div style="left:364px;top:985px;width:13px;height:1px;background:#808080"></div>
<div class="t11 r" style="left:377px;top:973px;width:31px;color:#000">55</div>
<svg style="left:436px;top:972px" width="10" height="10" viewBox="0 0 10 10"><rect x="0.5" y="0.5" width="9" height="9" fill="#fff" stroke="#7a7a7a"/><path d="M2.5 5 L4.3 7.5 L7.6 2.5" fill="none" stroke="#3a55a8" stroke-width="1.4"/></svg>
<svg style="left:484px;top:970px" width="13" height="16" viewBox="0 0 13 16"><defs><linearGradient id="gd" x1="0" y1="0" x2="0.3" y2="1"><stop offset="0" stop-color="#10a8ff"/><stop offset="0.5" stop-color="#60ccff"/><stop offset="1" stop-color="#c8f4ff"/></linearGradient></defs><path d="M3.5 0.5 H11.5 V14.5 H0.5 V3.5 Z" fill="url(#gd)" stroke="#444"/><path d="M0.8 3.5 L3.5 0.8 L3.5 3.5 Z" fill="#c8faff" stroke="#333" stroke-width="0.8"/><path d="M2 5.5H8.8M2 7.5H8.8M2 9.5H8.8M2 11.5H8.8" stroke="#6a6a78" stroke-width="0.9"/></svg>
<div class="t11" style="left:580px;top:973px;color:#000">2.21</div>
<div class="t11 clip" style="left:656px;top:973px;width:314px;color:#000">Затраты, связанные с применением технологий информационного</div>
<div class="t11 r" style="left:1012px;top:973px;width:78px;color:#000">0,00</div>
<div class="t11 r" style="left:1093px;top:973px;width:78px;color:#000">0,00</div>
<div class="t11 r" style="left:1174px;top:973px;width:78px;color:#000">0,00</div>
<div class="t11 r" style="left:1255px;top:973px;width:72px;color:#000">0,00</div>
<div class="t11 r" style="left:1330px;top:973px;width:98px;color:#000">0,00</div>
<div class="t11 r" style="left:1431px;top:973px;width:72px;color:#000">0,00</div>
<svg style="left:1527px;top:972px" width="8" height="12" viewBox="0 0 8 12"><path d="M0.8 7.2L2 6.6L3.6 10.5L6.6 0.3" fill="none" stroke="#ff0030" stroke-width="0.95"/></svg>
<div style="left:377px;top:985px;width:1245px;height:1px;background:#c8c8c8"></div>
<div style="left:411px;top:122px;width:1px;height:864px;background:#c8c8c8"></div>
<div style="left:470px;top:122px;width:1px;height:864px;background:#c8c8c8"></div>
<div style="left:512px;top:122px;width:1px;height:864px;background:#c8c8c8"></div>
<div style="left:577px;top:122px;width:1px;height:864px;background:#c8c8c8"></div>
<div style="left:653px;top:122px;width:1px;height:864px;background:#c8c8c8"></div>
<div style="left:970px;top:122px;width:1px;height:864px;background:#c8c8c8"></div>
<div style="left:1011px;top:122px;width:1px;height:864px;background:#c8c8c8"></div>
<div style="left:1092px;top:122px;width:1px;height:864px;background:#c8c8c8"></div>
<div style="left:1173px;top:122px;width:1px;height:864px;background:#c8c8c8"></div>
<div style="left:1254px;top:122px;width:1px;height:864px;background:#c8c8c8"></div>
<div style="left:1329px;top:122px;width:1px;height:864px;background:#c8c8c8"></div>
<div style="left:1430px;top:122px;width:1px;height:864px;background:#c8c8c8"></div>
<div style="left:1505px;top:122px;width:1px;height:864px;background:#c8c8c8"></div>
<div style="left:1556px;top:122px;width:1px;height:864px;background:#c8c8c8"></div>
<div style="left:1621px;top:122px;width:1px;height:864px;background:#c8c8c8"></div>
<div style="left:653px;top:665px;width:318px;height:17px;border:1px dotted #ff9a30;box-sizing:border-box"></div>
<div style="left:376px;top:105px;width:1px;height:881px;background:#808080"></div>
<div style="left:1735px;top:106px;width:16px;height:880px;background:#f0f0f0"></div>
<svg style="left:1739px;top:110px" width="8" height="9" viewBox="0 0 8 9"><path d="M0.8 7L4 2.6L7.2 7" fill="none" stroke="#505050" stroke-width="1.9"/></svg>
<svg style="left:1739px;top:976px" width="8" height="7" viewBox="0 0 8 7"><path d="M0.8 1.2L4 4.5L7.2 1.2" fill="none" stroke="#505050" stroke-width="2"/></svg>
<div style="left:1736px;top:313px;width:14px;height:293px;background:#cdcdcd"></div>
<div style="left:364px;top:988px;width:1389px;height:1px;background:#a0a0a0"></div>
<div style="left:364px;top:992px;width:75px;height:21px;background-color:#fafafa;background-image:linear-gradient(45deg,#ececec 25%,transparent 25%,transparent 75%,#ececec 75%),linear-gradient(45deg,#ececec 25%,transparent 25%,transparent 75%,#ececec 75%);background-size:2px 2px;background-position:0 0,1px 1px;border-top:1px solid #a0a0a0;border-left:1px solid #a0a0a0;box-sizing:border-box"></div>
<div class="t11" style="left:369px;top:1000px;color:#000;">2000, Январь</div>
<div class="t11" style="left:449px;top:1000px;color:#000;">2025, Март</div>
<div style="left:405px;top:1022px;width:1349px;height:1px;background:#696969"></div>
<div style="left:405px;top:1023px;width:1349px;height:1px;background:#808080"></div>
<div style="left:362px;top:1023px;width:44px;height:20px;background:#f0f0f0"></div>
<div style="left:362px;top:1023px;width:1px;height:20px;background:#fff"></div>
<div style="left:362px;top:1043px;width:44px;height:1px;background:#696969"></div>
<div style="left:405px;top:1024px;width:1px;height:18px;background:#a0a0a0"></div>
<div class="t11" style="left:369px;top:1030px;color:#000;">ССР</div>
<div style="left:406px;top:1024px;width:83px;height:18px;background:#f0f0f0;border-left:1px solid #fff;border-right:1px solid #696969;border-bottom:1px solid #696969;box-sizing:border-box;box-shadow:inset -1px -1px 0 #a0a0a0"></div>
<div class="t11" style="left:411px;top:1028px;color:#000;">Сводка затрат</div>
<div style="left:491px;top:1024px;width:86px;height:18px;background:#f0f0f0;border-left:1px solid #fff;border-right:1px solid #696969;border-bottom:1px solid #696969;box-sizing:border-box;box-shadow:inset -1px -1px 0 #a0a0a0"></div>
<div class="t11" style="left:496px;top:1028px;color:#000;">Предпросмотр</div>
<div style="left:1px;top:1043px;width:356px;height:1px;background:#a0a0a0"></div>
<div style="left:1px;top:1044px;width:356px;height:1px;background:#fff"></div>
<div style="left:2px;top:1045px;width:1752px;height:40px;border-top:1px solid #a0a0a0;border-left:1px solid #a0a0a0;border-right:1px solid #fff;border-bottom:1px solid #fff;box-sizing:border-box"></div>
<div style="left:1633px;top:1054px;width:113px;height:22px;background:#f0f0f0;border-top:1px solid #fff;border-left:1px solid #fff;border-right:1px solid #6a6a6a;border-bottom:1px solid #6a6a6a;box-sizing:border-box;box-shadow:inset -1px -1px 0 #a0a0a0, inset 1px 1px 0 #e3e3e3"></div>
<div class="t11" style="left:1633px;top:1060px;width:113px;text-align:center">Закрыть</div>
<div style="left:1px;top:1085px;width:1754px;height:1px;background:#a0a0a0"></div>
<div style="left:1px;top:1086px;width:1754px;height:1px;background:#fff"></div>
<div style="left:2px;top:1116px;width:1753px;height:1px;background:#a0a0a0"></div>
<div style="left:4px;top:1089px;width:85px;height:26px;border-top:1px solid #a0a0a0;border-left:1px solid #a0a0a0;border-right:1px solid #fff;border-bottom:1px solid #fff;box-sizing:border-box"></div>
<div style="left:93px;top:1089px;width:296px;height:26px;border-top:1px solid #a0a0a0;border-left:1px solid #a0a0a0;border-right:1px solid #fff;border-bottom:1px solid #fff;box-sizing:border-box"></div>
<div style="left:393px;top:1089px;width:1292px;height:26px;border-top:1px solid #a0a0a0;border-left:1px solid #a0a0a0;border-right:1px solid #fff;border-bottom:1px solid #fff;box-sizing:border-box"></div>
<div style="left:1689px;top:1089px;width:30px;height:26px;border-top:1px solid #a0a0a0;border-left:1px solid #a0a0a0;border-right:1px solid #fff;border-bottom:1px solid #fff;box-sizing:border-box"></div>
<div style="left:1723px;top:1089px;width:30px;height:26px;border-top:1px solid #a0a0a0;border-left:1px solid #a0a0a0;border-right:1px solid #fff;border-bottom:1px solid #fff;box-sizing:border-box"></div>
<div style="left:90px;top:1087px;width:1px;height:30px;background:#a0a0a0"></div>
<div style="left:91px;top:1087px;width:1px;height:30px;background:#fff"></div>
<div style="left:390px;top:1087px;width:1px;height:30px;background:#a0a0a0"></div>
<div style="left:391px;top:1087px;width:1px;height:30px;background:#fff"></div>
<div style="left:1686px;top:1087px;width:1px;height:30px;background:#a0a0a0"></div>
<div style="left:1687px;top:1087px;width:1px;height:30px;background:#fff"></div>
<div style="left:1720px;top:1087px;width:1px;height:30px;background:#a0a0a0"></div>
<div style="left:1721px;top:1087px;width:1px;height:30px;background:#fff"></div>
<svg style="left:1695px;top:1093px" width="18" height="18" viewBox="0 0 18 18"><circle cx="9" cy="9" r="7" fill="#9a9a9a"/><rect x="8" y="7" width="2.5" height="6" fill="#e8e8e8"/><rect x="8" y="4" width="2.5" height="2" fill="#e8e8e8"/><path d="M1 2L16 16" stroke="#e01010" stroke-width="2"/></svg>
<div class="t11" style="left:1730px;top:1097px;color:#000;">RU</div>
<div style="left:904px;top:671px;width:292px;height:448px;background:#f0f0f0;border:1px solid #a0a0a0;border-bottom:none;box-sizing:border-box;box-shadow:inset 1px 1px 0 #fafafa, inset -1px 0 0 #fafafa"></div>
<div class="t12" style="left:929px;top:679px;color:#a0a0a0;">Детализация по смете...</div>
<div style="left:908px;top:699px;width:284px;height:1px;background:#a0a0a0"></div>
<div style="left:908px;top:700px;width:284px;height:1px;background:#fff"></div>
<svg style="left:908px;top:706px" width="16" height="16" viewBox="0 0 16 16"><rect x="2.5" y="0.5" width="10" height="15" rx="1" fill="#f5e8b8" stroke="#a06050"/><rect x="4" y="2" width="7" height="3" fill="#207070"/><path d="M4 7.5H11M4 10H11M4 12.5H11M6 6V14M8.5 6V14" stroke="#c8a870" stroke-width="0.8"/></svg>
<div class="t12" style="left:929px;top:708px;color:#000;">Рассчитать сводную смету</div>
<div class="t12" style="right:574px;top:708px;color:#000;">Ctrl+I</div>
<div class="t12" style="left:929px;top:729px;color:#000;">Учитывать ПНР только &quot;Вхолостую&quot;</div>
<div class="t12" style="right:574px;top:729px;color:#000;">Ctrl+T</div>
<div class="t12" style="left:929px;top:750px;color:#000;">Обновить признак ПР/НПР для ЛС/ОСР</div>
<div style="left:908px;top:770px;width:284px;height:1px;background:#a0a0a0"></div>
<div style="left:908px;top:771px;width:284px;height:1px;background:#fff"></div>
<svg style="left:908px;top:777px" width="16" height="16" viewBox="0 0 16 16"><path d="M0.5 3.5H6L7 5H15.5V15.5H0.5Z" fill="#f8e060" stroke="#999"/><rect x="10" y="0" width="6" height="6" rx="1" fill="#f07820"/><circle cx="13" cy="3" r="1.3" fill="#fff"/></svg>
<div class="t12" style="left:929px;top:779px;color:#000;">Добавить новую главу</div>
<svg style="left:908px;top:798px" width="16" height="16" viewBox="0 0 16 16"><path d="M1.5 3.5H10.5V15.5H1.5Z" fill="#b0d8f8" stroke="#335"/><path d="M3 7.5H9M3 9.5H9M3 11.5H9M3 13.5H9" stroke="#5a7090" stroke-width="0.8"/><path d="M12 0L13 3L16 4L13 5L12 8L11 5L8 4L11 3Z" fill="#f8e000"/></svg>
<div class="t12" style="left:929px;top:800px;color:#000;">Добавить начисление</div>
<div style="left:908px;top:820px;width:284px;height:1px;background:#a0a0a0"></div>
<div style="left:908px;top:821px;width:284px;height:1px;background:#fff"></div>
<svg style="left:908px;top:827px" width="16" height="16" viewBox="0 0 16 16"><path d="M2 2L14 14M14 2L2 14" stroke="#e01010" stroke-width="2"/></svg>
<div class="t12" style="left:929px;top:829px;color:#000;">Удалить</div>
<div class="t12" style="right:574px;top:829px;color:#000;">Ctrl+Del</div>
<div class="t12" style="left:929px;top:850px;color:#000;">Очистить сводную смету</div>
<div style="left:908px;top:870px;width:284px;height:1px;background:#a0a0a0"></div>
<div style="left:908px;top:871px;width:284px;height:1px;background:#fff"></div>
<div class="t12" style="left:929px;top:879px;color:#000;">Установить тип строки</div>
<svg style="left:1182px;top:881px" width="5" height="8" viewBox="0 0 5 8"><path d="M0 0L5 4L0 8Z" fill="#000"/></svg>
<div class="t12" style="left:929px;top:900px;color:#000;">Действие</div>
<svg style="left:1182px;top:902px" width="5" height="8" viewBox="0 0 5 8"><path d="M0 0L5 4L0 8Z" fill="#000"/></svg>
<div class="t12" style="left:929px;top:921px;color:#000;">Объединение</div>
<svg style="left:1182px;top:923px" width="5" height="8" viewBox="0 0 5 8"><path d="M0 0L5 4L0 8Z" fill="#000"/></svg>
<div class="t12" style="left:929px;top:942px;color:#000;">Установить признак печати</div>
<svg style="left:1182px;top:944px" width="5" height="8" viewBox="0 0 5 8"><path d="M0 0L5 4L0 8Z" fill="#000"/></svg>
<div style="left:907px;top:958px;width:283px;height:21px;background:#0078d7"></div>
<div class="t12" style="left:929px;top:963px;color:#fff;">Указать итог сводной сметы</div>
<svg style="left:1182px;top:965px" width="5" height="8" viewBox="0 0 5 8"><path d="M0 0L5 4L0 8Z" fill="#fff"/></svg>
<div class="t12" style="left:929px;top:984px;color:#000;">Признак расчета</div>
<svg style="left:1182px;top:986px" width="5" height="8" viewBox="0 0 5 8"><path d="M0 0L5 4L0 8Z" fill="#000"/></svg>
<div style="left:908px;top:1004px;width:284px;height:1px;background:#a0a0a0"></div>
<div style="left:908px;top:1005px;width:284px;height:1px;background:#fff"></div>
<div class="t12" style="left:929px;top:1013px;color:#000;">Экспорт</div>
<svg style="left:1182px;top:1015px" width="5" height="8" viewBox="0 0 5 8"><path d="M0 0L5 4L0 8Z" fill="#000"/></svg>
<div style="left:908px;top:1033px;width:284px;height:1px;background:#a0a0a0"></div>
<div style="left:908px;top:1034px;width:284px;height:1px;background:#fff"></div>
<div class="t12" style="left:929px;top:1042px;color:#000;">Вид</div>
<svg style="left:1182px;top:1044px" width="5" height="8" viewBox="0 0 5 8"><path d="M0 0L5 4L0 8Z" fill="#000"/></svg>
<div style="left:908px;top:1062px;width:284px;height:1px;background:#a0a0a0"></div>
<div style="left:908px;top:1063px;width:284px;height:1px;background:#fff"></div>
<div class="t12" style="left:929px;top:1071px;color:#000;">Показывать итоги</div>
<svg style="left:1182px;top:1073px" width="5" height="8" viewBox="0 0 5 8"><path d="M0 0L5 4L0 8Z" fill="#000"/></svg>
<div style="left:908px;top:1091px;width:284px;height:1px;background:#a0a0a0"></div>
<div style="left:908px;top:1092px;width:284px;height:1px;background:#fff"></div>
<div class="t12" style="left:929px;top:1100px;color:#000;">Настроить это меню...</div>
<div style="left:1190px;top:955px;width:215px;height:90px;background:#f0f0f0;border:1px solid #a0a0a0;box-sizing:border-box;box-shadow:inset 1px 1px 0 #fafafa, inset -1px -1px 0 #fafafa"></div>
<div class="t12" style="left:1215px;top:963px;color:#000;">Общий</div>
<div style="left:1193px;top:979px;width:209px;height:21px;background:#0078d7"></div>
<div class="t12" style="left:1215px;top:984px;color:#fff;">Возврат</div>
<div class="t12" style="left:1215px;top:1005px;color:#000;">НДС</div>
<div class="t12" style="left:1215px;top:1026px;color:#000;">Компенсационные выплаты</div>
<svg style="left:0;top:0" width="1756" height="1119" viewBox="0 0 1756 1119"><line x1="746.5" y1="679.5" x2="893" y2="952" stroke="#ff0000" stroke-width="3.6"/><path d="M885.9 955.6 L899.7 948.4 L904.5 973 Z" fill="#ff0000"/><line x1="1190.5" y1="965.2" x2="1262" y2="975.6" stroke="#ff0000" stroke-width="3.8"/><path d="M1262.7 967.5 L1260.3 983.5 L1285 978.7 Z" fill="#ff0000"/></svg></body></html>
